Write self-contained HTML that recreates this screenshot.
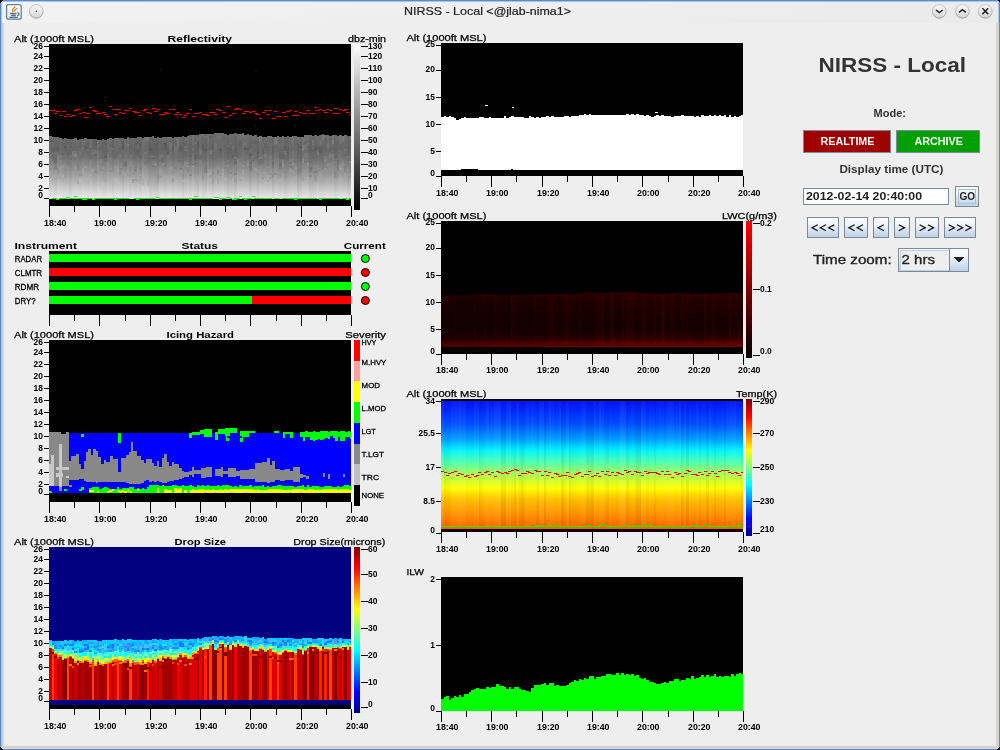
<!DOCTYPE html>
<html><head><meta charset="utf-8"><style>
html,body{margin:0;padding:0;width:1000px;height:750px;overflow:hidden;background:#eeeeee;}
svg{display:block;font-family:"Liberation Sans", sans-serif;position:absolute;left:0;top:0;}
.tx{filter:grayscale(1);}
text{shape-rendering:geometricPrecision;}
</style></head><body>
<svg width="1000" height="750" viewBox="0 0 1000 750" shape-rendering="crispEdges">
<defs><linearGradient id="gref" x1="0" y1="0" x2="0" y2="1"><stop offset="0" stop-color="#707070"/><stop offset="0.27" stop-color="#666"/><stop offset="0.4" stop-color="#707070"/><stop offset="0.5" stop-color="#828282"/><stop offset="0.65" stop-color="#989898"/><stop offset="0.8" stop-color="#b8b8b8"/><stop offset="0.9" stop-color="#d2d2d2"/><stop offset="1" stop-color="#e8e8e8"/></linearGradient><linearGradient id="gcbw" x1="0" y1="1" x2="0" y2="0"><stop offset="0" stop-color="#000"/><stop offset="1" stop-color="#fff"/></linearGradient><linearGradient id="gjet" x1="0" y1="1" x2="0" y2="0"><stop offset="0" stop-color="#00008f"/><stop offset="0.125" stop-color="#0000ff"/><stop offset="0.375" stop-color="#00ffff"/><stop offset="0.625" stop-color="#ffff00"/><stop offset="0.875" stop-color="#ff0000"/><stop offset="1" stop-color="#800000"/></linearGradient><linearGradient id="glwc" x1="0" y1="1" x2="0" y2="0"><stop offset="0" stop-color="#000"/><stop offset="1" stop-color="#ff0000"/></linearGradient><linearGradient id="gtemp" x1="0" y1="0" x2="0" y2="1"><stop offset="0" stop-color="#0010ff"/><stop offset="0.18" stop-color="#0050ff"/><stop offset="0.30" stop-color="#00a0ff"/><stop offset="0.38" stop-color="#00f0ff"/><stop offset="0.46" stop-color="#40ffc0"/><stop offset="0.58" stop-color="#b0ff50"/><stop offset="0.68" stop-color="#ffff00"/><stop offset="0.77" stop-color="#ffc000"/><stop offset="0.89" stop-color="#ff9000"/><stop offset="1" stop-color="#ff6000"/></linearGradient><linearGradient id="glw2" x1="0" y1="0" x2="0" y2="1"><stop offset="0" stop-color="#2e0000"/><stop offset="0.3" stop-color="#200000"/><stop offset="0.6" stop-color="#180000"/><stop offset="0.8" stop-color="#200000"/><stop offset="0.87" stop-color="#380000"/><stop offset="0.93" stop-color="#600000"/><stop offset="1" stop-color="#680000"/></linearGradient><linearGradient id="gbtn" x1="0" y1="0" x2="0" y2="1"><stop offset="0" stop-color="#ffffff"/><stop offset="0.3" stop-color="#f2f6fb"/><stop offset="1" stop-color="#bcd0e5"/></linearGradient><linearGradient id="gtb" x1="0" y1="0" x2="1" y2="0.3"><stop offset="0" stop-color="#f3f3f3"/><stop offset="1" stop-color="#ebebeb"/></linearGradient></defs>
<rect x="0.0" y="0.0" width="1000.0" height="23.0" fill="url(#gtb)" />
<rect x="0.0" y="23.0" width="1000.0" height="727.0" fill="#eeeeee" />
<rect x="0.0" y="0.0" width="1000.0" height="1.0" fill="#5a8ad0" />
<rect x="0.0" y="1.0" width="1000.0" height="1.0" fill="#a9c3e6" />
<rect x="0.0" y="0.0" width="1.0" height="750.0" fill="#5a8ad0" />
<rect x="1.0" y="1.0" width="1.0" height="748.0" fill="#a9c3e6" />
<rect x="999.0" y="0.0" width="1.0" height="750.0" fill="#5a8ad0" />
<rect x="998.0" y="1.0" width="1.0" height="748.0" fill="#a9c3e6" />
<rect x="0.0" y="749.0" width="1000.0" height="1.0" fill="#5a8ad0" />
<rect x="1.0" y="748.0" width="998.0" height="1.0" fill="#a9c3e6" />
<rect x="1.5" y="23.0" width="2.0" height="725.0" fill="#d6d2ce" />
<rect x="996.0" y="23.0" width="2.5" height="725.0" fill="#d6d2ce" />
<rect x="1.5" y="746.0" width="997.0" height="2.5" fill="#d6d2ce" />
<path d="M0,0 H3 L0,3 Z M1000,0 H997 L1000,3 Z M1000,750 H996 L1000,746 Z M0,750 H3 L0,747 Z" fill="#111"/>
<rect x="49.0" y="44.0" width="302.0" height="162.0" fill="#000" />
<rect x="49.0" y="131.0" width="302.0" height="68.0" fill="url(#gref)" />
<rect x="49.0" y="131.0" width="2.5" height="5.0" fill="#000" />
<rect x="49.0" y="136.0" width="2.5" height="63.0" fill="#fff" fill-opacity="0.01"/>
<rect x="49.0" y="140.0" width="2.5" height="2.0" fill="#000" fill-opacity="0.04"/>
<rect x="49.0" y="168.0" width="2.5" height="2.0" fill="#000" fill-opacity="0.07"/>
<rect x="49.0" y="140.0" width="2.5" height="2.0" fill="#000" fill-opacity="0.07"/>
<rect x="49.0" y="172.0" width="2.5" height="2.0" fill="#fff" fill-opacity="0.08"/>
<rect x="51.5" y="131.0" width="2.5" height="6.0" fill="#000" />
<rect x="51.5" y="137.0" width="2.5" height="62.0" fill="#fff" fill-opacity="0.00"/>
<rect x="51.5" y="140.0" width="2.5" height="2.0" fill="#000" fill-opacity="0.09"/>
<rect x="51.5" y="155.0" width="2.5" height="6.0" fill="#000" fill-opacity="0.05"/>
<rect x="51.5" y="156.0" width="2.5" height="2.0" fill="#000" fill-opacity="0.07"/>
<rect x="51.5" y="149.0" width="2.5" height="4.0" fill="#000" fill-opacity="0.08"/>
<rect x="54.0" y="131.0" width="2.5" height="6.0" fill="#000" />
<rect x="54.0" y="137.0" width="2.5" height="62.0" fill="#000" fill-opacity="0.03"/>
<rect x="54.0" y="171.0" width="2.5" height="6.0" fill="#fff" fill-opacity="0.07"/>
<rect x="54.0" y="166.0" width="2.5" height="4.0" fill="#000" fill-opacity="0.09"/>
<rect x="54.0" y="152.0" width="2.5" height="2.0" fill="#fff" fill-opacity="0.07"/>
<rect x="54.0" y="158.0" width="2.5" height="6.0" fill="#000" fill-opacity="0.10"/>
<rect x="56.5" y="131.0" width="2.5" height="6.0" fill="#000" />
<rect x="56.5" y="137.0" width="2.5" height="62.0" fill="#fff" fill-opacity="0.02"/>
<rect x="56.5" y="146.0" width="2.5" height="6.0" fill="#000" fill-opacity="0.10"/>
<rect x="56.5" y="141.0" width="2.5" height="4.0" fill="#000" fill-opacity="0.06"/>
<rect x="56.5" y="168.0" width="2.5" height="6.0" fill="#000" fill-opacity="0.05"/>
<rect x="56.5" y="154.0" width="2.5" height="6.0" fill="#fff" fill-opacity="0.04"/>
<rect x="59.0" y="131.0" width="2.5" height="7.0" fill="#000" />
<rect x="59.0" y="138.0" width="2.5" height="61.0" fill="#fff" fill-opacity="0.02"/>
<rect x="59.0" y="166.0" width="2.5" height="4.0" fill="#fff" fill-opacity="0.09"/>
<rect x="59.0" y="160.0" width="2.5" height="2.0" fill="#fff" fill-opacity="0.06"/>
<rect x="59.0" y="177.0" width="2.5" height="2.0" fill="#000" fill-opacity="0.05"/>
<rect x="59.0" y="156.0" width="2.5" height="2.0" fill="#fff" fill-opacity="0.06"/>
<rect x="61.5" y="131.0" width="2.5" height="8.0" fill="#000" />
<rect x="61.5" y="139.0" width="2.5" height="60.0" fill="#000" fill-opacity="0.02"/>
<rect x="61.5" y="164.0" width="2.5" height="4.0" fill="#fff" fill-opacity="0.09"/>
<rect x="61.5" y="174.0" width="2.5" height="4.0" fill="#fff" fill-opacity="0.10"/>
<rect x="61.5" y="163.0" width="2.5" height="2.0" fill="#000" fill-opacity="0.05"/>
<rect x="61.5" y="153.0" width="2.5" height="2.0" fill="#000" fill-opacity="0.09"/>
<rect x="64.0" y="131.0" width="2.5" height="7.0" fill="#000" />
<rect x="64.0" y="138.0" width="2.5" height="61.0" fill="#000" fill-opacity="0.01"/>
<rect x="64.0" y="172.0" width="2.5" height="4.0" fill="#fff" fill-opacity="0.06"/>
<rect x="64.0" y="146.0" width="2.5" height="2.0" fill="#000" fill-opacity="0.09"/>
<rect x="64.0" y="173.0" width="2.5" height="6.0" fill="#000" fill-opacity="0.06"/>
<rect x="64.0" y="168.0" width="2.5" height="6.0" fill="#000" fill-opacity="0.04"/>
<rect x="66.5" y="131.0" width="2.5" height="8.0" fill="#000" />
<rect x="66.5" y="139.0" width="2.5" height="60.0" fill="#000" fill-opacity="0.01"/>
<rect x="66.5" y="142.0" width="2.5" height="2.0" fill="#000" fill-opacity="0.05"/>
<rect x="66.5" y="145.0" width="2.5" height="4.0" fill="#fff" fill-opacity="0.04"/>
<rect x="66.5" y="152.0" width="2.5" height="6.0" fill="#000" fill-opacity="0.06"/>
<rect x="66.5" y="161.0" width="2.5" height="4.0" fill="#000" fill-opacity="0.05"/>
<rect x="69.0" y="131.0" width="2.5" height="8.0" fill="#000" />
<rect x="69.0" y="139.0" width="2.5" height="60.0" fill="#000" fill-opacity="0.05"/>
<rect x="69.0" y="158.0" width="2.5" height="2.0" fill="#000" fill-opacity="0.08"/>
<rect x="69.0" y="155.0" width="2.5" height="6.0" fill="#fff" fill-opacity="0.05"/>
<rect x="69.0" y="140.0" width="2.5" height="2.0" fill="#fff" fill-opacity="0.07"/>
<rect x="69.0" y="148.0" width="2.5" height="2.0" fill="#fff" fill-opacity="0.06"/>
<rect x="71.5" y="131.0" width="2.5" height="8.0" fill="#000" />
<rect x="71.5" y="139.0" width="2.5" height="60.0" fill="#fff" fill-opacity="0.00"/>
<rect x="71.5" y="172.0" width="2.5" height="4.0" fill="#fff" fill-opacity="0.06"/>
<rect x="71.5" y="153.0" width="2.5" height="4.0" fill="#fff" fill-opacity="0.08"/>
<rect x="71.5" y="151.0" width="2.5" height="2.0" fill="#fff" fill-opacity="0.08"/>
<rect x="71.5" y="153.0" width="2.5" height="2.0" fill="#fff" fill-opacity="0.06"/>
<rect x="74.0" y="131.0" width="2.5" height="7.0" fill="#000" />
<rect x="74.0" y="138.0" width="2.5" height="61.0" fill="#000" fill-opacity="0.00"/>
<rect x="74.0" y="154.0" width="2.5" height="2.0" fill="#fff" fill-opacity="0.10"/>
<rect x="74.0" y="166.0" width="2.5" height="4.0" fill="#fff" fill-opacity="0.06"/>
<rect x="74.0" y="152.0" width="2.5" height="2.0" fill="#000" fill-opacity="0.05"/>
<rect x="74.0" y="151.0" width="2.5" height="6.0" fill="#fff" fill-opacity="0.09"/>
<rect x="76.5" y="131.0" width="2.5" height="9.0" fill="#000" />
<rect x="76.5" y="140.0" width="2.5" height="59.0" fill="#fff" fill-opacity="0.02"/>
<rect x="76.5" y="181.0" width="2.5" height="2.0" fill="#fff" fill-opacity="0.05"/>
<rect x="76.5" y="164.0" width="2.5" height="2.0" fill="#000" fill-opacity="0.05"/>
<rect x="76.5" y="180.0" width="2.5" height="4.0" fill="#000" fill-opacity="0.10"/>
<rect x="76.5" y="165.0" width="2.5" height="6.0" fill="#000" fill-opacity="0.10"/>
<rect x="79.0" y="131.0" width="2.5" height="8.0" fill="#000" />
<rect x="79.0" y="139.0" width="2.5" height="60.0" fill="#000" fill-opacity="0.01"/>
<rect x="79.0" y="148.0" width="2.5" height="6.0" fill="#fff" fill-opacity="0.05"/>
<rect x="79.0" y="177.0" width="2.5" height="6.0" fill="#fff" fill-opacity="0.06"/>
<rect x="79.0" y="174.0" width="2.5" height="2.0" fill="#000" fill-opacity="0.09"/>
<rect x="79.0" y="180.0" width="2.5" height="2.0" fill="#fff" fill-opacity="0.10"/>
<rect x="81.5" y="131.0" width="2.5" height="8.0" fill="#000" />
<rect x="81.5" y="139.0" width="2.5" height="60.0" fill="#fff" fill-opacity="0.04"/>
<rect x="81.5" y="152.0" width="2.5" height="2.0" fill="#000" fill-opacity="0.06"/>
<rect x="81.5" y="154.0" width="2.5" height="4.0" fill="#000" fill-opacity="0.07"/>
<rect x="81.5" y="147.0" width="2.5" height="2.0" fill="#fff" fill-opacity="0.06"/>
<rect x="81.5" y="168.0" width="2.5" height="6.0" fill="#fff" fill-opacity="0.09"/>
<rect x="84.0" y="131.0" width="2.5" height="7.0" fill="#000" />
<rect x="84.0" y="138.0" width="2.5" height="61.0" fill="#fff" fill-opacity="0.01"/>
<rect x="84.0" y="166.0" width="2.5" height="2.0" fill="#fff" fill-opacity="0.09"/>
<rect x="84.0" y="147.0" width="2.5" height="2.0" fill="#000" fill-opacity="0.08"/>
<rect x="84.0" y="145.0" width="2.5" height="2.0" fill="#000" fill-opacity="0.07"/>
<rect x="84.0" y="173.0" width="2.5" height="6.0" fill="#fff" fill-opacity="0.05"/>
<rect x="86.5" y="131.0" width="2.5" height="8.0" fill="#000" />
<rect x="86.5" y="139.0" width="2.5" height="60.0" fill="#000" fill-opacity="0.01"/>
<rect x="86.5" y="145.0" width="2.5" height="6.0" fill="#fff" fill-opacity="0.09"/>
<rect x="86.5" y="143.0" width="2.5" height="6.0" fill="#000" fill-opacity="0.10"/>
<rect x="86.5" y="177.0" width="2.5" height="2.0" fill="#fff" fill-opacity="0.07"/>
<rect x="86.5" y="173.0" width="2.5" height="6.0" fill="#fff" fill-opacity="0.05"/>
<rect x="89.0" y="131.0" width="2.5" height="8.0" fill="#000" />
<rect x="89.0" y="139.0" width="2.5" height="60.0" fill="#fff" fill-opacity="0.04"/>
<rect x="89.0" y="174.0" width="2.5" height="2.0" fill="#fff" fill-opacity="0.05"/>
<rect x="89.0" y="146.0" width="2.5" height="6.0" fill="#000" fill-opacity="0.04"/>
<rect x="89.0" y="154.0" width="2.5" height="6.0" fill="#000" fill-opacity="0.08"/>
<rect x="89.0" y="146.0" width="2.5" height="2.0" fill="#fff" fill-opacity="0.08"/>
<rect x="91.5" y="131.0" width="2.5" height="8.0" fill="#000" />
<rect x="91.5" y="139.0" width="2.5" height="60.0" fill="#000" fill-opacity="0.01"/>
<rect x="91.5" y="168.0" width="2.5" height="2.0" fill="#fff" fill-opacity="0.05"/>
<rect x="91.5" y="170.0" width="2.5" height="2.0" fill="#fff" fill-opacity="0.09"/>
<rect x="91.5" y="149.0" width="2.5" height="6.0" fill="#fff" fill-opacity="0.06"/>
<rect x="91.5" y="165.0" width="2.5" height="2.0" fill="#000" fill-opacity="0.05"/>
<rect x="94.0" y="131.0" width="2.5" height="8.0" fill="#000" />
<rect x="94.0" y="139.0" width="2.5" height="60.0" fill="#000" fill-opacity="0.02"/>
<rect x="94.0" y="140.0" width="2.5" height="6.0" fill="#000" fill-opacity="0.08"/>
<rect x="94.0" y="171.0" width="2.5" height="2.0" fill="#000" fill-opacity="0.10"/>
<rect x="94.0" y="153.0" width="2.5" height="2.0" fill="#000" fill-opacity="0.06"/>
<rect x="94.0" y="150.0" width="2.5" height="4.0" fill="#fff" fill-opacity="0.09"/>
<rect x="96.5" y="131.0" width="2.5" height="9.0" fill="#000" />
<rect x="96.5" y="140.0" width="2.5" height="59.0" fill="#fff" fill-opacity="0.03"/>
<rect x="96.5" y="165.0" width="2.5" height="2.0" fill="#fff" fill-opacity="0.07"/>
<rect x="96.5" y="171.0" width="2.5" height="4.0" fill="#000" fill-opacity="0.04"/>
<rect x="96.5" y="151.0" width="2.5" height="6.0" fill="#fff" fill-opacity="0.06"/>
<rect x="96.5" y="141.0" width="2.5" height="2.0" fill="#fff" fill-opacity="0.05"/>
<rect x="99.0" y="131.0" width="2.5" height="9.0" fill="#000" />
<rect x="99.0" y="140.0" width="2.5" height="59.0" fill="#fff" fill-opacity="0.00"/>
<rect x="99.0" y="169.0" width="2.5" height="2.0" fill="#000" fill-opacity="0.07"/>
<rect x="99.0" y="157.0" width="2.5" height="2.0" fill="#000" fill-opacity="0.08"/>
<rect x="99.0" y="147.0" width="2.5" height="2.0" fill="#000" fill-opacity="0.05"/>
<rect x="99.0" y="159.0" width="2.5" height="4.0" fill="#fff" fill-opacity="0.05"/>
<rect x="101.5" y="131.0" width="2.5" height="8.0" fill="#000" />
<rect x="101.5" y="139.0" width="2.5" height="60.0" fill="#000" fill-opacity="0.03"/>
<rect x="101.5" y="140.0" width="2.5" height="4.0" fill="#000" fill-opacity="0.04"/>
<rect x="101.5" y="171.0" width="2.5" height="2.0" fill="#fff" fill-opacity="0.05"/>
<rect x="101.5" y="167.0" width="2.5" height="2.0" fill="#fff" fill-opacity="0.08"/>
<rect x="101.5" y="181.0" width="2.5" height="6.0" fill="#fff" fill-opacity="0.09"/>
<rect x="104.0" y="131.0" width="2.5" height="9.0" fill="#000" />
<rect x="104.0" y="140.0" width="2.5" height="59.0" fill="#000" fill-opacity="0.02"/>
<rect x="104.0" y="154.0" width="2.5" height="4.0" fill="#000" fill-opacity="0.09"/>
<rect x="104.0" y="180.0" width="2.5" height="2.0" fill="#000" fill-opacity="0.06"/>
<rect x="104.0" y="143.0" width="2.5" height="2.0" fill="#000" fill-opacity="0.08"/>
<rect x="104.0" y="156.0" width="2.5" height="6.0" fill="#000" fill-opacity="0.05"/>
<rect x="106.5" y="131.0" width="2.5" height="8.0" fill="#000" />
<rect x="106.5" y="139.0" width="2.5" height="60.0" fill="#fff" fill-opacity="0.04"/>
<rect x="106.5" y="157.0" width="2.5" height="2.0" fill="#fff" fill-opacity="0.04"/>
<rect x="106.5" y="150.0" width="2.5" height="2.0" fill="#000" fill-opacity="0.04"/>
<rect x="106.5" y="162.0" width="2.5" height="4.0" fill="#fff" fill-opacity="0.07"/>
<rect x="106.5" y="154.0" width="2.5" height="2.0" fill="#fff" fill-opacity="0.06"/>
<rect x="109.0" y="131.0" width="2.5" height="7.0" fill="#000" />
<rect x="109.0" y="138.0" width="2.5" height="61.0" fill="#000" fill-opacity="0.00"/>
<rect x="109.0" y="168.0" width="2.5" height="4.0" fill="#fff" fill-opacity="0.05"/>
<rect x="109.0" y="170.0" width="2.5" height="2.0" fill="#000" fill-opacity="0.09"/>
<rect x="109.0" y="147.0" width="2.5" height="6.0" fill="#fff" fill-opacity="0.06"/>
<rect x="109.0" y="157.0" width="2.5" height="4.0" fill="#fff" fill-opacity="0.05"/>
<rect x="111.5" y="131.0" width="2.5" height="8.0" fill="#000" />
<rect x="111.5" y="139.0" width="2.5" height="60.0" fill="#000" fill-opacity="0.04"/>
<rect x="111.5" y="177.0" width="2.5" height="6.0" fill="#fff" fill-opacity="0.08"/>
<rect x="111.5" y="170.0" width="2.5" height="2.0" fill="#000" fill-opacity="0.08"/>
<rect x="111.5" y="148.0" width="2.5" height="2.0" fill="#fff" fill-opacity="0.08"/>
<rect x="111.5" y="171.0" width="2.5" height="6.0" fill="#fff" fill-opacity="0.09"/>
<rect x="114.0" y="131.0" width="2.5" height="7.0" fill="#000" />
<rect x="114.0" y="138.0" width="2.5" height="61.0" fill="#fff" fill-opacity="0.03"/>
<rect x="114.0" y="139.0" width="2.5" height="2.0" fill="#000" fill-opacity="0.04"/>
<rect x="114.0" y="178.0" width="2.5" height="4.0" fill="#fff" fill-opacity="0.06"/>
<rect x="114.0" y="166.0" width="2.5" height="2.0" fill="#fff" fill-opacity="0.08"/>
<rect x="114.0" y="153.0" width="2.5" height="6.0" fill="#000" fill-opacity="0.07"/>
<rect x="116.5" y="131.0" width="2.5" height="7.0" fill="#000" />
<rect x="116.5" y="138.0" width="2.5" height="61.0" fill="#fff" fill-opacity="0.05"/>
<rect x="116.5" y="143.0" width="2.5" height="2.0" fill="#fff" fill-opacity="0.07"/>
<rect x="116.5" y="142.0" width="2.5" height="4.0" fill="#000" fill-opacity="0.09"/>
<rect x="116.5" y="152.0" width="2.5" height="6.0" fill="#000" fill-opacity="0.06"/>
<rect x="116.5" y="168.0" width="2.5" height="4.0" fill="#fff" fill-opacity="0.08"/>
<rect x="119.0" y="131.0" width="2.5" height="7.0" fill="#000" />
<rect x="119.0" y="138.0" width="2.5" height="61.0" fill="#000" fill-opacity="0.00"/>
<rect x="119.0" y="154.0" width="2.5" height="4.0" fill="#fff" fill-opacity="0.05"/>
<rect x="119.0" y="168.0" width="2.5" height="2.0" fill="#000" fill-opacity="0.10"/>
<rect x="119.0" y="144.0" width="2.5" height="2.0" fill="#fff" fill-opacity="0.06"/>
<rect x="119.0" y="171.0" width="2.5" height="4.0" fill="#000" fill-opacity="0.07"/>
<rect x="121.5" y="131.0" width="2.5" height="7.0" fill="#000" />
<rect x="121.5" y="138.0" width="2.5" height="61.0" fill="#000" fill-opacity="0.04"/>
<rect x="121.5" y="143.0" width="2.5" height="6.0" fill="#000" fill-opacity="0.07"/>
<rect x="121.5" y="170.0" width="2.5" height="6.0" fill="#fff" fill-opacity="0.06"/>
<rect x="121.5" y="151.0" width="2.5" height="2.0" fill="#fff" fill-opacity="0.05"/>
<rect x="121.5" y="171.0" width="2.5" height="4.0" fill="#fff" fill-opacity="0.05"/>
<rect x="124.0" y="131.0" width="2.5" height="8.0" fill="#000" />
<rect x="124.0" y="139.0" width="2.5" height="60.0" fill="#fff" fill-opacity="0.03"/>
<rect x="124.0" y="162.0" width="2.5" height="2.0" fill="#000" fill-opacity="0.09"/>
<rect x="124.0" y="164.0" width="2.5" height="2.0" fill="#000" fill-opacity="0.10"/>
<rect x="124.0" y="167.0" width="2.5" height="6.0" fill="#000" fill-opacity="0.05"/>
<rect x="124.0" y="161.0" width="2.5" height="6.0" fill="#000" fill-opacity="0.09"/>
<rect x="126.5" y="131.0" width="2.5" height="6.0" fill="#000" />
<rect x="126.5" y="137.0" width="2.5" height="62.0" fill="#fff" fill-opacity="0.04"/>
<rect x="126.5" y="144.0" width="2.5" height="2.0" fill="#fff" fill-opacity="0.09"/>
<rect x="126.5" y="155.0" width="2.5" height="4.0" fill="#000" fill-opacity="0.06"/>
<rect x="126.5" y="174.0" width="2.5" height="2.0" fill="#000" fill-opacity="0.07"/>
<rect x="126.5" y="154.0" width="2.5" height="2.0" fill="#000" fill-opacity="0.04"/>
<rect x="129.0" y="131.0" width="2.5" height="7.0" fill="#000" />
<rect x="129.0" y="138.0" width="2.5" height="61.0" fill="#000" fill-opacity="0.03"/>
<rect x="129.0" y="155.0" width="2.5" height="6.0" fill="#fff" fill-opacity="0.05"/>
<rect x="129.0" y="161.0" width="2.5" height="6.0" fill="#fff" fill-opacity="0.09"/>
<rect x="129.0" y="178.0" width="2.5" height="6.0" fill="#fff" fill-opacity="0.10"/>
<rect x="129.0" y="173.0" width="2.5" height="2.0" fill="#fff" fill-opacity="0.04"/>
<rect x="131.5" y="131.0" width="2.5" height="7.0" fill="#000" />
<rect x="131.5" y="138.0" width="2.5" height="61.0" fill="#fff" fill-opacity="0.02"/>
<rect x="131.5" y="179.0" width="2.5" height="4.0" fill="#000" fill-opacity="0.09"/>
<rect x="131.5" y="173.0" width="2.5" height="2.0" fill="#000" fill-opacity="0.06"/>
<rect x="131.5" y="156.0" width="2.5" height="4.0" fill="#000" fill-opacity="0.08"/>
<rect x="131.5" y="179.0" width="2.5" height="4.0" fill="#000" fill-opacity="0.05"/>
<rect x="134.0" y="131.0" width="2.5" height="7.0" fill="#000" />
<rect x="134.0" y="138.0" width="2.5" height="61.0" fill="#000" fill-opacity="0.03"/>
<rect x="134.0" y="179.0" width="2.5" height="2.0" fill="#000" fill-opacity="0.07"/>
<rect x="134.0" y="169.0" width="2.5" height="2.0" fill="#000" fill-opacity="0.06"/>
<rect x="134.0" y="166.0" width="2.5" height="6.0" fill="#000" fill-opacity="0.05"/>
<rect x="134.0" y="143.0" width="2.5" height="2.0" fill="#000" fill-opacity="0.05"/>
<rect x="136.5" y="131.0" width="2.5" height="6.0" fill="#000" />
<rect x="136.5" y="137.0" width="2.5" height="62.0" fill="#fff" fill-opacity="0.01"/>
<rect x="136.5" y="138.0" width="2.5" height="6.0" fill="#000" fill-opacity="0.08"/>
<rect x="136.5" y="150.0" width="2.5" height="6.0" fill="#000" fill-opacity="0.09"/>
<rect x="136.5" y="168.0" width="2.5" height="4.0" fill="#fff" fill-opacity="0.06"/>
<rect x="136.5" y="180.0" width="2.5" height="2.0" fill="#000" fill-opacity="0.09"/>
<rect x="139.0" y="131.0" width="2.5" height="6.0" fill="#000" />
<rect x="139.0" y="137.0" width="2.5" height="62.0" fill="#000" fill-opacity="0.03"/>
<rect x="139.0" y="156.0" width="2.5" height="2.0" fill="#000" fill-opacity="0.07"/>
<rect x="139.0" y="167.0" width="2.5" height="6.0" fill="#000" fill-opacity="0.06"/>
<rect x="139.0" y="170.0" width="2.5" height="6.0" fill="#fff" fill-opacity="0.05"/>
<rect x="139.0" y="143.0" width="2.5" height="2.0" fill="#000" fill-opacity="0.07"/>
<rect x="141.5" y="131.0" width="2.5" height="7.0" fill="#000" />
<rect x="141.5" y="138.0" width="2.5" height="61.0" fill="#fff" fill-opacity="0.05"/>
<rect x="141.5" y="179.0" width="2.5" height="6.0" fill="#000" fill-opacity="0.09"/>
<rect x="141.5" y="138.0" width="2.5" height="2.0" fill="#000" fill-opacity="0.10"/>
<rect x="141.5" y="179.0" width="2.5" height="4.0" fill="#fff" fill-opacity="0.08"/>
<rect x="141.5" y="171.0" width="2.5" height="6.0" fill="#fff" fill-opacity="0.05"/>
<rect x="144.0" y="131.0" width="2.5" height="6.0" fill="#000" />
<rect x="144.0" y="137.0" width="2.5" height="62.0" fill="#fff" fill-opacity="0.03"/>
<rect x="144.0" y="161.0" width="2.5" height="4.0" fill="#000" fill-opacity="0.08"/>
<rect x="144.0" y="137.0" width="2.5" height="4.0" fill="#fff" fill-opacity="0.06"/>
<rect x="144.0" y="157.0" width="2.5" height="2.0" fill="#000" fill-opacity="0.05"/>
<rect x="144.0" y="152.0" width="2.5" height="2.0" fill="#fff" fill-opacity="0.08"/>
<rect x="146.5" y="131.0" width="2.5" height="6.0" fill="#000" />
<rect x="146.5" y="137.0" width="2.5" height="62.0" fill="#000" fill-opacity="0.00"/>
<rect x="146.5" y="180.0" width="2.5" height="6.0" fill="#000" fill-opacity="0.05"/>
<rect x="146.5" y="164.0" width="2.5" height="4.0" fill="#000" fill-opacity="0.04"/>
<rect x="146.5" y="158.0" width="2.5" height="6.0" fill="#000" fill-opacity="0.06"/>
<rect x="146.5" y="137.0" width="2.5" height="4.0" fill="#fff" fill-opacity="0.07"/>
<rect x="149.0" y="131.0" width="2.5" height="6.0" fill="#000" />
<rect x="149.0" y="137.0" width="2.5" height="62.0" fill="#000" fill-opacity="0.05"/>
<rect x="149.0" y="149.0" width="2.5" height="2.0" fill="#000" fill-opacity="0.06"/>
<rect x="149.0" y="155.0" width="2.5" height="2.0" fill="#fff" fill-opacity="0.07"/>
<rect x="149.0" y="148.0" width="2.5" height="2.0" fill="#000" fill-opacity="0.09"/>
<rect x="149.0" y="140.0" width="2.5" height="2.0" fill="#fff" fill-opacity="0.04"/>
<rect x="151.5" y="131.0" width="2.5" height="5.0" fill="#000" />
<rect x="151.5" y="136.0" width="2.5" height="63.0" fill="#000" fill-opacity="0.03"/>
<rect x="151.5" y="139.0" width="2.5" height="2.0" fill="#000" fill-opacity="0.09"/>
<rect x="151.5" y="156.0" width="2.5" height="2.0" fill="#fff" fill-opacity="0.10"/>
<rect x="151.5" y="157.0" width="2.5" height="2.0" fill="#000" fill-opacity="0.10"/>
<rect x="151.5" y="165.0" width="2.5" height="2.0" fill="#000" fill-opacity="0.08"/>
<rect x="154.0" y="131.0" width="2.5" height="7.0" fill="#000" />
<rect x="154.0" y="138.0" width="2.5" height="61.0" fill="#000" fill-opacity="0.05"/>
<rect x="154.0" y="144.0" width="2.5" height="2.0" fill="#000" fill-opacity="0.04"/>
<rect x="154.0" y="164.0" width="2.5" height="2.0" fill="#fff" fill-opacity="0.09"/>
<rect x="154.0" y="162.0" width="2.5" height="4.0" fill="#fff" fill-opacity="0.06"/>
<rect x="154.0" y="165.0" width="2.5" height="2.0" fill="#000" fill-opacity="0.07"/>
<rect x="156.5" y="131.0" width="2.5" height="6.0" fill="#000" />
<rect x="156.5" y="137.0" width="2.5" height="62.0" fill="#000" fill-opacity="0.05"/>
<rect x="156.5" y="160.0" width="2.5" height="6.0" fill="#000" fill-opacity="0.06"/>
<rect x="156.5" y="177.0" width="2.5" height="6.0" fill="#000" fill-opacity="0.04"/>
<rect x="156.5" y="141.0" width="2.5" height="2.0" fill="#000" fill-opacity="0.08"/>
<rect x="156.5" y="175.0" width="2.5" height="4.0" fill="#000" fill-opacity="0.06"/>
<rect x="159.0" y="131.0" width="2.5" height="7.0" fill="#000" />
<rect x="159.0" y="138.0" width="2.5" height="61.0" fill="#fff" fill-opacity="0.00"/>
<rect x="159.0" y="158.0" width="2.5" height="4.0" fill="#000" fill-opacity="0.08"/>
<rect x="159.0" y="176.0" width="2.5" height="2.0" fill="#000" fill-opacity="0.05"/>
<rect x="159.0" y="168.0" width="2.5" height="6.0" fill="#fff" fill-opacity="0.06"/>
<rect x="159.0" y="154.0" width="2.5" height="6.0" fill="#fff" fill-opacity="0.05"/>
<rect x="161.5" y="131.0" width="2.5" height="6.0" fill="#000" />
<rect x="161.5" y="137.0" width="2.5" height="62.0" fill="#fff" fill-opacity="0.00"/>
<rect x="161.5" y="156.0" width="2.5" height="2.0" fill="#fff" fill-opacity="0.06"/>
<rect x="161.5" y="157.0" width="2.5" height="6.0" fill="#000" fill-opacity="0.09"/>
<rect x="161.5" y="142.0" width="2.5" height="2.0" fill="#000" fill-opacity="0.05"/>
<rect x="161.5" y="163.0" width="2.5" height="2.0" fill="#fff" fill-opacity="0.07"/>
<rect x="164.0" y="131.0" width="2.5" height="6.0" fill="#000" />
<rect x="164.0" y="137.0" width="2.5" height="62.0" fill="#000" fill-opacity="0.01"/>
<rect x="164.0" y="143.0" width="2.5" height="2.0" fill="#000" fill-opacity="0.05"/>
<rect x="164.0" y="143.0" width="2.5" height="6.0" fill="#000" fill-opacity="0.08"/>
<rect x="164.0" y="165.0" width="2.5" height="2.0" fill="#000" fill-opacity="0.07"/>
<rect x="164.0" y="176.0" width="2.5" height="2.0" fill="#fff" fill-opacity="0.09"/>
<rect x="166.5" y="131.0" width="2.5" height="6.0" fill="#000" />
<rect x="166.5" y="137.0" width="2.5" height="62.0" fill="#fff" fill-opacity="0.01"/>
<rect x="166.5" y="155.0" width="2.5" height="4.0" fill="#fff" fill-opacity="0.06"/>
<rect x="166.5" y="153.0" width="2.5" height="2.0" fill="#000" fill-opacity="0.05"/>
<rect x="166.5" y="152.0" width="2.5" height="2.0" fill="#000" fill-opacity="0.09"/>
<rect x="166.5" y="149.0" width="2.5" height="4.0" fill="#000" fill-opacity="0.06"/>
<rect x="169.0" y="131.0" width="2.5" height="6.0" fill="#000" />
<rect x="169.0" y="137.0" width="2.5" height="62.0" fill="#fff" fill-opacity="0.03"/>
<rect x="169.0" y="143.0" width="2.5" height="6.0" fill="#fff" fill-opacity="0.05"/>
<rect x="169.0" y="167.0" width="2.5" height="2.0" fill="#fff" fill-opacity="0.09"/>
<rect x="169.0" y="139.0" width="2.5" height="4.0" fill="#000" fill-opacity="0.04"/>
<rect x="169.0" y="175.0" width="2.5" height="2.0" fill="#fff" fill-opacity="0.06"/>
<rect x="171.5" y="131.0" width="2.5" height="7.0" fill="#000" />
<rect x="171.5" y="138.0" width="2.5" height="61.0" fill="#000" fill-opacity="0.02"/>
<rect x="171.5" y="180.0" width="2.5" height="2.0" fill="#000" fill-opacity="0.08"/>
<rect x="171.5" y="177.0" width="2.5" height="4.0" fill="#000" fill-opacity="0.06"/>
<rect x="171.5" y="147.0" width="2.5" height="2.0" fill="#000" fill-opacity="0.06"/>
<rect x="171.5" y="176.0" width="2.5" height="2.0" fill="#fff" fill-opacity="0.09"/>
<rect x="174.0" y="131.0" width="2.5" height="6.0" fill="#000" />
<rect x="174.0" y="137.0" width="2.5" height="62.0" fill="#fff" fill-opacity="0.02"/>
<rect x="174.0" y="141.0" width="2.5" height="2.0" fill="#000" fill-opacity="0.07"/>
<rect x="174.0" y="167.0" width="2.5" height="2.0" fill="#000" fill-opacity="0.09"/>
<rect x="174.0" y="179.0" width="2.5" height="2.0" fill="#fff" fill-opacity="0.05"/>
<rect x="174.0" y="147.0" width="2.5" height="6.0" fill="#fff" fill-opacity="0.06"/>
<rect x="176.5" y="131.0" width="2.5" height="6.0" fill="#000" />
<rect x="176.5" y="137.0" width="2.5" height="62.0" fill="#fff" fill-opacity="0.02"/>
<rect x="176.5" y="156.0" width="2.5" height="4.0" fill="#000" fill-opacity="0.04"/>
<rect x="176.5" y="160.0" width="2.5" height="2.0" fill="#000" fill-opacity="0.06"/>
<rect x="176.5" y="137.0" width="2.5" height="6.0" fill="#fff" fill-opacity="0.07"/>
<rect x="176.5" y="142.0" width="2.5" height="6.0" fill="#fff" fill-opacity="0.06"/>
<rect x="179.0" y="131.0" width="2.5" height="6.0" fill="#000" />
<rect x="179.0" y="137.0" width="2.5" height="62.0" fill="#000" fill-opacity="0.01"/>
<rect x="179.0" y="146.0" width="2.5" height="6.0" fill="#000" fill-opacity="0.08"/>
<rect x="179.0" y="160.0" width="2.5" height="2.0" fill="#000" fill-opacity="0.06"/>
<rect x="179.0" y="170.0" width="2.5" height="2.0" fill="#fff" fill-opacity="0.05"/>
<rect x="179.0" y="168.0" width="2.5" height="2.0" fill="#000" fill-opacity="0.09"/>
<rect x="181.5" y="131.0" width="2.5" height="5.0" fill="#000" />
<rect x="181.5" y="136.0" width="2.5" height="63.0" fill="#000" fill-opacity="0.05"/>
<rect x="181.5" y="174.0" width="2.5" height="6.0" fill="#000" fill-opacity="0.08"/>
<rect x="181.5" y="180.0" width="2.5" height="2.0" fill="#fff" fill-opacity="0.09"/>
<rect x="181.5" y="175.0" width="2.5" height="6.0" fill="#fff" fill-opacity="0.05"/>
<rect x="181.5" y="166.0" width="2.5" height="2.0" fill="#fff" fill-opacity="0.04"/>
<rect x="184.0" y="131.0" width="2.5" height="6.0" fill="#000" />
<rect x="184.0" y="137.0" width="2.5" height="62.0" fill="#000" fill-opacity="0.01"/>
<rect x="184.0" y="146.0" width="2.5" height="2.0" fill="#fff" fill-opacity="0.09"/>
<rect x="184.0" y="149.0" width="2.5" height="2.0" fill="#fff" fill-opacity="0.09"/>
<rect x="184.0" y="180.0" width="2.5" height="2.0" fill="#fff" fill-opacity="0.06"/>
<rect x="184.0" y="161.0" width="2.5" height="6.0" fill="#fff" fill-opacity="0.08"/>
<rect x="186.5" y="131.0" width="2.5" height="5.0" fill="#000" />
<rect x="186.5" y="136.0" width="2.5" height="63.0" fill="#fff" fill-opacity="0.02"/>
<rect x="186.5" y="163.0" width="2.5" height="6.0" fill="#fff" fill-opacity="0.07"/>
<rect x="186.5" y="164.0" width="2.5" height="2.0" fill="#000" fill-opacity="0.08"/>
<rect x="186.5" y="167.0" width="2.5" height="6.0" fill="#000" fill-opacity="0.09"/>
<rect x="186.5" y="165.0" width="2.5" height="2.0" fill="#fff" fill-opacity="0.06"/>
<rect x="189.0" y="131.0" width="2.5" height="4.0" fill="#000" />
<rect x="189.0" y="135.0" width="2.5" height="64.0" fill="#000" fill-opacity="0.02"/>
<rect x="189.0" y="163.0" width="2.5" height="2.0" fill="#000" fill-opacity="0.05"/>
<rect x="189.0" y="155.0" width="2.5" height="2.0" fill="#000" fill-opacity="0.07"/>
<rect x="189.0" y="159.0" width="2.5" height="2.0" fill="#000" fill-opacity="0.04"/>
<rect x="189.0" y="174.0" width="2.5" height="2.0" fill="#000" fill-opacity="0.10"/>
<rect x="191.5" y="131.0" width="2.5" height="4.0" fill="#000" />
<rect x="191.5" y="135.0" width="2.5" height="64.0" fill="#fff" fill-opacity="0.05"/>
<rect x="191.5" y="145.0" width="2.5" height="2.0" fill="#000" fill-opacity="0.06"/>
<rect x="191.5" y="151.0" width="2.5" height="2.0" fill="#000" fill-opacity="0.08"/>
<rect x="191.5" y="164.0" width="2.5" height="2.0" fill="#000" fill-opacity="0.10"/>
<rect x="191.5" y="165.0" width="2.5" height="2.0" fill="#fff" fill-opacity="0.08"/>
<rect x="194.0" y="131.0" width="2.5" height="4.0" fill="#000" />
<rect x="194.0" y="135.0" width="2.5" height="64.0" fill="#000" fill-opacity="0.02"/>
<rect x="194.0" y="160.0" width="2.5" height="2.0" fill="#fff" fill-opacity="0.06"/>
<rect x="194.0" y="155.0" width="2.5" height="6.0" fill="#000" fill-opacity="0.09"/>
<rect x="194.0" y="142.0" width="2.5" height="2.0" fill="#fff" fill-opacity="0.06"/>
<rect x="194.0" y="163.0" width="2.5" height="2.0" fill="#000" fill-opacity="0.07"/>
<rect x="196.5" y="131.0" width="2.5" height="4.0" fill="#000" />
<rect x="196.5" y="135.0" width="2.5" height="64.0" fill="#000" fill-opacity="0.04"/>
<rect x="196.5" y="159.0" width="2.5" height="4.0" fill="#fff" fill-opacity="0.06"/>
<rect x="196.5" y="140.0" width="2.5" height="6.0" fill="#000" fill-opacity="0.08"/>
<rect x="196.5" y="138.0" width="2.5" height="4.0" fill="#fff" fill-opacity="0.06"/>
<rect x="196.5" y="175.0" width="2.5" height="4.0" fill="#fff" fill-opacity="0.08"/>
<rect x="199.0" y="131.0" width="2.5" height="3.0" fill="#000" />
<rect x="199.0" y="134.0" width="2.5" height="65.0" fill="#fff" fill-opacity="0.01"/>
<rect x="199.0" y="160.0" width="2.5" height="4.0" fill="#fff" fill-opacity="0.05"/>
<rect x="199.0" y="148.0" width="2.5" height="2.0" fill="#000" fill-opacity="0.04"/>
<rect x="199.0" y="156.0" width="2.5" height="4.0" fill="#000" fill-opacity="0.06"/>
<rect x="199.0" y="148.0" width="2.5" height="6.0" fill="#fff" fill-opacity="0.08"/>
<rect x="201.5" y="131.0" width="2.5" height="3.0" fill="#000" />
<rect x="201.5" y="134.0" width="2.5" height="65.0" fill="#000" fill-opacity="0.03"/>
<rect x="201.5" y="142.0" width="2.5" height="2.0" fill="#fff" fill-opacity="0.05"/>
<rect x="201.5" y="143.0" width="2.5" height="6.0" fill="#000" fill-opacity="0.08"/>
<rect x="201.5" y="176.0" width="2.5" height="4.0" fill="#000" fill-opacity="0.06"/>
<rect x="201.5" y="134.0" width="2.5" height="2.0" fill="#fff" fill-opacity="0.07"/>
<rect x="204.0" y="131.0" width="2.5" height="3.0" fill="#000" />
<rect x="204.0" y="134.0" width="2.5" height="65.0" fill="#000" fill-opacity="0.03"/>
<rect x="204.0" y="167.0" width="2.5" height="6.0" fill="#000" fill-opacity="0.09"/>
<rect x="204.0" y="136.0" width="2.5" height="2.0" fill="#fff" fill-opacity="0.06"/>
<rect x="204.0" y="149.0" width="2.5" height="2.0" fill="#000" fill-opacity="0.09"/>
<rect x="204.0" y="134.0" width="2.5" height="2.0" fill="#000" fill-opacity="0.05"/>
<rect x="206.5" y="131.0" width="2.5" height="3.0" fill="#000" />
<rect x="206.5" y="134.0" width="2.5" height="65.0" fill="#fff" fill-opacity="0.03"/>
<rect x="206.5" y="173.0" width="2.5" height="2.0" fill="#fff" fill-opacity="0.04"/>
<rect x="206.5" y="174.0" width="2.5" height="2.0" fill="#fff" fill-opacity="0.08"/>
<rect x="206.5" y="164.0" width="2.5" height="2.0" fill="#000" fill-opacity="0.07"/>
<rect x="206.5" y="163.0" width="2.5" height="2.0" fill="#fff" fill-opacity="0.07"/>
<rect x="209.0" y="131.0" width="2.5" height="3.0" fill="#000" />
<rect x="209.0" y="134.0" width="2.5" height="65.0" fill="#000" fill-opacity="0.01"/>
<rect x="209.0" y="136.0" width="2.5" height="2.0" fill="#000" fill-opacity="0.08"/>
<rect x="209.0" y="178.0" width="2.5" height="4.0" fill="#fff" fill-opacity="0.06"/>
<rect x="209.0" y="169.0" width="2.5" height="6.0" fill="#fff" fill-opacity="0.10"/>
<rect x="209.0" y="150.0" width="2.5" height="4.0" fill="#fff" fill-opacity="0.10"/>
<rect x="211.5" y="131.0" width="2.5" height="3.0" fill="#000" />
<rect x="211.5" y="134.0" width="2.5" height="65.0" fill="#000" fill-opacity="0.04"/>
<rect x="211.5" y="150.0" width="2.5" height="2.0" fill="#fff" fill-opacity="0.05"/>
<rect x="211.5" y="144.0" width="2.5" height="4.0" fill="#000" fill-opacity="0.06"/>
<rect x="211.5" y="172.0" width="2.5" height="2.0" fill="#000" fill-opacity="0.09"/>
<rect x="211.5" y="178.0" width="2.5" height="6.0" fill="#000" fill-opacity="0.07"/>
<rect x="214.0" y="131.0" width="2.5" height="2.0" fill="#000" />
<rect x="214.0" y="133.0" width="2.5" height="66.0" fill="#fff" fill-opacity="0.00"/>
<rect x="214.0" y="147.0" width="2.5" height="4.0" fill="#fff" fill-opacity="0.06"/>
<rect x="214.0" y="170.0" width="2.5" height="2.0" fill="#fff" fill-opacity="0.05"/>
<rect x="214.0" y="135.0" width="2.5" height="2.0" fill="#000" fill-opacity="0.08"/>
<rect x="214.0" y="143.0" width="2.5" height="4.0" fill="#fff" fill-opacity="0.08"/>
<rect x="216.5" y="131.0" width="2.5" height="2.0" fill="#000" />
<rect x="216.5" y="133.0" width="2.5" height="66.0" fill="#fff" fill-opacity="0.01"/>
<rect x="216.5" y="135.0" width="2.5" height="2.0" fill="#fff" fill-opacity="0.04"/>
<rect x="216.5" y="170.0" width="2.5" height="4.0" fill="#000" fill-opacity="0.10"/>
<rect x="216.5" y="167.0" width="2.5" height="2.0" fill="#fff" fill-opacity="0.09"/>
<rect x="216.5" y="178.0" width="2.5" height="6.0" fill="#000" fill-opacity="0.05"/>
<rect x="219.0" y="131.0" width="2.5" height="2.0" fill="#000" />
<rect x="219.0" y="133.0" width="2.5" height="66.0" fill="#fff" fill-opacity="0.00"/>
<rect x="219.0" y="173.0" width="2.5" height="2.0" fill="#fff" fill-opacity="0.08"/>
<rect x="219.0" y="151.0" width="2.5" height="6.0" fill="#000" fill-opacity="0.05"/>
<rect x="219.0" y="174.0" width="2.5" height="2.0" fill="#000" fill-opacity="0.06"/>
<rect x="219.0" y="149.0" width="2.5" height="2.0" fill="#000" fill-opacity="0.10"/>
<rect x="221.5" y="131.0" width="2.5" height="2.0" fill="#000" />
<rect x="221.5" y="133.0" width="2.5" height="66.0" fill="#fff" fill-opacity="0.04"/>
<rect x="221.5" y="171.0" width="2.5" height="6.0" fill="#fff" fill-opacity="0.08"/>
<rect x="221.5" y="134.0" width="2.5" height="6.0" fill="#000" fill-opacity="0.07"/>
<rect x="221.5" y="139.0" width="2.5" height="4.0" fill="#000" fill-opacity="0.04"/>
<rect x="221.5" y="169.0" width="2.5" height="2.0" fill="#fff" fill-opacity="0.09"/>
<rect x="224.0" y="131.0" width="2.5" height="3.0" fill="#000" />
<rect x="224.0" y="134.0" width="2.5" height="65.0" fill="#000" fill-opacity="0.01"/>
<rect x="224.0" y="167.0" width="2.5" height="2.0" fill="#000" fill-opacity="0.09"/>
<rect x="224.0" y="137.0" width="2.5" height="2.0" fill="#000" fill-opacity="0.05"/>
<rect x="224.0" y="178.0" width="2.5" height="2.0" fill="#fff" fill-opacity="0.08"/>
<rect x="224.0" y="166.0" width="2.5" height="4.0" fill="#fff" fill-opacity="0.05"/>
<rect x="226.5" y="131.0" width="2.5" height="4.0" fill="#000" />
<rect x="226.5" y="135.0" width="2.5" height="64.0" fill="#000" fill-opacity="0.05"/>
<rect x="226.5" y="145.0" width="2.5" height="2.0" fill="#fff" fill-opacity="0.09"/>
<rect x="226.5" y="166.0" width="2.5" height="2.0" fill="#fff" fill-opacity="0.06"/>
<rect x="226.5" y="160.0" width="2.5" height="6.0" fill="#fff" fill-opacity="0.08"/>
<rect x="226.5" y="162.0" width="2.5" height="2.0" fill="#000" fill-opacity="0.06"/>
<rect x="229.0" y="131.0" width="2.5" height="3.0" fill="#000" />
<rect x="229.0" y="134.0" width="2.5" height="65.0" fill="#000" fill-opacity="0.03"/>
<rect x="229.0" y="174.0" width="2.5" height="2.0" fill="#fff" fill-opacity="0.05"/>
<rect x="229.0" y="172.0" width="2.5" height="2.0" fill="#000" fill-opacity="0.06"/>
<rect x="229.0" y="143.0" width="2.5" height="6.0" fill="#fff" fill-opacity="0.08"/>
<rect x="229.0" y="144.0" width="2.5" height="6.0" fill="#000" fill-opacity="0.09"/>
<rect x="231.5" y="131.0" width="2.5" height="3.0" fill="#000" />
<rect x="231.5" y="134.0" width="2.5" height="65.0" fill="#000" fill-opacity="0.01"/>
<rect x="231.5" y="178.0" width="2.5" height="2.0" fill="#fff" fill-opacity="0.06"/>
<rect x="231.5" y="179.0" width="2.5" height="2.0" fill="#fff" fill-opacity="0.10"/>
<rect x="231.5" y="154.0" width="2.5" height="4.0" fill="#000" fill-opacity="0.06"/>
<rect x="231.5" y="146.0" width="2.5" height="4.0" fill="#fff" fill-opacity="0.08"/>
<rect x="234.0" y="131.0" width="2.5" height="2.0" fill="#000" />
<rect x="234.0" y="133.0" width="2.5" height="66.0" fill="#000" fill-opacity="0.05"/>
<rect x="234.0" y="157.0" width="2.5" height="2.0" fill="#fff" fill-opacity="0.09"/>
<rect x="234.0" y="179.0" width="2.5" height="4.0" fill="#000" fill-opacity="0.05"/>
<rect x="234.0" y="173.0" width="2.5" height="2.0" fill="#000" fill-opacity="0.09"/>
<rect x="234.0" y="162.0" width="2.5" height="2.0" fill="#000" fill-opacity="0.09"/>
<rect x="236.5" y="131.0" width="2.5" height="3.0" fill="#000" />
<rect x="236.5" y="134.0" width="2.5" height="65.0" fill="#fff" fill-opacity="0.01"/>
<rect x="236.5" y="152.0" width="2.5" height="6.0" fill="#000" fill-opacity="0.06"/>
<rect x="236.5" y="159.0" width="2.5" height="2.0" fill="#fff" fill-opacity="0.09"/>
<rect x="236.5" y="161.0" width="2.5" height="6.0" fill="#fff" fill-opacity="0.08"/>
<rect x="236.5" y="175.0" width="2.5" height="2.0" fill="#fff" fill-opacity="0.08"/>
<rect x="239.0" y="131.0" width="2.5" height="3.0" fill="#000" />
<rect x="239.0" y="134.0" width="2.5" height="65.0" fill="#fff" fill-opacity="0.02"/>
<rect x="239.0" y="140.0" width="2.5" height="6.0" fill="#000" fill-opacity="0.06"/>
<rect x="239.0" y="179.0" width="2.5" height="2.0" fill="#000" fill-opacity="0.07"/>
<rect x="239.0" y="163.0" width="2.5" height="2.0" fill="#fff" fill-opacity="0.06"/>
<rect x="239.0" y="177.0" width="2.5" height="2.0" fill="#fff" fill-opacity="0.06"/>
<rect x="241.5" y="131.0" width="2.5" height="2.0" fill="#000" />
<rect x="241.5" y="133.0" width="2.5" height="66.0" fill="#fff" fill-opacity="0.04"/>
<rect x="241.5" y="139.0" width="2.5" height="2.0" fill="#000" fill-opacity="0.05"/>
<rect x="241.5" y="178.0" width="2.5" height="2.0" fill="#fff" fill-opacity="0.05"/>
<rect x="241.5" y="169.0" width="2.5" height="6.0" fill="#fff" fill-opacity="0.08"/>
<rect x="241.5" y="165.0" width="2.5" height="2.0" fill="#fff" fill-opacity="0.09"/>
<rect x="244.0" y="131.0" width="2.5" height="4.0" fill="#000" />
<rect x="244.0" y="135.0" width="2.5" height="64.0" fill="#fff" fill-opacity="0.02"/>
<rect x="244.0" y="148.0" width="2.5" height="2.0" fill="#000" fill-opacity="0.09"/>
<rect x="244.0" y="142.0" width="2.5" height="4.0" fill="#fff" fill-opacity="0.06"/>
<rect x="244.0" y="159.0" width="2.5" height="6.0" fill="#000" fill-opacity="0.04"/>
<rect x="244.0" y="161.0" width="2.5" height="4.0" fill="#fff" fill-opacity="0.05"/>
<rect x="246.5" y="131.0" width="2.5" height="3.0" fill="#000" />
<rect x="246.5" y="134.0" width="2.5" height="65.0" fill="#fff" fill-opacity="0.02"/>
<rect x="246.5" y="148.0" width="2.5" height="6.0" fill="#000" fill-opacity="0.05"/>
<rect x="246.5" y="138.0" width="2.5" height="2.0" fill="#000" fill-opacity="0.07"/>
<rect x="246.5" y="148.0" width="2.5" height="2.0" fill="#000" fill-opacity="0.08"/>
<rect x="246.5" y="160.0" width="2.5" height="6.0" fill="#fff" fill-opacity="0.09"/>
<rect x="249.0" y="131.0" width="2.5" height="4.0" fill="#000" />
<rect x="249.0" y="135.0" width="2.5" height="64.0" fill="#000" fill-opacity="0.04"/>
<rect x="249.0" y="149.0" width="2.5" height="4.0" fill="#fff" fill-opacity="0.08"/>
<rect x="249.0" y="162.0" width="2.5" height="2.0" fill="#000" fill-opacity="0.09"/>
<rect x="249.0" y="152.0" width="2.5" height="4.0" fill="#000" fill-opacity="0.06"/>
<rect x="249.0" y="165.0" width="2.5" height="6.0" fill="#000" fill-opacity="0.08"/>
<rect x="251.5" y="131.0" width="2.5" height="5.0" fill="#000" />
<rect x="251.5" y="136.0" width="2.5" height="63.0" fill="#fff" fill-opacity="0.02"/>
<rect x="251.5" y="160.0" width="2.5" height="2.0" fill="#000" fill-opacity="0.07"/>
<rect x="251.5" y="156.0" width="2.5" height="2.0" fill="#fff" fill-opacity="0.06"/>
<rect x="251.5" y="173.0" width="2.5" height="2.0" fill="#fff" fill-opacity="0.05"/>
<rect x="251.5" y="140.0" width="2.5" height="4.0" fill="#000" fill-opacity="0.05"/>
<rect x="254.0" y="131.0" width="2.5" height="4.0" fill="#000" />
<rect x="254.0" y="135.0" width="2.5" height="64.0" fill="#fff" fill-opacity="0.01"/>
<rect x="254.0" y="157.0" width="2.5" height="2.0" fill="#000" fill-opacity="0.06"/>
<rect x="254.0" y="169.0" width="2.5" height="2.0" fill="#fff" fill-opacity="0.08"/>
<rect x="254.0" y="140.0" width="2.5" height="4.0" fill="#000" fill-opacity="0.08"/>
<rect x="254.0" y="168.0" width="2.5" height="2.0" fill="#fff" fill-opacity="0.07"/>
<rect x="256.5" y="131.0" width="2.5" height="6.0" fill="#000" />
<rect x="256.5" y="137.0" width="2.5" height="62.0" fill="#000" fill-opacity="0.03"/>
<rect x="256.5" y="151.0" width="2.5" height="2.0" fill="#000" fill-opacity="0.07"/>
<rect x="256.5" y="167.0" width="2.5" height="6.0" fill="#fff" fill-opacity="0.08"/>
<rect x="256.5" y="152.0" width="2.5" height="6.0" fill="#000" fill-opacity="0.08"/>
<rect x="256.5" y="137.0" width="2.5" height="2.0" fill="#fff" fill-opacity="0.07"/>
<rect x="259.0" y="131.0" width="2.5" height="5.0" fill="#000" />
<rect x="259.0" y="136.0" width="2.5" height="63.0" fill="#fff" fill-opacity="0.03"/>
<rect x="259.0" y="159.0" width="2.5" height="6.0" fill="#000" fill-opacity="0.10"/>
<rect x="259.0" y="140.0" width="2.5" height="2.0" fill="#fff" fill-opacity="0.08"/>
<rect x="259.0" y="137.0" width="2.5" height="2.0" fill="#fff" fill-opacity="0.08"/>
<rect x="259.0" y="157.0" width="2.5" height="2.0" fill="#fff" fill-opacity="0.07"/>
<rect x="261.5" y="131.0" width="2.5" height="6.0" fill="#000" />
<rect x="261.5" y="137.0" width="2.5" height="62.0" fill="#fff" fill-opacity="0.00"/>
<rect x="261.5" y="177.0" width="2.5" height="2.0" fill="#000" fill-opacity="0.09"/>
<rect x="261.5" y="160.0" width="2.5" height="4.0" fill="#000" fill-opacity="0.07"/>
<rect x="261.5" y="150.0" width="2.5" height="4.0" fill="#000" fill-opacity="0.07"/>
<rect x="261.5" y="172.0" width="2.5" height="2.0" fill="#fff" fill-opacity="0.06"/>
<rect x="264.0" y="131.0" width="2.5" height="6.0" fill="#000" />
<rect x="264.0" y="137.0" width="2.5" height="62.0" fill="#fff" fill-opacity="0.02"/>
<rect x="264.0" y="154.0" width="2.5" height="4.0" fill="#fff" fill-opacity="0.08"/>
<rect x="264.0" y="144.0" width="2.5" height="4.0" fill="#000" fill-opacity="0.08"/>
<rect x="264.0" y="145.0" width="2.5" height="2.0" fill="#fff" fill-opacity="0.04"/>
<rect x="264.0" y="172.0" width="2.5" height="6.0" fill="#fff" fill-opacity="0.04"/>
<rect x="266.5" y="131.0" width="2.5" height="5.0" fill="#000" />
<rect x="266.5" y="136.0" width="2.5" height="63.0" fill="#000" fill-opacity="0.00"/>
<rect x="266.5" y="166.0" width="2.5" height="2.0" fill="#fff" fill-opacity="0.09"/>
<rect x="266.5" y="175.0" width="2.5" height="6.0" fill="#fff" fill-opacity="0.08"/>
<rect x="266.5" y="180.0" width="2.5" height="2.0" fill="#000" fill-opacity="0.08"/>
<rect x="266.5" y="165.0" width="2.5" height="2.0" fill="#000" fill-opacity="0.05"/>
<rect x="269.0" y="131.0" width="2.5" height="5.0" fill="#000" />
<rect x="269.0" y="136.0" width="2.5" height="63.0" fill="#fff" fill-opacity="0.04"/>
<rect x="269.0" y="177.0" width="2.5" height="2.0" fill="#000" fill-opacity="0.09"/>
<rect x="269.0" y="155.0" width="2.5" height="4.0" fill="#fff" fill-opacity="0.05"/>
<rect x="269.0" y="138.0" width="2.5" height="4.0" fill="#000" fill-opacity="0.07"/>
<rect x="269.0" y="173.0" width="2.5" height="2.0" fill="#000" fill-opacity="0.07"/>
<rect x="271.5" y="131.0" width="2.5" height="6.0" fill="#000" />
<rect x="271.5" y="137.0" width="2.5" height="62.0" fill="#000" fill-opacity="0.04"/>
<rect x="271.5" y="162.0" width="2.5" height="6.0" fill="#000" fill-opacity="0.08"/>
<rect x="271.5" y="175.0" width="2.5" height="2.0" fill="#000" fill-opacity="0.06"/>
<rect x="271.5" y="143.0" width="2.5" height="2.0" fill="#fff" fill-opacity="0.05"/>
<rect x="271.5" y="146.0" width="2.5" height="2.0" fill="#000" fill-opacity="0.04"/>
<rect x="274.0" y="131.0" width="2.5" height="6.0" fill="#000" />
<rect x="274.0" y="137.0" width="2.5" height="62.0" fill="#fff" fill-opacity="0.05"/>
<rect x="274.0" y="150.0" width="2.5" height="2.0" fill="#000" fill-opacity="0.04"/>
<rect x="274.0" y="173.0" width="2.5" height="2.0" fill="#000" fill-opacity="0.08"/>
<rect x="274.0" y="140.0" width="2.5" height="4.0" fill="#fff" fill-opacity="0.08"/>
<rect x="274.0" y="146.0" width="2.5" height="2.0" fill="#000" fill-opacity="0.07"/>
<rect x="276.5" y="131.0" width="2.5" height="5.0" fill="#000" />
<rect x="276.5" y="136.0" width="2.5" height="63.0" fill="#fff" fill-opacity="0.03"/>
<rect x="276.5" y="139.0" width="2.5" height="2.0" fill="#000" fill-opacity="0.04"/>
<rect x="276.5" y="177.0" width="2.5" height="2.0" fill="#000" fill-opacity="0.06"/>
<rect x="276.5" y="174.0" width="2.5" height="2.0" fill="#fff" fill-opacity="0.09"/>
<rect x="276.5" y="174.0" width="2.5" height="2.0" fill="#000" fill-opacity="0.10"/>
<rect x="279.0" y="131.0" width="2.5" height="6.0" fill="#000" />
<rect x="279.0" y="137.0" width="2.5" height="62.0" fill="#000" fill-opacity="0.02"/>
<rect x="279.0" y="144.0" width="2.5" height="4.0" fill="#fff" fill-opacity="0.05"/>
<rect x="279.0" y="163.0" width="2.5" height="6.0" fill="#000" fill-opacity="0.09"/>
<rect x="279.0" y="154.0" width="2.5" height="4.0" fill="#000" fill-opacity="0.04"/>
<rect x="279.0" y="178.0" width="2.5" height="4.0" fill="#fff" fill-opacity="0.08"/>
<rect x="281.5" y="131.0" width="2.5" height="5.0" fill="#000" />
<rect x="281.5" y="136.0" width="2.5" height="63.0" fill="#fff" fill-opacity="0.01"/>
<rect x="281.5" y="173.0" width="2.5" height="6.0" fill="#fff" fill-opacity="0.05"/>
<rect x="281.5" y="160.0" width="2.5" height="6.0" fill="#fff" fill-opacity="0.09"/>
<rect x="281.5" y="164.0" width="2.5" height="4.0" fill="#fff" fill-opacity="0.06"/>
<rect x="281.5" y="153.0" width="2.5" height="6.0" fill="#000" fill-opacity="0.10"/>
<rect x="284.0" y="131.0" width="2.5" height="6.0" fill="#000" />
<rect x="284.0" y="137.0" width="2.5" height="62.0" fill="#000" fill-opacity="0.04"/>
<rect x="284.0" y="146.0" width="2.5" height="2.0" fill="#000" fill-opacity="0.09"/>
<rect x="284.0" y="172.0" width="2.5" height="6.0" fill="#000" fill-opacity="0.05"/>
<rect x="284.0" y="172.0" width="2.5" height="6.0" fill="#fff" fill-opacity="0.05"/>
<rect x="284.0" y="151.0" width="2.5" height="4.0" fill="#fff" fill-opacity="0.08"/>
<rect x="286.5" y="131.0" width="2.5" height="5.0" fill="#000" />
<rect x="286.5" y="136.0" width="2.5" height="63.0" fill="#000" fill-opacity="0.01"/>
<rect x="286.5" y="136.0" width="2.5" height="6.0" fill="#000" fill-opacity="0.05"/>
<rect x="286.5" y="158.0" width="2.5" height="2.0" fill="#000" fill-opacity="0.07"/>
<rect x="286.5" y="152.0" width="2.5" height="4.0" fill="#000" fill-opacity="0.08"/>
<rect x="286.5" y="148.0" width="2.5" height="2.0" fill="#000" fill-opacity="0.05"/>
<rect x="289.0" y="131.0" width="2.5" height="6.0" fill="#000" />
<rect x="289.0" y="137.0" width="2.5" height="62.0" fill="#fff" fill-opacity="0.02"/>
<rect x="289.0" y="162.0" width="2.5" height="2.0" fill="#000" fill-opacity="0.10"/>
<rect x="289.0" y="168.0" width="2.5" height="4.0" fill="#fff" fill-opacity="0.06"/>
<rect x="289.0" y="166.0" width="2.5" height="2.0" fill="#000" fill-opacity="0.08"/>
<rect x="289.0" y="159.0" width="2.5" height="4.0" fill="#fff" fill-opacity="0.04"/>
<rect x="291.5" y="131.0" width="2.5" height="5.0" fill="#000" />
<rect x="291.5" y="136.0" width="2.5" height="63.0" fill="#fff" fill-opacity="0.05"/>
<rect x="291.5" y="167.0" width="2.5" height="2.0" fill="#000" fill-opacity="0.09"/>
<rect x="291.5" y="163.0" width="2.5" height="2.0" fill="#fff" fill-opacity="0.09"/>
<rect x="291.5" y="174.0" width="2.5" height="2.0" fill="#000" fill-opacity="0.04"/>
<rect x="291.5" y="148.0" width="2.5" height="2.0" fill="#000" fill-opacity="0.04"/>
<rect x="294.0" y="131.0" width="2.5" height="5.0" fill="#000" />
<rect x="294.0" y="136.0" width="2.5" height="63.0" fill="#fff" fill-opacity="0.02"/>
<rect x="294.0" y="167.0" width="2.5" height="2.0" fill="#fff" fill-opacity="0.08"/>
<rect x="294.0" y="143.0" width="2.5" height="2.0" fill="#000" fill-opacity="0.07"/>
<rect x="294.0" y="177.0" width="2.5" height="2.0" fill="#fff" fill-opacity="0.08"/>
<rect x="294.0" y="161.0" width="2.5" height="2.0" fill="#000" fill-opacity="0.05"/>
<rect x="296.5" y="131.0" width="2.5" height="6.0" fill="#000" />
<rect x="296.5" y="137.0" width="2.5" height="62.0" fill="#000" fill-opacity="0.05"/>
<rect x="296.5" y="139.0" width="2.5" height="4.0" fill="#fff" fill-opacity="0.04"/>
<rect x="296.5" y="172.0" width="2.5" height="2.0" fill="#fff" fill-opacity="0.04"/>
<rect x="296.5" y="169.0" width="2.5" height="6.0" fill="#000" fill-opacity="0.05"/>
<rect x="296.5" y="137.0" width="2.5" height="2.0" fill="#fff" fill-opacity="0.06"/>
<rect x="299.0" y="131.0" width="2.5" height="6.0" fill="#000" />
<rect x="299.0" y="137.0" width="2.5" height="62.0" fill="#000" fill-opacity="0.04"/>
<rect x="299.0" y="157.0" width="2.5" height="4.0" fill="#000" fill-opacity="0.05"/>
<rect x="299.0" y="167.0" width="2.5" height="6.0" fill="#000" fill-opacity="0.05"/>
<rect x="299.0" y="146.0" width="2.5" height="2.0" fill="#000" fill-opacity="0.09"/>
<rect x="299.0" y="139.0" width="2.5" height="2.0" fill="#fff" fill-opacity="0.05"/>
<rect x="301.5" y="131.0" width="2.5" height="6.0" fill="#000" />
<rect x="301.5" y="137.0" width="2.5" height="62.0" fill="#fff" fill-opacity="0.04"/>
<rect x="301.5" y="145.0" width="2.5" height="6.0" fill="#fff" fill-opacity="0.10"/>
<rect x="301.5" y="161.0" width="2.5" height="2.0" fill="#fff" fill-opacity="0.07"/>
<rect x="301.5" y="158.0" width="2.5" height="4.0" fill="#fff" fill-opacity="0.07"/>
<rect x="301.5" y="177.0" width="2.5" height="4.0" fill="#000" fill-opacity="0.05"/>
<rect x="304.0" y="131.0" width="2.5" height="4.0" fill="#000" />
<rect x="304.0" y="135.0" width="2.5" height="64.0" fill="#fff" fill-opacity="0.04"/>
<rect x="304.0" y="144.0" width="2.5" height="6.0" fill="#fff" fill-opacity="0.06"/>
<rect x="304.0" y="161.0" width="2.5" height="2.0" fill="#000" fill-opacity="0.06"/>
<rect x="304.0" y="153.0" width="2.5" height="4.0" fill="#fff" fill-opacity="0.06"/>
<rect x="304.0" y="141.0" width="2.5" height="4.0" fill="#000" fill-opacity="0.07"/>
<rect x="306.5" y="131.0" width="2.5" height="4.0" fill="#000" />
<rect x="306.5" y="135.0" width="2.5" height="64.0" fill="#fff" fill-opacity="0.03"/>
<rect x="306.5" y="177.0" width="2.5" height="2.0" fill="#fff" fill-opacity="0.09"/>
<rect x="306.5" y="142.0" width="2.5" height="4.0" fill="#fff" fill-opacity="0.10"/>
<rect x="306.5" y="162.0" width="2.5" height="4.0" fill="#fff" fill-opacity="0.10"/>
<rect x="306.5" y="141.0" width="2.5" height="6.0" fill="#000" fill-opacity="0.09"/>
<rect x="309.0" y="131.0" width="2.5" height="4.0" fill="#000" />
<rect x="309.0" y="135.0" width="2.5" height="64.0" fill="#000" fill-opacity="0.04"/>
<rect x="309.0" y="175.0" width="2.5" height="2.0" fill="#000" fill-opacity="0.07"/>
<rect x="309.0" y="167.0" width="2.5" height="2.0" fill="#000" fill-opacity="0.09"/>
<rect x="309.0" y="168.0" width="2.5" height="4.0" fill="#000" fill-opacity="0.07"/>
<rect x="309.0" y="161.0" width="2.5" height="2.0" fill="#000" fill-opacity="0.05"/>
<rect x="311.5" y="131.0" width="2.5" height="5.0" fill="#000" />
<rect x="311.5" y="136.0" width="2.5" height="63.0" fill="#000" fill-opacity="0.03"/>
<rect x="311.5" y="147.0" width="2.5" height="2.0" fill="#fff" fill-opacity="0.09"/>
<rect x="311.5" y="174.0" width="2.5" height="6.0" fill="#fff" fill-opacity="0.05"/>
<rect x="311.5" y="144.0" width="2.5" height="2.0" fill="#fff" fill-opacity="0.05"/>
<rect x="311.5" y="140.0" width="2.5" height="6.0" fill="#fff" fill-opacity="0.09"/>
<rect x="314.0" y="131.0" width="2.5" height="4.0" fill="#000" />
<rect x="314.0" y="135.0" width="2.5" height="64.0" fill="#000" fill-opacity="0.02"/>
<rect x="314.0" y="175.0" width="2.5" height="6.0" fill="#000" fill-opacity="0.06"/>
<rect x="314.0" y="165.0" width="2.5" height="2.0" fill="#fff" fill-opacity="0.06"/>
<rect x="314.0" y="146.0" width="2.5" height="4.0" fill="#000" fill-opacity="0.08"/>
<rect x="314.0" y="171.0" width="2.5" height="2.0" fill="#000" fill-opacity="0.10"/>
<rect x="316.5" y="131.0" width="2.5" height="5.0" fill="#000" />
<rect x="316.5" y="136.0" width="2.5" height="63.0" fill="#000" fill-opacity="0.00"/>
<rect x="316.5" y="151.0" width="2.5" height="4.0" fill="#fff" fill-opacity="0.09"/>
<rect x="316.5" y="172.0" width="2.5" height="2.0" fill="#000" fill-opacity="0.05"/>
<rect x="316.5" y="167.0" width="2.5" height="6.0" fill="#fff" fill-opacity="0.07"/>
<rect x="316.5" y="170.0" width="2.5" height="2.0" fill="#000" fill-opacity="0.10"/>
<rect x="319.0" y="131.0" width="2.5" height="4.0" fill="#000" />
<rect x="319.0" y="135.0" width="2.5" height="64.0" fill="#000" fill-opacity="0.01"/>
<rect x="319.0" y="151.0" width="2.5" height="2.0" fill="#000" fill-opacity="0.10"/>
<rect x="319.0" y="147.0" width="2.5" height="4.0" fill="#000" fill-opacity="0.08"/>
<rect x="319.0" y="171.0" width="2.5" height="6.0" fill="#fff" fill-opacity="0.08"/>
<rect x="319.0" y="141.0" width="2.5" height="4.0" fill="#fff" fill-opacity="0.08"/>
<rect x="321.5" y="131.0" width="2.5" height="3.0" fill="#000" />
<rect x="321.5" y="134.0" width="2.5" height="65.0" fill="#000" fill-opacity="0.01"/>
<rect x="321.5" y="166.0" width="2.5" height="4.0" fill="#000" fill-opacity="0.05"/>
<rect x="321.5" y="142.0" width="2.5" height="2.0" fill="#fff" fill-opacity="0.05"/>
<rect x="321.5" y="170.0" width="2.5" height="6.0" fill="#fff" fill-opacity="0.05"/>
<rect x="321.5" y="135.0" width="2.5" height="6.0" fill="#fff" fill-opacity="0.08"/>
<rect x="324.0" y="131.0" width="2.5" height="4.0" fill="#000" />
<rect x="324.0" y="135.0" width="2.5" height="64.0" fill="#fff" fill-opacity="0.00"/>
<rect x="324.0" y="138.0" width="2.5" height="4.0" fill="#000" fill-opacity="0.05"/>
<rect x="324.0" y="156.0" width="2.5" height="6.0" fill="#fff" fill-opacity="0.07"/>
<rect x="324.0" y="155.0" width="2.5" height="6.0" fill="#fff" fill-opacity="0.04"/>
<rect x="324.0" y="168.0" width="2.5" height="2.0" fill="#fff" fill-opacity="0.10"/>
<rect x="326.5" y="131.0" width="2.5" height="4.0" fill="#000" />
<rect x="326.5" y="135.0" width="2.5" height="64.0" fill="#fff" fill-opacity="0.02"/>
<rect x="326.5" y="158.0" width="2.5" height="2.0" fill="#fff" fill-opacity="0.04"/>
<rect x="326.5" y="162.0" width="2.5" height="2.0" fill="#fff" fill-opacity="0.04"/>
<rect x="326.5" y="143.0" width="2.5" height="6.0" fill="#fff" fill-opacity="0.09"/>
<rect x="326.5" y="164.0" width="2.5" height="2.0" fill="#fff" fill-opacity="0.09"/>
<rect x="329.0" y="131.0" width="2.5" height="5.0" fill="#000" />
<rect x="329.0" y="136.0" width="2.5" height="63.0" fill="#fff" fill-opacity="0.00"/>
<rect x="329.0" y="153.0" width="2.5" height="4.0" fill="#fff" fill-opacity="0.09"/>
<rect x="329.0" y="138.0" width="2.5" height="2.0" fill="#000" fill-opacity="0.07"/>
<rect x="329.0" y="163.0" width="2.5" height="2.0" fill="#fff" fill-opacity="0.06"/>
<rect x="329.0" y="155.0" width="2.5" height="4.0" fill="#fff" fill-opacity="0.05"/>
<rect x="331.5" y="131.0" width="2.5" height="4.0" fill="#000" />
<rect x="331.5" y="135.0" width="2.5" height="64.0" fill="#fff" fill-opacity="0.05"/>
<rect x="331.5" y="152.0" width="2.5" height="2.0" fill="#000" fill-opacity="0.07"/>
<rect x="331.5" y="144.0" width="2.5" height="6.0" fill="#000" fill-opacity="0.05"/>
<rect x="331.5" y="153.0" width="2.5" height="6.0" fill="#fff" fill-opacity="0.06"/>
<rect x="331.5" y="140.0" width="2.5" height="4.0" fill="#fff" fill-opacity="0.08"/>
<rect x="334.0" y="131.0" width="2.5" height="4.0" fill="#000" />
<rect x="334.0" y="135.0" width="2.5" height="64.0" fill="#000" fill-opacity="0.03"/>
<rect x="334.0" y="158.0" width="2.5" height="6.0" fill="#fff" fill-opacity="0.06"/>
<rect x="334.0" y="165.0" width="2.5" height="6.0" fill="#fff" fill-opacity="0.04"/>
<rect x="334.0" y="156.0" width="2.5" height="2.0" fill="#000" fill-opacity="0.07"/>
<rect x="334.0" y="172.0" width="2.5" height="6.0" fill="#000" fill-opacity="0.06"/>
<rect x="336.5" y="131.0" width="2.5" height="5.0" fill="#000" />
<rect x="336.5" y="136.0" width="2.5" height="63.0" fill="#fff" fill-opacity="0.01"/>
<rect x="336.5" y="167.0" width="2.5" height="4.0" fill="#000" fill-opacity="0.10"/>
<rect x="336.5" y="154.0" width="2.5" height="2.0" fill="#fff" fill-opacity="0.05"/>
<rect x="336.5" y="140.0" width="2.5" height="4.0" fill="#000" fill-opacity="0.04"/>
<rect x="336.5" y="160.0" width="2.5" height="6.0" fill="#000" fill-opacity="0.09"/>
<rect x="339.0" y="131.0" width="2.5" height="4.0" fill="#000" />
<rect x="339.0" y="135.0" width="2.5" height="64.0" fill="#fff" fill-opacity="0.05"/>
<rect x="339.0" y="144.0" width="2.5" height="6.0" fill="#000" fill-opacity="0.06"/>
<rect x="339.0" y="178.0" width="2.5" height="2.0" fill="#fff" fill-opacity="0.09"/>
<rect x="339.0" y="168.0" width="2.5" height="2.0" fill="#fff" fill-opacity="0.08"/>
<rect x="339.0" y="165.0" width="2.5" height="4.0" fill="#fff" fill-opacity="0.08"/>
<rect x="341.5" y="131.0" width="2.5" height="5.0" fill="#000" />
<rect x="341.5" y="136.0" width="2.5" height="63.0" fill="#fff" fill-opacity="0.01"/>
<rect x="341.5" y="136.0" width="2.5" height="6.0" fill="#fff" fill-opacity="0.08"/>
<rect x="341.5" y="167.0" width="2.5" height="6.0" fill="#fff" fill-opacity="0.07"/>
<rect x="341.5" y="162.0" width="2.5" height="4.0" fill="#fff" fill-opacity="0.08"/>
<rect x="341.5" y="160.0" width="2.5" height="6.0" fill="#fff" fill-opacity="0.06"/>
<rect x="344.0" y="131.0" width="2.5" height="4.0" fill="#000" />
<rect x="344.0" y="135.0" width="2.5" height="64.0" fill="#fff" fill-opacity="0.02"/>
<rect x="344.0" y="173.0" width="2.5" height="6.0" fill="#fff" fill-opacity="0.04"/>
<rect x="344.0" y="166.0" width="2.5" height="6.0" fill="#000" fill-opacity="0.05"/>
<rect x="344.0" y="154.0" width="2.5" height="2.0" fill="#000" fill-opacity="0.06"/>
<rect x="344.0" y="149.0" width="2.5" height="2.0" fill="#fff" fill-opacity="0.06"/>
<rect x="346.5" y="131.0" width="2.5" height="5.0" fill="#000" />
<rect x="346.5" y="136.0" width="2.5" height="63.0" fill="#000" fill-opacity="0.03"/>
<rect x="346.5" y="156.0" width="2.5" height="2.0" fill="#fff" fill-opacity="0.09"/>
<rect x="346.5" y="136.0" width="2.5" height="2.0" fill="#000" fill-opacity="0.07"/>
<rect x="346.5" y="167.0" width="2.5" height="4.0" fill="#fff" fill-opacity="0.09"/>
<rect x="346.5" y="170.0" width="2.5" height="6.0" fill="#fff" fill-opacity="0.07"/>
<rect x="349.0" y="131.0" width="2.0" height="5.0" fill="#000" />
<rect x="349.0" y="136.0" width="2.0" height="63.0" fill="#000" fill-opacity="0.02"/>
<rect x="349.0" y="174.0" width="2.0" height="4.0" fill="#000" fill-opacity="0.04"/>
<rect x="349.0" y="140.0" width="2.0" height="2.0" fill="#000" fill-opacity="0.06"/>
<rect x="349.0" y="161.0" width="2.0" height="2.0" fill="#fff" fill-opacity="0.10"/>
<rect x="349.0" y="167.0" width="2.0" height="6.0" fill="#000" fill-opacity="0.08"/>
<defs><linearGradient id="gwl" x1="0" y1="1" x2="0.5" y2="0.2"><stop offset="0" stop-color="#fff" stop-opacity="0.22"/><stop offset="0.5" stop-color="#fff" stop-opacity="0.08"/><stop offset="1" stop-color="#fff" stop-opacity="0"/></linearGradient></defs>
<rect x="49.0" y="150.0" width="302.0" height="49.0" fill="url(#gwl)" />
<rect x="343.0" y="103.0" width="2.0" height="1.0" fill="#1c1c1c" />
<rect x="255.0" y="71.0" width="2.0" height="1.0" fill="#1c1c1c" />
<rect x="104.0" y="100.0" width="2.0" height="1.0" fill="#1c1c1c" />
<rect x="160.0" y="69.0" width="2.0" height="1.0" fill="#1c1c1c" />
<rect x="294.0" y="125.0" width="2.0" height="1.0" fill="#1c1c1c" />
<rect x="105.0" y="97.0" width="2.0" height="1.0" fill="#1c1c1c" />
<rect x="254.0" y="125.0" width="2.0" height="1.0" fill="#1c1c1c" />
<rect x="312.0" y="113.0" width="2.0" height="1.0" fill="#1c1c1c" />
<rect x="49.0" y="110.0" width="3.0" height="1.0" fill="#ff0000" />
<rect x="52.0" y="110.0" width="3.0" height="1.0" fill="#ff0000" />
<rect x="54.0" y="113.0" width="3.0" height="1.0" fill="#ff0000" />
<rect x="56.0" y="111.0" width="3.0" height="1.0" fill="#ff0000" />
<rect x="59.0" y="115.0" width="3.0" height="1.0" fill="#ff0000" />
<rect x="62.0" y="111.0" width="3.0" height="1.0" fill="#ff0000" />
<rect x="64.0" y="116.0" width="3.0" height="1.0" fill="#ff0000" />
<rect x="66.0" y="114.0" width="3.0" height="1.0" fill="#ff0000" />
<rect x="69.0" y="116.0" width="3.0" height="1.0" fill="#ff0000" />
<rect x="72.0" y="115.0" width="3.0" height="1.0" fill="#ff0000" />
<rect x="74.0" y="110.0" width="3.0" height="1.0" fill="#ff0000" />
<rect x="76.0" y="109.0" width="3.0" height="1.0" fill="#ff0000" />
<rect x="79.0" y="113.0" width="3.0" height="1.0" fill="#ff0000" />
<rect x="82.0" y="112.0" width="3.0" height="1.0" fill="#ff0000" />
<rect x="84.0" y="117.0" width="3.0" height="1.0" fill="#ff0000" />
<rect x="86.0" y="113.0" width="3.0" height="1.0" fill="#ff0000" />
<rect x="89.0" y="107.0" width="3.0" height="1.0" fill="#ff0000" />
<rect x="92.0" y="110.0" width="3.0" height="1.0" fill="#ff0000" />
<rect x="94.0" y="111.0" width="3.0" height="1.0" fill="#ff0000" />
<rect x="96.0" y="113.0" width="3.0" height="1.0" fill="#ff0000" />
<rect x="99.0" y="113.0" width="3.0" height="1.0" fill="#ff0000" />
<rect x="102.0" y="112.0" width="3.0" height="1.0" fill="#ff0000" />
<rect x="104.0" y="114.0" width="3.0" height="1.0" fill="#ff0000" />
<rect x="106.0" y="116.0" width="3.0" height="1.0" fill="#ff0000" />
<rect x="109.0" y="106.0" width="3.0" height="1.0" fill="#ff0000" />
<rect x="112.0" y="109.0" width="3.0" height="1.0" fill="#ff0000" />
<rect x="114.0" y="114.0" width="3.0" height="1.0" fill="#ff0000" />
<rect x="116.0" y="109.0" width="3.0" height="1.0" fill="#ff0000" />
<rect x="119.0" y="112.0" width="3.0" height="1.0" fill="#ff0000" />
<rect x="122.0" y="113.0" width="3.0" height="1.0" fill="#ff0000" />
<rect x="124.0" y="110.0" width="3.0" height="1.0" fill="#ff0000" />
<rect x="126.0" y="110.0" width="3.0" height="1.0" fill="#ff0000" />
<rect x="129.0" y="108.0" width="3.0" height="1.0" fill="#ff0000" />
<rect x="132.0" y="111.0" width="3.0" height="1.0" fill="#ff0000" />
<rect x="134.0" y="112.0" width="3.0" height="1.0" fill="#ff0000" />
<rect x="136.0" y="112.0" width="3.0" height="1.0" fill="#ff0000" />
<rect x="139.0" y="115.0" width="3.0" height="1.0" fill="#ff0000" />
<rect x="142.0" y="110.0" width="3.0" height="1.0" fill="#ff0000" />
<rect x="144.0" y="109.0" width="3.0" height="1.0" fill="#ff0000" />
<rect x="146.0" y="112.0" width="3.0" height="1.0" fill="#ff0000" />
<rect x="149.0" y="113.0" width="3.0" height="1.0" fill="#ff0000" />
<rect x="152.0" y="108.0" width="3.0" height="1.0" fill="#ff0000" />
<rect x="154.0" y="111.0" width="3.0" height="1.0" fill="#ff0000" />
<rect x="156.0" y="109.0" width="3.0" height="1.0" fill="#ff0000" />
<rect x="159.0" y="114.0" width="3.0" height="1.0" fill="#ff0000" />
<rect x="162.0" y="114.0" width="3.0" height="1.0" fill="#ff0000" />
<rect x="164.0" y="112.0" width="3.0" height="1.0" fill="#ff0000" />
<rect x="166.0" y="113.0" width="3.0" height="1.0" fill="#ff0000" />
<rect x="169.0" y="109.0" width="3.0" height="1.0" fill="#ff0000" />
<rect x="172.0" y="109.0" width="3.0" height="1.0" fill="#ff0000" />
<rect x="174.0" y="114.0" width="3.0" height="1.0" fill="#ff0000" />
<rect x="176.0" y="112.0" width="3.0" height="1.0" fill="#ff0000" />
<rect x="179.0" y="114.0" width="3.0" height="1.0" fill="#ff0000" />
<rect x="182.0" y="117.0" width="3.0" height="1.0" fill="#ff0000" />
<rect x="184.0" y="115.0" width="3.0" height="1.0" fill="#ff0000" />
<rect x="186.0" y="113.0" width="3.0" height="1.0" fill="#ff0000" />
<rect x="189.0" y="109.0" width="3.0" height="1.0" fill="#ff0000" />
<rect x="192.0" y="116.0" width="3.0" height="1.0" fill="#ff0000" />
<rect x="194.0" y="113.0" width="3.0" height="1.0" fill="#ff0000" />
<rect x="196.0" y="113.0" width="3.0" height="1.0" fill="#ff0000" />
<rect x="199.0" y="112.0" width="3.0" height="1.0" fill="#ff0000" />
<rect x="202.0" y="114.0" width="3.0" height="1.0" fill="#ff0000" />
<rect x="204.0" y="114.0" width="3.0" height="1.0" fill="#ff0000" />
<rect x="206.0" y="115.0" width="3.0" height="1.0" fill="#ff0000" />
<rect x="209.0" y="112.0" width="3.0" height="1.0" fill="#ff0000" />
<rect x="212.0" y="112.0" width="3.0" height="1.0" fill="#ff0000" />
<rect x="214.0" y="114.0" width="3.0" height="1.0" fill="#ff0000" />
<rect x="216.0" y="109.0" width="3.0" height="1.0" fill="#ff0000" />
<rect x="219.0" y="110.0" width="3.0" height="1.0" fill="#ff0000" />
<rect x="222.0" y="112.0" width="3.0" height="1.0" fill="#ff0000" />
<rect x="224.0" y="117.0" width="3.0" height="1.0" fill="#ff0000" />
<rect x="226.0" y="106.0" width="3.0" height="1.0" fill="#ff0000" />
<rect x="229.0" y="115.0" width="3.0" height="1.0" fill="#ff0000" />
<rect x="232.0" y="113.0" width="3.0" height="1.0" fill="#ff0000" />
<rect x="234.0" y="109.0" width="3.0" height="1.0" fill="#ff0000" />
<rect x="236.0" y="108.0" width="3.0" height="1.0" fill="#ff0000" />
<rect x="239.0" y="109.0" width="3.0" height="1.0" fill="#ff0000" />
<rect x="242.0" y="113.0" width="3.0" height="1.0" fill="#ff0000" />
<rect x="244.0" y="111.0" width="3.0" height="1.0" fill="#ff0000" />
<rect x="246.0" y="111.0" width="3.0" height="1.0" fill="#ff0000" />
<rect x="249.0" y="112.0" width="3.0" height="1.0" fill="#ff0000" />
<rect x="252.0" y="111.0" width="3.0" height="1.0" fill="#ff0000" />
<rect x="254.0" y="113.0" width="3.0" height="1.0" fill="#ff0000" />
<rect x="256.0" y="114.0" width="3.0" height="1.0" fill="#ff0000" />
<rect x="259.0" y="118.0" width="3.0" height="1.0" fill="#ff0000" />
<rect x="262.0" y="112.0" width="3.0" height="1.0" fill="#ff0000" />
<rect x="264.0" y="110.0" width="3.0" height="1.0" fill="#ff0000" />
<rect x="266.0" y="114.0" width="3.0" height="1.0" fill="#ff0000" />
<rect x="269.0" y="110.0" width="3.0" height="1.0" fill="#ff0000" />
<rect x="272.0" y="118.0" width="3.0" height="1.0" fill="#ff0000" />
<rect x="274.0" y="111.0" width="3.0" height="1.0" fill="#ff0000" />
<rect x="276.0" y="116.0" width="3.0" height="1.0" fill="#ff0000" />
<rect x="279.0" y="116.0" width="3.0" height="1.0" fill="#ff0000" />
<rect x="282.0" y="112.0" width="3.0" height="1.0" fill="#ff0000" />
<rect x="284.0" y="116.0" width="3.0" height="1.0" fill="#ff0000" />
<rect x="286.0" y="111.0" width="3.0" height="1.0" fill="#ff0000" />
<rect x="289.0" y="110.0" width="3.0" height="1.0" fill="#ff0000" />
<rect x="292.0" y="115.0" width="3.0" height="1.0" fill="#ff0000" />
<rect x="294.0" y="111.0" width="3.0" height="1.0" fill="#ff0000" />
<rect x="296.0" y="115.0" width="3.0" height="1.0" fill="#ff0000" />
<rect x="299.0" y="112.0" width="3.0" height="1.0" fill="#ff0000" />
<rect x="302.0" y="113.0" width="3.0" height="1.0" fill="#ff0000" />
<rect x="304.0" y="113.0" width="3.0" height="1.0" fill="#ff0000" />
<rect x="306.0" y="110.0" width="3.0" height="1.0" fill="#ff0000" />
<rect x="309.0" y="113.0" width="3.0" height="1.0" fill="#ff0000" />
<rect x="312.0" y="113.0" width="3.0" height="1.0" fill="#ff0000" />
<rect x="314.0" y="107.0" width="3.0" height="1.0" fill="#ff0000" />
<rect x="316.0" y="110.0" width="3.0" height="1.0" fill="#ff0000" />
<rect x="319.0" y="109.0" width="3.0" height="1.0" fill="#ff0000" />
<rect x="322.0" y="110.0" width="3.0" height="1.0" fill="#ff0000" />
<rect x="324.0" y="112.0" width="3.0" height="1.0" fill="#ff0000" />
<rect x="326.0" y="109.0" width="3.0" height="1.0" fill="#ff0000" />
<rect x="329.0" y="110.0" width="3.0" height="1.0" fill="#ff0000" />
<rect x="332.0" y="113.0" width="3.0" height="1.0" fill="#ff0000" />
<rect x="334.0" y="108.0" width="3.0" height="1.0" fill="#ff0000" />
<rect x="336.0" y="113.0" width="3.0" height="1.0" fill="#ff0000" />
<rect x="339.0" y="109.0" width="3.0" height="1.0" fill="#ff0000" />
<rect x="342.0" y="110.0" width="3.0" height="1.0" fill="#ff0000" />
<rect x="344.0" y="109.0" width="3.0" height="1.0" fill="#ff0000" />
<rect x="346.0" y="112.0" width="3.0" height="1.0" fill="#ff0000" />
<rect x="349.0" y="114.0" width="2.0" height="1.0" fill="#ff0000" />
<rect x="49.0" y="199.0" width="3.0" height="1.0" fill="#00ff00" />
<rect x="52.0" y="198.0" width="3.0" height="1.0" fill="#00ff00" />
<rect x="54.0" y="198.0" width="3.0" height="1.0" fill="#00ff00" />
<rect x="56.0" y="199.0" width="3.0" height="1.0" fill="#00ff00" />
<rect x="59.0" y="198.0" width="3.0" height="1.0" fill="#00ff00" />
<rect x="62.0" y="198.0" width="3.0" height="1.0" fill="#00ff00" />
<rect x="64.0" y="198.0" width="3.0" height="1.0" fill="#00ff00" />
<rect x="66.0" y="197.0" width="3.0" height="1.0" fill="#00ff00" />
<rect x="69.0" y="198.0" width="3.0" height="1.0" fill="#00ff00" />
<rect x="72.0" y="198.0" width="3.0" height="1.0" fill="#00ff00" />
<rect x="74.0" y="196.0" width="3.0" height="1.0" fill="#00ff00" />
<rect x="76.0" y="198.0" width="3.0" height="1.0" fill="#00ff00" />
<rect x="79.0" y="198.0" width="3.0" height="1.0" fill="#00ff00" />
<rect x="82.0" y="198.0" width="3.0" height="1.0" fill="#00ff00" />
<rect x="84.0" y="198.0" width="3.0" height="1.0" fill="#00ff00" />
<rect x="86.0" y="198.0" width="3.0" height="1.0" fill="#00ff00" />
<rect x="89.0" y="198.0" width="3.0" height="1.0" fill="#00ff00" />
<rect x="92.0" y="199.0" width="3.0" height="1.0" fill="#00ff00" />
<rect x="94.0" y="198.0" width="3.0" height="1.0" fill="#00ff00" />
<rect x="96.0" y="198.0" width="3.0" height="1.0" fill="#00ff00" />
<rect x="99.0" y="198.0" width="3.0" height="1.0" fill="#00ff00" />
<rect x="102.0" y="198.0" width="3.0" height="1.0" fill="#00ff00" />
<rect x="104.0" y="198.0" width="3.0" height="1.0" fill="#00ff00" />
<rect x="106.0" y="198.0" width="3.0" height="1.0" fill="#00ff00" />
<rect x="109.0" y="198.0" width="3.0" height="1.0" fill="#00ff00" />
<rect x="112.0" y="198.0" width="3.0" height="1.0" fill="#00ff00" />
<rect x="114.0" y="198.0" width="3.0" height="1.0" fill="#00ff00" />
<rect x="116.0" y="198.0" width="3.0" height="1.0" fill="#00ff00" />
<rect x="119.0" y="198.0" width="3.0" height="1.0" fill="#00ff00" />
<rect x="122.0" y="198.0" width="3.0" height="1.0" fill="#00ff00" />
<rect x="124.0" y="198.0" width="3.0" height="1.0" fill="#00ff00" />
<rect x="126.0" y="198.0" width="3.0" height="1.0" fill="#00ff00" />
<rect x="129.0" y="199.0" width="3.0" height="1.0" fill="#00ff00" />
<rect x="132.0" y="199.0" width="3.0" height="1.0" fill="#00ff00" />
<rect x="134.0" y="198.0" width="3.0" height="1.0" fill="#00ff00" />
<rect x="136.0" y="198.0" width="3.0" height="1.0" fill="#00ff00" />
<rect x="139.0" y="198.0" width="3.0" height="1.0" fill="#00ff00" />
<rect x="142.0" y="198.0" width="3.0" height="1.0" fill="#00ff00" />
<rect x="144.0" y="198.0" width="3.0" height="1.0" fill="#00ff00" />
<rect x="146.0" y="198.0" width="3.0" height="1.0" fill="#00ff00" />
<rect x="149.0" y="198.0" width="3.0" height="1.0" fill="#00ff00" />
<rect x="152.0" y="198.0" width="3.0" height="1.0" fill="#00ff00" />
<rect x="154.0" y="199.0" width="3.0" height="1.0" fill="#00ff00" />
<rect x="156.0" y="197.0" width="3.0" height="1.0" fill="#00ff00" />
<rect x="159.0" y="198.0" width="3.0" height="1.0" fill="#00ff00" />
<rect x="162.0" y="198.0" width="3.0" height="1.0" fill="#00ff00" />
<rect x="164.0" y="199.0" width="3.0" height="1.0" fill="#00ff00" />
<rect x="166.0" y="198.0" width="3.0" height="1.0" fill="#00ff00" />
<rect x="169.0" y="198.0" width="3.0" height="1.0" fill="#00ff00" />
<rect x="172.0" y="198.0" width="3.0" height="1.0" fill="#00ff00" />
<rect x="174.0" y="198.0" width="3.0" height="1.0" fill="#00ff00" />
<rect x="176.0" y="198.0" width="3.0" height="1.0" fill="#00ff00" />
<rect x="179.0" y="198.0" width="3.0" height="1.0" fill="#00ff00" />
<rect x="182.0" y="198.0" width="3.0" height="1.0" fill="#00ff00" />
<rect x="184.0" y="198.0" width="3.0" height="1.0" fill="#00ff00" />
<rect x="186.0" y="198.0" width="3.0" height="1.0" fill="#00ff00" />
<rect x="189.0" y="198.0" width="3.0" height="1.0" fill="#00ff00" />
<rect x="192.0" y="198.0" width="3.0" height="1.0" fill="#00ff00" />
<rect x="194.0" y="196.0" width="3.0" height="1.0" fill="#00ff00" />
<rect x="196.0" y="198.0" width="3.0" height="1.0" fill="#00ff00" />
<rect x="199.0" y="198.0" width="3.0" height="1.0" fill="#00ff00" />
<rect x="202.0" y="198.0" width="3.0" height="1.0" fill="#00ff00" />
<rect x="204.0" y="198.0" width="3.0" height="1.0" fill="#00ff00" />
<rect x="206.0" y="198.0" width="3.0" height="1.0" fill="#00ff00" />
<rect x="209.0" y="198.0" width="3.0" height="1.0" fill="#00ff00" />
<rect x="212.0" y="199.0" width="3.0" height="1.0" fill="#00ff00" />
<rect x="214.0" y="197.0" width="3.0" height="1.0" fill="#00ff00" />
<rect x="216.0" y="197.0" width="3.0" height="1.0" fill="#00ff00" />
<rect x="219.0" y="198.0" width="3.0" height="1.0" fill="#00ff00" />
<rect x="222.0" y="198.0" width="3.0" height="1.0" fill="#00ff00" />
<rect x="224.0" y="199.0" width="3.0" height="1.0" fill="#00ff00" />
<rect x="226.0" y="197.0" width="3.0" height="1.0" fill="#00ff00" />
<rect x="229.0" y="198.0" width="3.0" height="1.0" fill="#00ff00" />
<rect x="232.0" y="199.0" width="3.0" height="1.0" fill="#00ff00" />
<rect x="234.0" y="198.0" width="3.0" height="1.0" fill="#00ff00" />
<rect x="236.0" y="198.0" width="3.0" height="1.0" fill="#00ff00" />
<rect x="239.0" y="196.0" width="3.0" height="1.0" fill="#00ff00" />
<rect x="242.0" y="198.0" width="3.0" height="1.0" fill="#00ff00" />
<rect x="244.0" y="198.0" width="3.0" height="1.0" fill="#00ff00" />
<rect x="246.0" y="198.0" width="3.0" height="1.0" fill="#00ff00" />
<rect x="249.0" y="198.0" width="3.0" height="1.0" fill="#00ff00" />
<rect x="252.0" y="196.0" width="3.0" height="1.0" fill="#00ff00" />
<rect x="254.0" y="198.0" width="3.0" height="1.0" fill="#00ff00" />
<rect x="256.0" y="198.0" width="3.0" height="1.0" fill="#00ff00" />
<rect x="259.0" y="198.0" width="3.0" height="1.0" fill="#00ff00" />
<rect x="262.0" y="198.0" width="3.0" height="1.0" fill="#00ff00" />
<rect x="264.0" y="199.0" width="3.0" height="1.0" fill="#00ff00" />
<rect x="266.0" y="198.0" width="3.0" height="1.0" fill="#00ff00" />
<rect x="269.0" y="198.0" width="3.0" height="1.0" fill="#00ff00" />
<rect x="272.0" y="199.0" width="3.0" height="1.0" fill="#00ff00" />
<rect x="274.0" y="198.0" width="3.0" height="1.0" fill="#00ff00" />
<rect x="276.0" y="198.0" width="3.0" height="1.0" fill="#00ff00" />
<rect x="279.0" y="199.0" width="3.0" height="1.0" fill="#00ff00" />
<rect x="282.0" y="198.0" width="3.0" height="1.0" fill="#00ff00" />
<rect x="284.0" y="198.0" width="3.0" height="1.0" fill="#00ff00" />
<rect x="286.0" y="198.0" width="3.0" height="1.0" fill="#00ff00" />
<rect x="289.0" y="198.0" width="3.0" height="1.0" fill="#00ff00" />
<rect x="292.0" y="198.0" width="3.0" height="1.0" fill="#00ff00" />
<rect x="294.0" y="198.0" width="3.0" height="1.0" fill="#00ff00" />
<rect x="296.0" y="198.0" width="3.0" height="1.0" fill="#00ff00" />
<rect x="299.0" y="198.0" width="3.0" height="1.0" fill="#00ff00" />
<rect x="302.0" y="198.0" width="3.0" height="1.0" fill="#00ff00" />
<rect x="304.0" y="198.0" width="3.0" height="1.0" fill="#00ff00" />
<rect x="306.0" y="198.0" width="3.0" height="1.0" fill="#00ff00" />
<rect x="309.0" y="198.0" width="3.0" height="1.0" fill="#00ff00" />
<rect x="312.0" y="198.0" width="3.0" height="1.0" fill="#00ff00" />
<rect x="314.0" y="198.0" width="3.0" height="1.0" fill="#00ff00" />
<rect x="316.0" y="199.0" width="3.0" height="1.0" fill="#00ff00" />
<rect x="319.0" y="198.0" width="3.0" height="1.0" fill="#00ff00" />
<rect x="322.0" y="198.0" width="3.0" height="1.0" fill="#00ff00" />
<rect x="324.0" y="198.0" width="3.0" height="1.0" fill="#00ff00" />
<rect x="326.0" y="198.0" width="3.0" height="1.0" fill="#00ff00" />
<rect x="329.0" y="198.0" width="3.0" height="1.0" fill="#00ff00" />
<rect x="332.0" y="198.0" width="3.0" height="1.0" fill="#00ff00" />
<rect x="334.0" y="198.0" width="3.0" height="1.0" fill="#00ff00" />
<rect x="336.0" y="198.0" width="3.0" height="1.0" fill="#00ff00" />
<rect x="339.0" y="199.0" width="3.0" height="1.0" fill="#00ff00" />
<rect x="342.0" y="198.0" width="3.0" height="1.0" fill="#00ff00" />
<rect x="344.0" y="198.0" width="3.0" height="1.0" fill="#00ff00" />
<rect x="346.0" y="199.0" width="3.0" height="1.0" fill="#00ff00" />
<rect x="349.0" y="198.0" width="2.0" height="1.0" fill="#00ff00" />
<rect x="49.0" y="199.0" width="302.0" height="6.5" fill="#000" />
<rect x="56.0" y="199.0" width="3.0" height="1.0" fill="#00ff00" />
<rect x="82.0" y="199.0" width="3.0" height="1.0" fill="#00ff00" />
<rect x="84.0" y="199.0" width="3.0" height="1.0" fill="#00ff00" />
<rect x="92.0" y="199.0" width="3.0" height="1.0" fill="#00ff00" />
<rect x="114.0" y="199.0" width="3.0" height="1.0" fill="#00ff00" />
<rect x="136.0" y="199.0" width="3.0" height="1.0" fill="#00ff00" />
<rect x="189.0" y="199.0" width="3.0" height="1.0" fill="#00ff00" />
<rect x="219.0" y="199.0" width="3.0" height="1.0" fill="#00ff00" />
<rect x="232.0" y="199.0" width="3.0" height="1.0" fill="#00ff00" />
<rect x="234.0" y="199.0" width="3.0" height="1.0" fill="#00ff00" />
<rect x="244.0" y="199.0" width="3.0" height="1.0" fill="#00ff00" />
<rect x="294.0" y="199.0" width="3.0" height="1.0" fill="#00ff00" />
<rect x="319.0" y="199.0" width="3.0" height="1.0" fill="#00ff00" />
<rect x="346.0" y="199.0" width="3.0" height="1.0" fill="#00ff00" />
<rect x="44.0" y="197.5" width="5.0" height="1.0" fill="#000" />
<rect x="44.0" y="187.5" width="5.0" height="1.0" fill="#000" />
<rect x="44.0" y="175.5" width="5.0" height="1.0" fill="#000" />
<rect x="44.0" y="163.5" width="5.0" height="1.0" fill="#000" />
<rect x="44.0" y="151.5" width="5.0" height="1.0" fill="#000" />
<rect x="44.0" y="139.5" width="5.0" height="1.0" fill="#000" />
<rect x="44.0" y="127.5" width="5.0" height="1.0" fill="#000" />
<rect x="44.0" y="115.5" width="5.0" height="1.0" fill="#000" />
<rect x="44.0" y="103.5" width="5.0" height="1.0" fill="#000" />
<rect x="44.0" y="91.5" width="5.0" height="1.0" fill="#000" />
<rect x="44.0" y="79.5" width="5.0" height="1.0" fill="#000" />
<rect x="44.0" y="67.5" width="5.0" height="1.0" fill="#000" />
<rect x="44.0" y="55.5" width="5.0" height="1.0" fill="#000" />
<rect x="44.0" y="45.5" width="5.0" height="1.0" fill="#000" />
<rect x="49.0" y="206.0" width="1.3" height="11.0" fill="#000" />
<rect x="74.0" y="206.0" width="1.3" height="6.0" fill="#000" />
<rect x="99.0" y="206.0" width="1.3" height="11.0" fill="#000" />
<rect x="125.0" y="206.0" width="1.3" height="6.0" fill="#000" />
<rect x="150.0" y="206.0" width="1.3" height="11.0" fill="#000" />
<rect x="175.0" y="206.0" width="1.3" height="6.0" fill="#000" />
<rect x="200.0" y="206.0" width="1.3" height="11.0" fill="#000" />
<rect x="225.0" y="206.0" width="1.3" height="6.0" fill="#000" />
<rect x="250.0" y="206.0" width="1.3" height="11.0" fill="#000" />
<rect x="276.0" y="206.0" width="1.3" height="6.0" fill="#000" />
<rect x="301.0" y="206.0" width="1.3" height="11.0" fill="#000" />
<rect x="326.0" y="206.0" width="1.3" height="6.0" fill="#000" />
<rect x="351.0" y="206.0" width="1.3" height="11.0" fill="#000" />
<rect x="354.0" y="44.0" width="6.0" height="166.0" fill="url(#gcbw)" />
<rect x="361.0" y="197.5" width="7.0" height="1.0" fill="#000" />
<rect x="361.0" y="187.5" width="7.0" height="1.0" fill="#000" />
<rect x="361.0" y="175.5" width="7.0" height="1.0" fill="#000" />
<rect x="361.0" y="163.5" width="7.0" height="1.0" fill="#000" />
<rect x="361.0" y="151.5" width="7.0" height="1.0" fill="#000" />
<rect x="361.0" y="139.5" width="7.0" height="1.0" fill="#000" />
<rect x="361.0" y="127.5" width="7.0" height="1.0" fill="#000" />
<rect x="361.0" y="115.5" width="7.0" height="1.0" fill="#000" />
<rect x="361.0" y="103.5" width="7.0" height="1.0" fill="#000" />
<rect x="361.0" y="91.5" width="7.0" height="1.0" fill="#000" />
<rect x="361.0" y="79.5" width="7.0" height="1.0" fill="#000" />
<rect x="361.0" y="67.5" width="7.0" height="1.0" fill="#000" />
<rect x="361.0" y="55.5" width="7.0" height="1.0" fill="#000" />
<rect x="361.0" y="45.5" width="7.0" height="1.0" fill="#000" />
<rect x="49.0" y="251.0" width="302.0" height="64.0" fill="#000" />
<rect x="49.0" y="254.0" width="302.0" height="8.0" fill="#00ff00" />
<rect x="49.0" y="268.0" width="302.0" height="8.0" fill="#ff0000" />
<rect x="49.0" y="282.0" width="302.0" height="8.0" fill="#00ff00" />
<rect x="49.0" y="296.0" width="203.0" height="8.0" fill="#00ff00" />
<rect x="252.0" y="296.0" width="99.0" height="8.0" fill="#ff0000" />
<rect x="49.0" y="315.0" width="1.3" height="11.0" fill="#000" />
<rect x="74.0" y="315.0" width="1.3" height="6.0" fill="#000" />
<rect x="99.0" y="315.0" width="1.3" height="11.0" fill="#000" />
<rect x="125.0" y="315.0" width="1.3" height="6.0" fill="#000" />
<rect x="150.0" y="315.0" width="1.3" height="11.0" fill="#000" />
<rect x="175.0" y="315.0" width="1.3" height="6.0" fill="#000" />
<rect x="200.0" y="315.0" width="1.3" height="11.0" fill="#000" />
<rect x="225.0" y="315.0" width="1.3" height="6.0" fill="#000" />
<rect x="250.0" y="315.0" width="1.3" height="11.0" fill="#000" />
<rect x="276.0" y="315.0" width="1.3" height="6.0" fill="#000" />
<rect x="301.0" y="315.0" width="1.3" height="11.0" fill="#000" />
<rect x="326.0" y="315.0" width="1.3" height="6.0" fill="#000" />
<rect x="351.0" y="315.0" width="1.3" height="11.0" fill="#000" />
<circle cx="365.4" cy="258.5" r="4" fill="#00ff00" stroke="#000" stroke-width="1" shape-rendering="geometricPrecision"/>
<circle cx="365.4" cy="272.5" r="4" fill="#ff0000" stroke="#000" stroke-width="1" shape-rendering="geometricPrecision"/>
<circle cx="365.4" cy="286.5" r="4" fill="#00ff00" stroke="#000" stroke-width="1" shape-rendering="geometricPrecision"/>
<circle cx="365.4" cy="300.5" r="4" fill="#ff0000" stroke="#000" stroke-width="1" shape-rendering="geometricPrecision"/>
<rect x="49.0" y="340.0" width="302.0" height="162.0" fill="#000" />
<rect x="49.0" y="433.0" width="302.0" height="60.0" fill="#0000ff" />
<rect x="81.0" y="434.0" width="3.0" height="3.0" fill="#00ff00" />
<rect x="118.0" y="433.0" width="3.0" height="10.0" fill="#00ff00" />
<rect x="189.0" y="433.0" width="3.0" height="5.0" fill="#00ff00" />
<rect x="192.0" y="432.0" width="8.0" height="3.0" fill="#00ff00" />
<rect x="200.0" y="430.0" width="4.0" height="4.0" fill="#00ff00" />
<rect x="204.0" y="429.0" width="8.0" height="8.0" fill="#00ff00" />
<rect x="215.0" y="432.0" width="3.0" height="8.0" fill="#00ff00" />
<rect x="218.0" y="429.0" width="7.0" height="5.0" fill="#00ff00" />
<rect x="225.0" y="428.0" width="5.0" height="8.0" fill="#00ff00" />
<rect x="226.0" y="428.0" width="3.0" height="13.0" fill="#00ff00" />
<rect x="230.0" y="428.0" width="7.0" height="5.0" fill="#00ff00" />
<rect x="240.0" y="431.0" width="9.0" height="6.0" fill="#00ff00" />
<rect x="240.0" y="431.0" width="3.0" height="11.0" fill="#00ff00" />
<rect x="249.0" y="431.0" width="6.0" height="2.0" fill="#00ff00" />
<rect x="274.0" y="431.0" width="5.0" height="2.0" fill="#00ff00" />
<rect x="283.0" y="432.0" width="2.0" height="6.0" fill="#00ff00" />
<rect x="290.0" y="432.0" width="3.0" height="6.0" fill="#00ff00" />
<rect x="285.0" y="432.0" width="5.0" height="2.0" fill="#00ff00" />
<rect x="300.0" y="432.0" width="2.5" height="5.0" fill="#00ff00" />
<rect x="302.5" y="432.0" width="2.5" height="9.0" fill="#00ff00" />
<rect x="305.0" y="431.0" width="2.5" height="6.0" fill="#00ff00" />
<rect x="307.5" y="432.0" width="2.5" height="5.0" fill="#00ff00" />
<rect x="310.0" y="432.0" width="2.5" height="8.0" fill="#00ff00" />
<rect x="312.5" y="431.0" width="2.5" height="10.0" fill="#00ff00" />
<rect x="315.0" y="432.0" width="2.5" height="8.0" fill="#00ff00" />
<rect x="317.5" y="432.0" width="2.5" height="7.0" fill="#00ff00" />
<rect x="320.0" y="431.0" width="2.5" height="9.0" fill="#00ff00" />
<rect x="322.5" y="431.0" width="2.5" height="8.0" fill="#00ff00" />
<rect x="325.0" y="431.0" width="2.5" height="7.0" fill="#00ff00" />
<rect x="327.5" y="432.0" width="2.5" height="7.0" fill="#00ff00" />
<rect x="330.0" y="431.0" width="2.5" height="5.0" fill="#00ff00" />
<rect x="332.5" y="431.0" width="2.5" height="7.0" fill="#00ff00" />
<rect x="335.0" y="431.0" width="2.5" height="10.0" fill="#00ff00" />
<rect x="337.5" y="432.0" width="2.5" height="5.0" fill="#00ff00" />
<rect x="340.0" y="431.0" width="2.5" height="10.0" fill="#00ff00" />
<rect x="342.5" y="431.0" width="2.5" height="10.0" fill="#00ff00" />
<rect x="345.0" y="432.0" width="2.5" height="5.0" fill="#00ff00" />
<rect x="347.5" y="431.0" width="2.5" height="6.0" fill="#00ff00" />
<rect x="350.0" y="432.0" width="1.0" height="7.0" fill="#00ff00" />
<rect x="201.5" y="436.0" width="2.5" height="2.0" fill="#0000ff" />
<rect x="221.5" y="438.0" width="2.5" height="2.0" fill="#0000ff" />
<rect x="226.5" y="436.0" width="2.5" height="2.0" fill="#0000ff" />
<rect x="231.5" y="436.0" width="2.5" height="2.0" fill="#0000ff" />
<rect x="234.0" y="436.0" width="2.5" height="2.0" fill="#0000ff" />
<rect x="239.0" y="436.0" width="2.5" height="2.0" fill="#0000ff" />
<rect x="259.0" y="438.0" width="2.5" height="2.0" fill="#0000ff" />
<rect x="266.5" y="438.0" width="2.5" height="2.0" fill="#0000ff" />
<rect x="269.0" y="438.0" width="2.5" height="2.0" fill="#0000ff" />
<rect x="294.0" y="436.0" width="2.5" height="2.0" fill="#0000ff" />
<rect x="59.0" y="487.0" width="2.5" height="2.0" fill="#00ff00" />
<rect x="64.0" y="489.0" width="2.5" height="2.0" fill="#00ff00" />
<rect x="79.0" y="489.0" width="2.5" height="2.0" fill="#00ff00" />
<rect x="89.0" y="488.0" width="2.5" height="5.0" fill="#00ff00" />
<rect x="89.0" y="490.0" width="2.5" height="2.0" fill="#ffff00" />
<rect x="91.5" y="487.0" width="2.5" height="6.0" fill="#00ff00" />
<rect x="91.5" y="490.0" width="2.5" height="2.0" fill="#ffff00" />
<rect x="94.0" y="487.0" width="2.5" height="6.0" fill="#00ff00" />
<rect x="96.5" y="487.0" width="2.5" height="6.0" fill="#00ff00" />
<rect x="96.5" y="491.0" width="2.5" height="2.0" fill="#ffff00" />
<rect x="99.0" y="489.0" width="2.5" height="4.0" fill="#00ff00" />
<rect x="101.5" y="488.0" width="2.5" height="5.0" fill="#00ff00" />
<rect x="104.0" y="487.0" width="2.5" height="6.0" fill="#00ff00" />
<rect x="106.5" y="488.0" width="2.5" height="5.0" fill="#00ff00" />
<rect x="106.5" y="491.0" width="2.5" height="2.0" fill="#ffff00" />
<rect x="109.0" y="489.0" width="2.5" height="4.0" fill="#00ff00" />
<rect x="109.0" y="490.0" width="2.5" height="2.0" fill="#ffff00" />
<rect x="111.5" y="489.0" width="2.5" height="4.0" fill="#00ff00" />
<rect x="111.5" y="489.0" width="2.5" height="2.0" fill="#ffff00" />
<rect x="114.0" y="489.0" width="2.5" height="4.0" fill="#00ff00" />
<rect x="116.5" y="487.0" width="2.5" height="6.0" fill="#00ff00" />
<rect x="116.5" y="490.0" width="2.5" height="2.0" fill="#ffff00" />
<rect x="119.0" y="489.0" width="2.5" height="4.0" fill="#00ff00" />
<rect x="119.0" y="491.0" width="2.5" height="2.0" fill="#ffff00" />
<rect x="121.5" y="488.0" width="2.5" height="5.0" fill="#00ff00" />
<rect x="121.5" y="490.0" width="2.5" height="2.0" fill="#ffff00" />
<rect x="124.0" y="488.0" width="2.5" height="5.0" fill="#00ff00" />
<rect x="124.0" y="491.0" width="2.5" height="2.0" fill="#ffff00" />
<rect x="126.5" y="488.0" width="2.5" height="5.0" fill="#00ff00" />
<rect x="126.5" y="489.0" width="2.5" height="2.0" fill="#ffff00" />
<rect x="129.0" y="487.0" width="2.5" height="6.0" fill="#00ff00" />
<rect x="129.0" y="491.0" width="2.5" height="2.0" fill="#ffff00" />
<rect x="131.5" y="487.0" width="2.5" height="6.0" fill="#00ff00" />
<rect x="134.0" y="489.0" width="2.5" height="4.0" fill="#00ff00" />
<rect x="136.5" y="488.0" width="2.5" height="5.0" fill="#00ff00" />
<rect x="136.5" y="489.0" width="2.5" height="2.0" fill="#ffff00" />
<rect x="139.0" y="489.0" width="2.5" height="4.0" fill="#00ff00" />
<rect x="141.5" y="488.0" width="2.5" height="5.0" fill="#00ff00" />
<rect x="144.0" y="489.0" width="2.5" height="4.0" fill="#00ff00" />
<rect x="146.5" y="487.0" width="2.5" height="6.0" fill="#00ff00" />
<rect x="149.0" y="485.0" width="2.5" height="8.0" fill="#00ff00" />
<rect x="151.5" y="485.0" width="2.5" height="8.0" fill="#00ff00" />
<rect x="154.0" y="485.0" width="2.5" height="8.0" fill="#00ff00" />
<rect x="156.5" y="485.0" width="2.5" height="8.0" fill="#00ff00" />
<rect x="156.5" y="488.0" width="2.5" height="5.0" fill="#ffff00" />
<rect x="159.0" y="486.0" width="2.5" height="7.0" fill="#00ff00" />
<rect x="161.5" y="485.0" width="2.5" height="8.0" fill="#00ff00" />
<rect x="164.0" y="486.0" width="2.5" height="7.0" fill="#00ff00" />
<rect x="164.0" y="489.0" width="2.5" height="4.0" fill="#ffff00" />
<rect x="166.5" y="486.0" width="2.5" height="7.0" fill="#00ff00" />
<rect x="166.5" y="490.0" width="2.5" height="3.0" fill="#ffff00" />
<rect x="169.0" y="486.0" width="2.5" height="7.0" fill="#00ff00" />
<rect x="169.0" y="490.0" width="2.5" height="3.0" fill="#ffff00" />
<rect x="171.5" y="485.0" width="2.5" height="8.0" fill="#00ff00" />
<rect x="174.0" y="485.0" width="2.5" height="8.0" fill="#00ff00" />
<rect x="174.0" y="488.0" width="2.5" height="5.0" fill="#ffff00" />
<rect x="176.5" y="486.0" width="2.5" height="7.0" fill="#00ff00" />
<rect x="176.5" y="489.0" width="2.5" height="4.0" fill="#ffff00" />
<rect x="179.0" y="486.0" width="2.5" height="7.0" fill="#00ff00" />
<rect x="179.0" y="488.0" width="2.5" height="5.0" fill="#ffff00" />
<rect x="181.5" y="485.0" width="2.5" height="8.0" fill="#00ff00" />
<rect x="184.0" y="486.0" width="2.5" height="7.0" fill="#00ff00" />
<rect x="184.0" y="490.0" width="2.5" height="3.0" fill="#ffff00" />
<rect x="186.5" y="486.0" width="2.5" height="7.0" fill="#00ff00" />
<rect x="189.0" y="485.0" width="2.5" height="8.0" fill="#00ff00" />
<rect x="189.0" y="490.0" width="2.5" height="3.0" fill="#ffff00" />
<rect x="191.5" y="485.5" width="2.5" height="7.5" fill="#00ff00" />
<rect x="191.5" y="488.5" width="2.5" height="4.5" fill="#ffff00" />
<rect x="194.0" y="486.5" width="2.5" height="6.5" fill="#00ff00" />
<rect x="194.0" y="489.5" width="2.5" height="3.5" fill="#ffff00" />
<rect x="196.5" y="484.5" width="2.5" height="8.5" fill="#00ff00" />
<rect x="196.5" y="488.5" width="2.5" height="4.5" fill="#ffff00" />
<rect x="199.0" y="485.5" width="2.5" height="7.5" fill="#00ff00" />
<rect x="199.0" y="488.5" width="2.5" height="4.5" fill="#ffff00" />
<rect x="201.5" y="484.5" width="2.5" height="8.5" fill="#00ff00" />
<rect x="201.5" y="488.5" width="2.5" height="4.5" fill="#ffff00" />
<rect x="204.0" y="485.5" width="2.5" height="7.5" fill="#00ff00" />
<rect x="204.0" y="489.5" width="2.5" height="3.5" fill="#ffff00" />
<rect x="204.0" y="491.5" width="2.5" height="1.5" fill="#ffb0b0" />
<rect x="206.5" y="484.5" width="2.5" height="8.5" fill="#00ff00" />
<rect x="206.5" y="488.5" width="2.5" height="4.5" fill="#ffff00" />
<rect x="209.0" y="485.5" width="2.5" height="7.5" fill="#00ff00" />
<rect x="209.0" y="489.5" width="2.5" height="3.5" fill="#ffff00" />
<rect x="211.5" y="485.5" width="2.5" height="7.5" fill="#00ff00" />
<rect x="211.5" y="488.5" width="2.5" height="4.5" fill="#ffff00" />
<rect x="214.0" y="485.5" width="2.5" height="7.5" fill="#00ff00" />
<rect x="214.0" y="489.5" width="2.5" height="3.5" fill="#ffff00" />
<rect x="214.0" y="491.5" width="2.5" height="1.5" fill="#ffb0b0" />
<rect x="216.5" y="484.5" width="2.5" height="8.5" fill="#00ff00" />
<rect x="216.5" y="489.5" width="2.5" height="3.5" fill="#ffff00" />
<rect x="219.0" y="485.5" width="2.5" height="7.5" fill="#00ff00" />
<rect x="219.0" y="488.5" width="2.5" height="4.5" fill="#ffff00" />
<rect x="221.5" y="484.5" width="2.5" height="8.5" fill="#00ff00" />
<rect x="221.5" y="489.5" width="2.5" height="3.5" fill="#ffff00" />
<rect x="224.0" y="484.5" width="2.5" height="8.5" fill="#00ff00" />
<rect x="224.0" y="488.5" width="2.5" height="4.5" fill="#ffff00" />
<rect x="226.5" y="484.5" width="2.5" height="8.5" fill="#00ff00" />
<rect x="226.5" y="489.5" width="2.5" height="3.5" fill="#ffff00" />
<rect x="229.0" y="485.5" width="2.5" height="7.5" fill="#00ff00" />
<rect x="229.0" y="488.5" width="2.5" height="4.5" fill="#ffff00" />
<rect x="229.0" y="491.5" width="2.5" height="1.5" fill="#ffb0b0" />
<rect x="231.5" y="486.5" width="2.5" height="6.5" fill="#00ff00" />
<rect x="231.5" y="488.5" width="2.5" height="4.5" fill="#ffff00" />
<rect x="231.5" y="491.5" width="2.5" height="1.5" fill="#ffb0b0" />
<rect x="234.0" y="485.5" width="2.5" height="7.5" fill="#00ff00" />
<rect x="234.0" y="488.5" width="2.5" height="4.5" fill="#ffff00" />
<rect x="236.5" y="486.5" width="2.5" height="6.5" fill="#00ff00" />
<rect x="236.5" y="488.5" width="2.5" height="4.5" fill="#ffff00" />
<rect x="239.0" y="484.5" width="2.5" height="8.5" fill="#00ff00" />
<rect x="239.0" y="488.5" width="2.5" height="4.5" fill="#ffff00" />
<rect x="241.5" y="485.5" width="2.5" height="7.5" fill="#00ff00" />
<rect x="241.5" y="488.5" width="2.5" height="4.5" fill="#ffff00" />
<rect x="244.0" y="485.5" width="2.5" height="7.5" fill="#00ff00" />
<rect x="244.0" y="488.5" width="2.5" height="4.5" fill="#ffff00" />
<rect x="244.0" y="491.5" width="2.5" height="1.5" fill="#ffb0b0" />
<rect x="246.5" y="485.5" width="2.5" height="7.5" fill="#00ff00" />
<rect x="246.5" y="488.5" width="2.5" height="4.5" fill="#ffff00" />
<rect x="249.0" y="484.5" width="2.5" height="8.5" fill="#00ff00" />
<rect x="249.0" y="488.5" width="2.5" height="4.5" fill="#ffff00" />
<rect x="251.5" y="486.5" width="2.5" height="6.5" fill="#00ff00" />
<rect x="251.5" y="488.5" width="2.5" height="4.5" fill="#ffff00" />
<rect x="254.0" y="485.5" width="2.5" height="7.5" fill="#00ff00" />
<rect x="254.0" y="489.5" width="2.5" height="3.5" fill="#ffff00" />
<rect x="256.5" y="485.5" width="2.5" height="7.5" fill="#00ff00" />
<rect x="256.5" y="488.5" width="2.5" height="4.5" fill="#ffff00" />
<rect x="259.0" y="485.5" width="2.5" height="7.5" fill="#00ff00" />
<rect x="259.0" y="489.5" width="2.5" height="3.5" fill="#ffff00" />
<rect x="261.5" y="484.5" width="2.5" height="8.5" fill="#00ff00" />
<rect x="261.5" y="489.5" width="2.5" height="3.5" fill="#ffff00" />
<rect x="264.0" y="486.5" width="2.5" height="6.5" fill="#00ff00" />
<rect x="264.0" y="489.5" width="2.5" height="3.5" fill="#ffff00" />
<rect x="266.5" y="485.5" width="2.5" height="7.5" fill="#00ff00" />
<rect x="266.5" y="488.5" width="2.5" height="4.5" fill="#ffff00" />
<rect x="269.0" y="486.5" width="2.5" height="6.5" fill="#00ff00" />
<rect x="269.0" y="488.5" width="2.5" height="4.5" fill="#ffff00" />
<rect x="271.5" y="485.5" width="2.5" height="7.5" fill="#00ff00" />
<rect x="271.5" y="488.5" width="2.5" height="4.5" fill="#ffff00" />
<rect x="274.0" y="485.5" width="2.5" height="7.5" fill="#00ff00" />
<rect x="274.0" y="488.5" width="2.5" height="4.5" fill="#ffff00" />
<rect x="276.5" y="484.5" width="2.5" height="8.5" fill="#00ff00" />
<rect x="276.5" y="488.5" width="2.5" height="4.5" fill="#ffff00" />
<rect x="279.0" y="484.5" width="2.5" height="8.5" fill="#00ff00" />
<rect x="279.0" y="488.5" width="2.5" height="4.5" fill="#ffff00" />
<rect x="281.5" y="485.5" width="2.5" height="7.5" fill="#00ff00" />
<rect x="281.5" y="489.5" width="2.5" height="3.5" fill="#ffff00" />
<rect x="284.0" y="485.5" width="2.5" height="7.5" fill="#00ff00" />
<rect x="284.0" y="489.5" width="2.5" height="3.5" fill="#ffff00" />
<rect x="286.5" y="485.5" width="2.5" height="7.5" fill="#00ff00" />
<rect x="286.5" y="488.5" width="2.5" height="4.5" fill="#ffff00" />
<rect x="289.0" y="485.5" width="2.5" height="7.5" fill="#00ff00" />
<rect x="289.0" y="489.5" width="2.5" height="3.5" fill="#ffff00" />
<rect x="289.0" y="491.5" width="2.5" height="1.5" fill="#ffb0b0" />
<rect x="291.5" y="485.5" width="2.5" height="7.5" fill="#00ff00" />
<rect x="291.5" y="488.5" width="2.5" height="4.5" fill="#ffff00" />
<rect x="294.0" y="486.5" width="2.5" height="6.5" fill="#00ff00" />
<rect x="294.0" y="488.5" width="2.5" height="4.5" fill="#ffff00" />
<rect x="296.5" y="485.5" width="2.5" height="7.5" fill="#00ff00" />
<rect x="296.5" y="488.5" width="2.5" height="4.5" fill="#ffff00" />
<rect x="299.0" y="485.5" width="2.5" height="7.5" fill="#00ff00" />
<rect x="299.0" y="488.5" width="2.5" height="4.5" fill="#ffff00" />
<rect x="299.0" y="491.5" width="2.5" height="1.5" fill="#ffb0b0" />
<rect x="301.5" y="484.5" width="2.5" height="8.5" fill="#00ff00" />
<rect x="301.5" y="488.5" width="2.5" height="4.5" fill="#ffff00" />
<rect x="304.0" y="486.5" width="2.5" height="6.5" fill="#00ff00" />
<rect x="304.0" y="489.5" width="2.5" height="3.5" fill="#ffff00" />
<rect x="306.5" y="484.5" width="2.5" height="8.5" fill="#00ff00" />
<rect x="306.5" y="488.5" width="2.5" height="4.5" fill="#ffff00" />
<rect x="309.0" y="486.5" width="2.5" height="6.5" fill="#00ff00" />
<rect x="309.0" y="488.5" width="2.5" height="4.5" fill="#ffff00" />
<rect x="311.5" y="485.5" width="2.5" height="7.5" fill="#00ff00" />
<rect x="311.5" y="488.5" width="2.5" height="4.5" fill="#ffff00" />
<rect x="314.0" y="485.5" width="2.5" height="7.5" fill="#00ff00" />
<rect x="314.0" y="489.5" width="2.5" height="3.5" fill="#ffff00" />
<rect x="316.5" y="485.5" width="2.5" height="7.5" fill="#00ff00" />
<rect x="316.5" y="488.5" width="2.5" height="4.5" fill="#ffff00" />
<rect x="319.0" y="486.5" width="2.5" height="6.5" fill="#00ff00" />
<rect x="319.0" y="489.5" width="2.5" height="3.5" fill="#ffff00" />
<rect x="321.5" y="486.5" width="2.5" height="6.5" fill="#00ff00" />
<rect x="321.5" y="488.5" width="2.5" height="4.5" fill="#ffff00" />
<rect x="324.0" y="485.5" width="2.5" height="7.5" fill="#00ff00" />
<rect x="324.0" y="488.5" width="2.5" height="4.5" fill="#ffff00" />
<rect x="326.5" y="485.5" width="2.5" height="7.5" fill="#00ff00" />
<rect x="326.5" y="488.5" width="2.5" height="4.5" fill="#ffff00" />
<rect x="329.0" y="485.5" width="2.5" height="7.5" fill="#00ff00" />
<rect x="329.0" y="488.5" width="2.5" height="4.5" fill="#ffff00" />
<rect x="331.5" y="486.5" width="2.5" height="6.5" fill="#00ff00" />
<rect x="331.5" y="488.5" width="2.5" height="4.5" fill="#ffff00" />
<rect x="334.0" y="486.5" width="2.5" height="6.5" fill="#00ff00" />
<rect x="334.0" y="488.5" width="2.5" height="4.5" fill="#ffff00" />
<rect x="336.5" y="485.5" width="2.5" height="7.5" fill="#00ff00" />
<rect x="336.5" y="489.5" width="2.5" height="3.5" fill="#ffff00" />
<rect x="339.0" y="486.5" width="2.5" height="6.5" fill="#00ff00" />
<rect x="339.0" y="488.5" width="2.5" height="4.5" fill="#ffff00" />
<rect x="341.5" y="485.5" width="2.5" height="7.5" fill="#00ff00" />
<rect x="341.5" y="488.5" width="2.5" height="4.5" fill="#ffff00" />
<rect x="344.0" y="484.5" width="2.5" height="8.5" fill="#00ff00" />
<rect x="344.0" y="488.5" width="2.5" height="4.5" fill="#ffff00" />
<rect x="346.5" y="484.5" width="2.5" height="8.5" fill="#00ff00" />
<rect x="346.5" y="488.5" width="2.5" height="4.5" fill="#ffff00" />
<rect x="349.0" y="485.5" width="2.0" height="7.5" fill="#00ff00" />
<rect x="349.0" y="489.5" width="2.0" height="3.5" fill="#ffff00" />
<rect x="69.0" y="461.0" width="2.0" height="19.0" fill="#888888" />
<rect x="71.0" y="456.0" width="5.0" height="24.0" fill="#888888" />
<rect x="76.0" y="454.0" width="3.0" height="26.0" fill="#888888" />
<rect x="79.0" y="464.0" width="2.0" height="15.0" fill="#888888" />
<rect x="81.0" y="469.0" width="3.0" height="10.0" fill="#888888" />
<rect x="84.0" y="461.0" width="2.0" height="20.0" fill="#888888" />
<rect x="86.0" y="452.0" width="2.0" height="30.0" fill="#888888" />
<rect x="88.0" y="449.0" width="3.0" height="33.0" fill="#888888" />
<rect x="91.0" y="455.0" width="2.0" height="27.0" fill="#888888" />
<rect x="93.0" y="449.0" width="3.0" height="33.0" fill="#888888" />
<rect x="96.0" y="451.0" width="2.0" height="32.0" fill="#888888" />
<rect x="98.0" y="457.0" width="3.0" height="25.0" fill="#888888" />
<rect x="101.0" y="464.0" width="3.0" height="18.0" fill="#888888" />
<rect x="104.0" y="460.0" width="2.0" height="22.0" fill="#888888" />
<rect x="106.0" y="462.0" width="4.0" height="20.0" fill="#888888" />
<rect x="110.0" y="456.0" width="3.0" height="26.0" fill="#888888" />
<rect x="113.0" y="459.0" width="5.0" height="23.0" fill="#888888" />
<rect x="118.0" y="472.0" width="3.0" height="10.0" fill="#888888" />
<rect x="121.0" y="458.0" width="5.0" height="24.0" fill="#888888" />
<rect x="126.0" y="455.0" width="3.0" height="28.0" fill="#888888" />
<rect x="129.0" y="452.0" width="2.0" height="32.0" fill="#888888" />
<rect x="131.0" y="442.0" width="2.0" height="42.0" fill="#888888" />
<rect x="133.0" y="451.0" width="4.0" height="33.0" fill="#888888" />
<rect x="137.0" y="456.0" width="4.0" height="28.0" fill="#888888" />
<rect x="141.0" y="460.0" width="3.0" height="23.0" fill="#888888" />
<rect x="144.0" y="463.0" width="2.0" height="18.0" fill="#888888" />
<rect x="146.0" y="459.0" width="3.0" height="21.0" fill="#888888" />
<rect x="149.0" y="459.0" width="3.0" height="23.0" fill="#888888" />
<rect x="152.0" y="463.0" width="2.0" height="18.0" fill="#888888" />
<rect x="154.0" y="466.0" width="3.0" height="16.0" fill="#888888" />
<rect x="157.0" y="461.0" width="2.0" height="20.0" fill="#888888" />
<rect x="159.0" y="467.0" width="3.0" height="15.0" fill="#888888" />
<rect x="162.0" y="458.0" width="2.0" height="25.0" fill="#888888" />
<rect x="164.0" y="454.0" width="3.0" height="29.0" fill="#888888" />
<rect x="167.0" y="462.0" width="2.0" height="20.0" fill="#888888" />
<rect x="169.0" y="466.0" width="3.0" height="15.0" fill="#888888" />
<rect x="172.0" y="462.0" width="2.0" height="19.0" fill="#888888" />
<rect x="174.0" y="464.0" width="5.0" height="16.0" fill="#888888" />
<rect x="179.0" y="468.0" width="3.0" height="11.0" fill="#888888" />
<rect x="182.0" y="471.0" width="2.0" height="7.0" fill="#888888" />
<rect x="184.0" y="472.0" width="5.0" height="5.0" fill="#888888" />
<rect x="189.0" y="471.0" width="3.0" height="4.0" fill="#888888" />
<rect x="192.0" y="467.0" width="2.0" height="10.0" fill="#888888" />
<rect x="194.0" y="470.0" width="7.0" height="4.0" fill="#888888" />
<rect x="201.0" y="468.0" width="5.0" height="10.0" fill="#888888" />
<rect x="206.0" y="467.0" width="6.0" height="10.0" fill="#888888" />
<rect x="215.0" y="469.0" width="6.0" height="7.0" fill="#888888" />
<rect x="221.0" y="467.0" width="2.0" height="10.0" fill="#888888" />
<rect x="223.0" y="471.0" width="5.0" height="3.0" fill="#888888" />
<rect x="228.0" y="468.0" width="8.0" height="9.0" fill="#888888" />
<rect x="236.0" y="471.0" width="4.0" height="5.0" fill="#888888" />
<rect x="240.0" y="470.0" width="9.0" height="9.0" fill="#888888" />
<rect x="249.0" y="469.0" width="6.0" height="10.0" fill="#888888" />
<rect x="255.0" y="463.0" width="7.0" height="19.0" fill="#888888" />
<rect x="262.0" y="462.0" width="5.0" height="20.0" fill="#888888" />
<rect x="267.0" y="458.0" width="3.0" height="25.0" fill="#888888" />
<rect x="270.0" y="465.0" width="2.0" height="17.0" fill="#888888" />
<rect x="272.0" y="461.0" width="3.0" height="21.0" fill="#888888" />
<rect x="275.0" y="469.0" width="5.0" height="11.0" fill="#888888" />
<rect x="280.0" y="470.0" width="5.0" height="11.0" fill="#888888" />
<rect x="285.0" y="469.0" width="5.0" height="11.0" fill="#888888" />
<rect x="290.0" y="471.0" width="3.0" height="9.0" fill="#888888" />
<rect x="293.0" y="467.0" width="7.0" height="15.0" fill="#888888" />
<rect x="300.0" y="474.0" width="3.0" height="4.0" fill="#888888" />
<rect x="303.0" y="475.0" width="3.0" height="2.0" fill="#888888" />
<rect x="306.0" y="476.0" width="3.0" height="3.0" fill="#888888" />
<rect x="323.0" y="473.0" width="2.0" height="4.0" fill="#888888" />
<rect x="328.0" y="474.0" width="2.0" height="5.0" fill="#888888" />
<rect x="343.0" y="474.0" width="2.0" height="3.0" fill="#888888" />
<rect x="49.0" y="432.0" width="20.0" height="54.0" fill="#888888" />
<rect x="59.0" y="486.0" width="2.5" height="5.0" fill="#888888" />
<rect x="61.0" y="432.0" width="5.0" height="2.0" fill="#000" />
<rect x="49.0" y="464.0" width="5.0" height="22.0" fill="#c8c8c8" />
<rect x="51.0" y="455.0" width="3.0" height="31.0" fill="#c8c8c8" />
<rect x="59.0" y="444.0" width="2.5" height="43.0" fill="#c8c8c8" />
<rect x="56.0" y="467.0" width="13.0" height="3.0" fill="#c8c8c8" />
<rect x="56.0" y="473.0" width="7.0" height="4.0" fill="#c8c8c8" />
<rect x="66.0" y="476.0" width="3.0" height="2.0" fill="#c8c8c8" />
<rect x="69.0" y="485.0" width="3.0" height="2.0" fill="#888888" />
<rect x="49.0" y="491.0" width="2.5" height="2.0" fill="#00ff00" />
<rect x="81.0" y="487.0" width="3.0" height="3.0" fill="#00ff00" />
<rect x="49.0" y="493.0" width="302.0" height="8.5" fill="#000" />
<rect x="44.0" y="493.5" width="5.0" height="1.0" fill="#000" />
<rect x="44.0" y="483.5" width="5.0" height="1.0" fill="#000" />
<rect x="44.0" y="471.5" width="5.0" height="1.0" fill="#000" />
<rect x="44.0" y="459.5" width="5.0" height="1.0" fill="#000" />
<rect x="44.0" y="447.5" width="5.0" height="1.0" fill="#000" />
<rect x="44.0" y="435.5" width="5.0" height="1.0" fill="#000" />
<rect x="44.0" y="423.5" width="5.0" height="1.0" fill="#000" />
<rect x="44.0" y="411.5" width="5.0" height="1.0" fill="#000" />
<rect x="44.0" y="399.5" width="5.0" height="1.0" fill="#000" />
<rect x="44.0" y="387.5" width="5.0" height="1.0" fill="#000" />
<rect x="44.0" y="375.5" width="5.0" height="1.0" fill="#000" />
<rect x="44.0" y="363.5" width="5.0" height="1.0" fill="#000" />
<rect x="44.0" y="351.5" width="5.0" height="1.0" fill="#000" />
<rect x="44.0" y="341.5" width="5.0" height="1.0" fill="#000" />
<rect x="49.0" y="502.0" width="1.3" height="11.0" fill="#000" />
<rect x="74.0" y="502.0" width="1.3" height="6.0" fill="#000" />
<rect x="99.0" y="502.0" width="1.3" height="11.0" fill="#000" />
<rect x="125.0" y="502.0" width="1.3" height="6.0" fill="#000" />
<rect x="150.0" y="502.0" width="1.3" height="11.0" fill="#000" />
<rect x="175.0" y="502.0" width="1.3" height="6.0" fill="#000" />
<rect x="200.0" y="502.0" width="1.3" height="11.0" fill="#000" />
<rect x="225.0" y="502.0" width="1.3" height="6.0" fill="#000" />
<rect x="250.0" y="502.0" width="1.3" height="11.0" fill="#000" />
<rect x="276.0" y="502.0" width="1.3" height="6.0" fill="#000" />
<rect x="301.0" y="502.0" width="1.3" height="11.0" fill="#000" />
<rect x="326.0" y="502.0" width="1.3" height="6.0" fill="#000" />
<rect x="351.0" y="502.0" width="1.3" height="11.0" fill="#000" />
<rect x="354.0" y="340.0" width="6.0" height="21.0" fill="#ff0000" />
<rect x="354.0" y="360.7" width="6.0" height="21.0" fill="#ffa0a0" />
<rect x="354.0" y="381.4" width="6.0" height="21.0" fill="#ffff00" />
<rect x="354.0" y="402.1" width="6.0" height="21.0" fill="#00ff00" />
<rect x="354.0" y="422.8" width="6.0" height="21.0" fill="#0000ff" />
<rect x="354.0" y="443.5" width="6.0" height="21.0" fill="#888888" />
<rect x="354.0" y="464.2" width="6.0" height="21.0" fill="#c0c0c0" />
<rect x="354.0" y="484.9" width="6.0" height="21.0" fill="#000000" />
<rect x="49.0" y="547.0" width="302.0" height="153.0" fill="#000080" />
<rect x="49.0" y="640.0" width="2.6" height="2.1" fill="#20c0ff" />
<rect x="49.0" y="642.0" width="2.6" height="2.1" fill="#20e0ff" />
<rect x="49.0" y="644.0" width="2.6" height="2.1" fill="#00ffff" />
<rect x="49.0" y="646.0" width="2.6" height="2.1" fill="#80ff80" />
<rect x="49.0" y="648.0" width="2.6" height="52.0" fill="#c80000" />
<rect x="51.5" y="641.0" width="2.6" height="2.1" fill="#00b0ff" />
<rect x="51.5" y="643.0" width="2.6" height="2.1" fill="#0080ff" />
<rect x="51.5" y="645.0" width="2.6" height="2.1" fill="#40ffd0" />
<rect x="51.5" y="647.0" width="2.6" height="2.1" fill="#ffff00" />
<rect x="51.5" y="649.0" width="2.6" height="51.0" fill="#ff4000" />
<rect x="51.5" y="652.0" width="2.6" height="2.0" fill="#900000" />
<rect x="54.0" y="641.0" width="2.6" height="2.1" fill="#00b0ff" />
<rect x="54.0" y="643.0" width="2.6" height="2.1" fill="#00c0ff" />
<rect x="54.0" y="645.0" width="2.6" height="2.1" fill="#2090ff" />
<rect x="54.0" y="647.0" width="2.6" height="2.1" fill="#2090ff" />
<rect x="54.0" y="649.0" width="2.6" height="2.1" fill="#00ffff" />
<rect x="54.0" y="651.0" width="2.6" height="2.1" fill="#80ff80" />
<rect x="54.0" y="653.0" width="2.6" height="2.1" fill="#ff9000" />
<rect x="54.0" y="654.0" width="2.6" height="46.0" fill="#f00000" />
<rect x="54.0" y="656.0" width="2.6" height="2.0" fill="#800000" />
<rect x="56.5" y="641.0" width="2.6" height="2.1" fill="#00b0ff" />
<rect x="56.5" y="643.0" width="2.6" height="2.1" fill="#00c0ff" />
<rect x="56.5" y="645.0" width="2.6" height="2.1" fill="#40a0ff" />
<rect x="56.5" y="647.0" width="2.6" height="2.1" fill="#40a0ff" />
<rect x="56.5" y="649.0" width="2.6" height="2.1" fill="#00ffff" />
<rect x="56.5" y="651.0" width="2.6" height="2.1" fill="#20f0ff" />
<rect x="56.5" y="653.0" width="2.6" height="2.1" fill="#ffff00" />
<rect x="56.5" y="655.0" width="2.6" height="2.1" fill="#ff9000" />
<rect x="56.5" y="657.0" width="2.6" height="43.0" fill="#c00000" />
<rect x="56.5" y="657.0" width="2.6" height="2.0" fill="#ff4000" />
<rect x="59.0" y="641.0" width="2.6" height="2.1" fill="#00d0ff" />
<rect x="59.0" y="643.0" width="2.6" height="2.1" fill="#00c0ff" />
<rect x="59.0" y="645.0" width="2.6" height="2.1" fill="#2090ff" />
<rect x="59.0" y="647.0" width="2.6" height="2.1" fill="#00c0ff" />
<rect x="59.0" y="649.0" width="2.6" height="2.1" fill="#00ffff" />
<rect x="59.0" y="651.0" width="2.6" height="2.1" fill="#80ffa0" />
<rect x="59.0" y="653.0" width="2.6" height="2.1" fill="#ffe000" />
<rect x="59.0" y="655.0" width="2.6" height="2.1" fill="#ff6000" />
<rect x="59.0" y="657.0" width="2.6" height="43.0" fill="#c80000" />
<rect x="61.5" y="641.0" width="2.6" height="2.1" fill="#00d0ff" />
<rect x="61.5" y="643.0" width="2.6" height="2.1" fill="#00d0ff" />
<rect x="61.5" y="645.0" width="2.6" height="2.1" fill="#00c0ff" />
<rect x="61.5" y="647.0" width="2.6" height="2.1" fill="#0080ff" />
<rect x="61.5" y="649.0" width="2.6" height="2.1" fill="#20e0ff" />
<rect x="61.5" y="651.0" width="2.6" height="2.1" fill="#80ffa0" />
<rect x="61.5" y="653.0" width="2.6" height="2.1" fill="#40ffd0" />
<rect x="61.5" y="655.0" width="2.6" height="2.1" fill="#80ff80" />
<rect x="61.5" y="657.0" width="2.6" height="2.1" fill="#80ff80" />
<rect x="61.5" y="659.0" width="2.6" height="2.1" fill="#ffc000" />
<rect x="61.5" y="660.0" width="2.6" height="40.0" fill="#a00000" />
<rect x="64.0" y="640.0" width="2.6" height="2.1" fill="#00d0ff" />
<rect x="64.0" y="642.0" width="2.6" height="2.1" fill="#20c0ff" />
<rect x="64.0" y="644.0" width="2.6" height="2.1" fill="#0080ff" />
<rect x="64.0" y="646.0" width="2.6" height="2.1" fill="#40c0ff" />
<rect x="64.0" y="648.0" width="2.6" height="2.1" fill="#20e0ff" />
<rect x="64.0" y="650.0" width="2.6" height="2.1" fill="#40ffd0" />
<rect x="64.0" y="652.0" width="2.6" height="2.1" fill="#40ffd0" />
<rect x="64.0" y="654.0" width="2.6" height="2.1" fill="#c0ff40" />
<rect x="64.0" y="656.0" width="2.6" height="2.1" fill="#c0ff40" />
<rect x="64.0" y="658.0" width="2.6" height="2.1" fill="#ff6000" />
<rect x="64.0" y="659.0" width="2.6" height="41.0" fill="#8c0000" />
<rect x="64.0" y="664.0" width="2.6" height="2.0" fill="#900000" />
<rect x="66.5" y="641.0" width="2.6" height="2.1" fill="#20c0ff" />
<rect x="66.5" y="643.0" width="2.6" height="2.1" fill="#00b0ff" />
<rect x="66.5" y="645.0" width="2.6" height="2.1" fill="#20e0ff" />
<rect x="66.5" y="647.0" width="2.6" height="2.1" fill="#40c0ff" />
<rect x="66.5" y="649.0" width="2.6" height="2.1" fill="#40c0ff" />
<rect x="66.5" y="651.0" width="2.6" height="2.1" fill="#80ffa0" />
<rect x="66.5" y="653.0" width="2.6" height="2.1" fill="#20f0ff" />
<rect x="66.5" y="655.0" width="2.6" height="2.1" fill="#80ff80" />
<rect x="66.5" y="657.0" width="2.6" height="2.1" fill="#ff9000" />
<rect x="66.5" y="658.0" width="2.6" height="42.0" fill="#ff4000" />
<rect x="69.0" y="640.0" width="2.6" height="2.1" fill="#20c0ff" />
<rect x="69.0" y="642.0" width="2.6" height="2.1" fill="#00d0ff" />
<rect x="69.0" y="644.0" width="2.6" height="2.1" fill="#0080ff" />
<rect x="69.0" y="646.0" width="2.6" height="2.1" fill="#40c0ff" />
<rect x="69.0" y="648.0" width="2.6" height="2.1" fill="#40c0ff" />
<rect x="69.0" y="650.0" width="2.6" height="2.1" fill="#20f0ff" />
<rect x="69.0" y="652.0" width="2.6" height="2.1" fill="#00ffff" />
<rect x="69.0" y="654.0" width="2.6" height="2.1" fill="#ffff00" />
<rect x="69.0" y="656.0" width="2.6" height="2.1" fill="#ff6000" />
<rect x="69.0" y="657.0" width="2.6" height="43.0" fill="#c00000" />
<rect x="69.0" y="664.0" width="2.6" height="2.0" fill="#ff8000" />
<rect x="71.5" y="640.0" width="2.6" height="2.1" fill="#00b0ff" />
<rect x="71.5" y="642.0" width="2.6" height="2.1" fill="#00b0ff" />
<rect x="71.5" y="644.0" width="2.6" height="2.1" fill="#0080ff" />
<rect x="71.5" y="646.0" width="2.6" height="2.1" fill="#00c0ff" />
<rect x="71.5" y="648.0" width="2.6" height="2.1" fill="#0080ff" />
<rect x="71.5" y="650.0" width="2.6" height="2.1" fill="#40ffd0" />
<rect x="71.5" y="652.0" width="2.6" height="2.1" fill="#40ffd0" />
<rect x="71.5" y="654.0" width="2.6" height="2.1" fill="#ffe000" />
<rect x="71.5" y="656.0" width="2.6" height="2.1" fill="#ffff00" />
<rect x="71.5" y="658.0" width="2.6" height="2.1" fill="#ff6000" />
<rect x="71.5" y="659.0" width="2.6" height="41.0" fill="#a00000" />
<rect x="71.5" y="666.0" width="2.6" height="2.0" fill="#ff4000" />
<rect x="74.0" y="641.0" width="2.6" height="2.1" fill="#00b0ff" />
<rect x="74.0" y="643.0" width="2.6" height="2.1" fill="#00d0ff" />
<rect x="74.0" y="645.0" width="2.6" height="2.1" fill="#20e0ff" />
<rect x="74.0" y="647.0" width="2.6" height="2.1" fill="#00c0ff" />
<rect x="74.0" y="649.0" width="2.6" height="2.1" fill="#20e0ff" />
<rect x="74.0" y="651.0" width="2.6" height="2.1" fill="#2090ff" />
<rect x="74.0" y="653.0" width="2.6" height="2.1" fill="#80ffa0" />
<rect x="74.0" y="655.0" width="2.6" height="2.1" fill="#40ffd0" />
<rect x="74.0" y="657.0" width="2.6" height="2.1" fill="#ffe000" />
<rect x="74.0" y="659.0" width="2.6" height="2.1" fill="#80ff80" />
<rect x="74.0" y="661.0" width="2.6" height="2.1" fill="#ff9000" />
<rect x="74.0" y="663.0" width="2.6" height="37.0" fill="#c80000" />
<rect x="76.5" y="640.0" width="2.6" height="2.1" fill="#00b0ff" />
<rect x="76.5" y="642.0" width="2.6" height="2.1" fill="#00d0ff" />
<rect x="76.5" y="644.0" width="2.6" height="2.1" fill="#20e0ff" />
<rect x="76.5" y="646.0" width="2.6" height="2.1" fill="#00c0ff" />
<rect x="76.5" y="648.0" width="2.6" height="2.1" fill="#20e0ff" />
<rect x="76.5" y="650.0" width="2.6" height="2.1" fill="#40c0ff" />
<rect x="76.5" y="652.0" width="2.6" height="2.1" fill="#00ffff" />
<rect x="76.5" y="654.0" width="2.6" height="2.1" fill="#80ffa0" />
<rect x="76.5" y="656.0" width="2.6" height="2.1" fill="#80ff80" />
<rect x="76.5" y="658.0" width="2.6" height="2.1" fill="#ffff00" />
<rect x="76.5" y="660.0" width="2.6" height="2.1" fill="#ff6000" />
<rect x="76.5" y="661.0" width="2.6" height="39.0" fill="#a00000" />
<rect x="76.5" y="663.0" width="2.6" height="2.0" fill="#ff8000" />
<rect x="79.0" y="641.0" width="2.6" height="2.1" fill="#20c0ff" />
<rect x="79.0" y="643.0" width="2.6" height="2.1" fill="#00d0ff" />
<rect x="79.0" y="645.0" width="2.6" height="2.1" fill="#20e0ff" />
<rect x="79.0" y="647.0" width="2.6" height="2.1" fill="#00c0ff" />
<rect x="79.0" y="649.0" width="2.6" height="2.1" fill="#2090ff" />
<rect x="79.0" y="651.0" width="2.6" height="2.1" fill="#0080ff" />
<rect x="79.0" y="653.0" width="2.6" height="2.1" fill="#40ffd0" />
<rect x="79.0" y="655.0" width="2.6" height="2.1" fill="#00ffff" />
<rect x="79.0" y="657.0" width="2.6" height="2.1" fill="#ffe000" />
<rect x="79.0" y="659.0" width="2.6" height="2.1" fill="#c0ff40" />
<rect x="79.0" y="661.0" width="2.6" height="2.1" fill="#ff6000" />
<rect x="79.0" y="663.0" width="2.6" height="37.0" fill="#a00000" />
<rect x="79.0" y="667.0" width="2.6" height="2.0" fill="#ff8000" />
<rect x="79.0" y="667.0" width="2.6" height="2.0" fill="#900000" />
<rect x="81.5" y="640.0" width="2.6" height="2.1" fill="#00b0ff" />
<rect x="81.5" y="642.0" width="2.6" height="2.1" fill="#00b0ff" />
<rect x="81.5" y="644.0" width="2.6" height="2.1" fill="#40a0ff" />
<rect x="81.5" y="646.0" width="2.6" height="2.1" fill="#20e0ff" />
<rect x="81.5" y="648.0" width="2.6" height="2.1" fill="#00c0ff" />
<rect x="81.5" y="650.0" width="2.6" height="2.1" fill="#0080ff" />
<rect x="81.5" y="652.0" width="2.6" height="2.1" fill="#20f0ff" />
<rect x="81.5" y="654.0" width="2.6" height="2.1" fill="#00ffff" />
<rect x="81.5" y="656.0" width="2.6" height="2.1" fill="#80ffa0" />
<rect x="81.5" y="658.0" width="2.6" height="2.1" fill="#80ff80" />
<rect x="81.5" y="660.0" width="2.6" height="2.1" fill="#ffc000" />
<rect x="81.5" y="662.0" width="2.6" height="2.1" fill="#ff9000" />
<rect x="81.5" y="663.0" width="2.6" height="37.0" fill="#c00000" />
<rect x="84.0" y="640.0" width="2.6" height="2.1" fill="#00b0ff" />
<rect x="84.0" y="642.0" width="2.6" height="2.1" fill="#00d0ff" />
<rect x="84.0" y="644.0" width="2.6" height="2.1" fill="#0080ff" />
<rect x="84.0" y="646.0" width="2.6" height="2.1" fill="#40a0ff" />
<rect x="84.0" y="648.0" width="2.6" height="2.1" fill="#0080ff" />
<rect x="84.0" y="650.0" width="2.6" height="2.1" fill="#40a0ff" />
<rect x="84.0" y="652.0" width="2.6" height="2.1" fill="#20f0ff" />
<rect x="84.0" y="654.0" width="2.6" height="2.1" fill="#00ffff" />
<rect x="84.0" y="656.0" width="2.6" height="2.1" fill="#ffff00" />
<rect x="84.0" y="658.0" width="2.6" height="2.1" fill="#ffe000" />
<rect x="84.0" y="660.0" width="2.6" height="2.1" fill="#ff9000" />
<rect x="84.0" y="661.0" width="2.6" height="39.0" fill="#a00000" />
<rect x="86.5" y="640.0" width="2.6" height="2.1" fill="#20c0ff" />
<rect x="86.5" y="642.0" width="2.6" height="2.1" fill="#00b0ff" />
<rect x="86.5" y="644.0" width="2.6" height="2.1" fill="#2090ff" />
<rect x="86.5" y="646.0" width="2.6" height="2.1" fill="#0080ff" />
<rect x="86.5" y="648.0" width="2.6" height="2.1" fill="#0080ff" />
<rect x="86.5" y="650.0" width="2.6" height="2.1" fill="#20e0ff" />
<rect x="86.5" y="652.0" width="2.6" height="2.1" fill="#80ffa0" />
<rect x="86.5" y="654.0" width="2.6" height="2.1" fill="#80ffa0" />
<rect x="86.5" y="656.0" width="2.6" height="2.1" fill="#80ff80" />
<rect x="86.5" y="658.0" width="2.6" height="2.1" fill="#80ff80" />
<rect x="86.5" y="660.0" width="2.6" height="2.1" fill="#ff9000" />
<rect x="86.5" y="662.0" width="2.6" height="38.0" fill="#a00000" />
<rect x="89.0" y="640.0" width="2.6" height="2.1" fill="#20c0ff" />
<rect x="89.0" y="642.0" width="2.6" height="2.1" fill="#00b0ff" />
<rect x="89.0" y="644.0" width="2.6" height="2.1" fill="#40c0ff" />
<rect x="89.0" y="646.0" width="2.6" height="2.1" fill="#40a0ff" />
<rect x="89.0" y="648.0" width="2.6" height="2.1" fill="#20e0ff" />
<rect x="89.0" y="650.0" width="2.6" height="2.1" fill="#0080ff" />
<rect x="89.0" y="652.0" width="2.6" height="2.1" fill="#00ffff" />
<rect x="89.0" y="654.0" width="2.6" height="2.1" fill="#20f0ff" />
<rect x="89.0" y="656.0" width="2.6" height="2.1" fill="#20f0ff" />
<rect x="89.0" y="658.0" width="2.6" height="2.1" fill="#80ff80" />
<rect x="89.0" y="660.0" width="2.6" height="2.1" fill="#80ff80" />
<rect x="89.0" y="662.0" width="2.6" height="2.1" fill="#ff9000" />
<rect x="89.0" y="664.0" width="2.6" height="36.0" fill="#a00000" />
<rect x="89.0" y="665.0" width="2.6" height="2.0" fill="#800000" />
<rect x="89.0" y="665.0" width="2.6" height="2.0" fill="#ff4000" />
<rect x="91.5" y="640.0" width="2.6" height="2.1" fill="#20c0ff" />
<rect x="91.5" y="642.0" width="2.6" height="2.1" fill="#00b0ff" />
<rect x="91.5" y="644.0" width="2.6" height="2.1" fill="#40c0ff" />
<rect x="91.5" y="646.0" width="2.6" height="2.1" fill="#00c0ff" />
<rect x="91.5" y="648.0" width="2.6" height="2.1" fill="#20e0ff" />
<rect x="91.5" y="650.0" width="2.6" height="2.1" fill="#00ffff" />
<rect x="91.5" y="652.0" width="2.6" height="2.1" fill="#80ffa0" />
<rect x="91.5" y="654.0" width="2.6" height="2.1" fill="#40ffd0" />
<rect x="91.5" y="656.0" width="2.6" height="2.1" fill="#80ff80" />
<rect x="91.5" y="658.0" width="2.6" height="2.1" fill="#ff9000" />
<rect x="91.5" y="660.0" width="2.6" height="40.0" fill="#ff4000" />
<rect x="91.5" y="665.0" width="2.6" height="2.0" fill="#ff4000" />
<rect x="94.0" y="640.0" width="2.6" height="2.1" fill="#00d0ff" />
<rect x="94.0" y="642.0" width="2.6" height="2.1" fill="#20c0ff" />
<rect x="94.0" y="644.0" width="2.6" height="2.1" fill="#00c0ff" />
<rect x="94.0" y="646.0" width="2.6" height="2.1" fill="#2090ff" />
<rect x="94.0" y="648.0" width="2.6" height="2.1" fill="#00c0ff" />
<rect x="94.0" y="650.0" width="2.6" height="2.1" fill="#20e0ff" />
<rect x="94.0" y="652.0" width="2.6" height="2.1" fill="#00c0ff" />
<rect x="94.0" y="654.0" width="2.6" height="2.1" fill="#20f0ff" />
<rect x="94.0" y="656.0" width="2.6" height="2.1" fill="#80ffa0" />
<rect x="94.0" y="658.0" width="2.6" height="2.1" fill="#80ffa0" />
<rect x="94.0" y="660.0" width="2.6" height="2.1" fill="#c0ff40" />
<rect x="94.0" y="662.0" width="2.6" height="2.1" fill="#ffe000" />
<rect x="94.0" y="664.0" width="2.6" height="2.1" fill="#ffc000" />
<rect x="94.0" y="666.0" width="2.6" height="34.0" fill="#b40000" />
<rect x="96.5" y="641.0" width="2.6" height="2.1" fill="#00b0ff" />
<rect x="96.5" y="643.0" width="2.6" height="2.1" fill="#00b0ff" />
<rect x="96.5" y="645.0" width="2.6" height="2.1" fill="#2090ff" />
<rect x="96.5" y="647.0" width="2.6" height="2.1" fill="#40a0ff" />
<rect x="96.5" y="649.0" width="2.6" height="2.1" fill="#0080ff" />
<rect x="96.5" y="651.0" width="2.6" height="2.1" fill="#20f0ff" />
<rect x="96.5" y="653.0" width="2.6" height="2.1" fill="#80ffa0" />
<rect x="96.5" y="655.0" width="2.6" height="2.1" fill="#80ffa0" />
<rect x="96.5" y="657.0" width="2.6" height="2.1" fill="#ffff00" />
<rect x="96.5" y="659.0" width="2.6" height="2.1" fill="#ffc000" />
<rect x="96.5" y="661.0" width="2.6" height="39.0" fill="#c80000" />
<rect x="96.5" y="661.0" width="2.6" height="2.0" fill="#ff8000" />
<rect x="96.5" y="662.0" width="2.6" height="2.0" fill="#900000" />
<rect x="99.0" y="641.0" width="2.6" height="2.1" fill="#00b0ff" />
<rect x="99.0" y="643.0" width="2.6" height="2.1" fill="#00d0ff" />
<rect x="99.0" y="645.0" width="2.6" height="2.1" fill="#40a0ff" />
<rect x="99.0" y="647.0" width="2.6" height="2.1" fill="#20e0ff" />
<rect x="99.0" y="649.0" width="2.6" height="2.1" fill="#00c0ff" />
<rect x="99.0" y="651.0" width="2.6" height="2.1" fill="#40a0ff" />
<rect x="99.0" y="653.0" width="2.6" height="2.1" fill="#40ffd0" />
<rect x="99.0" y="655.0" width="2.6" height="2.1" fill="#80ffa0" />
<rect x="99.0" y="657.0" width="2.6" height="2.1" fill="#80ffa0" />
<rect x="99.0" y="659.0" width="2.6" height="2.1" fill="#80ff80" />
<rect x="99.0" y="661.0" width="2.6" height="2.1" fill="#ffff00" />
<rect x="99.0" y="663.0" width="2.6" height="2.1" fill="#ff9000" />
<rect x="99.0" y="665.0" width="2.6" height="35.0" fill="#8c0000" />
<rect x="99.0" y="666.0" width="2.6" height="2.0" fill="#800000" />
<rect x="99.0" y="666.0" width="2.6" height="2.0" fill="#900000" />
<rect x="101.5" y="640.0" width="2.6" height="2.1" fill="#20c0ff" />
<rect x="101.5" y="642.0" width="2.6" height="2.1" fill="#20c0ff" />
<rect x="101.5" y="644.0" width="2.6" height="2.1" fill="#40a0ff" />
<rect x="101.5" y="646.0" width="2.6" height="2.1" fill="#20e0ff" />
<rect x="101.5" y="648.0" width="2.6" height="2.1" fill="#40a0ff" />
<rect x="101.5" y="650.0" width="2.6" height="2.1" fill="#40c0ff" />
<rect x="101.5" y="652.0" width="2.6" height="2.1" fill="#40c0ff" />
<rect x="101.5" y="654.0" width="2.6" height="2.1" fill="#20f0ff" />
<rect x="101.5" y="656.0" width="2.6" height="2.1" fill="#40ffd0" />
<rect x="101.5" y="658.0" width="2.6" height="2.1" fill="#40ffd0" />
<rect x="101.5" y="660.0" width="2.6" height="2.1" fill="#ffff00" />
<rect x="101.5" y="662.0" width="2.6" height="2.1" fill="#ffff00" />
<rect x="101.5" y="664.0" width="2.6" height="2.1" fill="#ff6000" />
<rect x="101.5" y="666.0" width="2.6" height="34.0" fill="#a00000" />
<rect x="101.5" y="667.0" width="2.6" height="2.0" fill="#800000" />
<rect x="104.0" y="640.0" width="2.6" height="2.1" fill="#00d0ff" />
<rect x="104.0" y="642.0" width="2.6" height="2.1" fill="#20c0ff" />
<rect x="104.0" y="644.0" width="2.6" height="2.1" fill="#20e0ff" />
<rect x="104.0" y="646.0" width="2.6" height="2.1" fill="#40c0ff" />
<rect x="104.0" y="648.0" width="2.6" height="2.1" fill="#20e0ff" />
<rect x="104.0" y="650.0" width="2.6" height="2.1" fill="#40a0ff" />
<rect x="104.0" y="652.0" width="2.6" height="2.1" fill="#00ffff" />
<rect x="104.0" y="654.0" width="2.6" height="2.1" fill="#40ffd0" />
<rect x="104.0" y="656.0" width="2.6" height="2.1" fill="#00ffff" />
<rect x="104.0" y="658.0" width="2.6" height="2.1" fill="#ffff00" />
<rect x="104.0" y="660.0" width="2.6" height="2.1" fill="#80ff80" />
<rect x="104.0" y="662.0" width="2.6" height="2.1" fill="#ffc000" />
<rect x="104.0" y="664.0" width="2.6" height="36.0" fill="#b40000" />
<rect x="106.5" y="640.0" width="2.6" height="2.1" fill="#00d0ff" />
<rect x="106.5" y="642.0" width="2.6" height="2.1" fill="#00d0ff" />
<rect x="106.5" y="644.0" width="2.6" height="2.1" fill="#00c0ff" />
<rect x="106.5" y="646.0" width="2.6" height="2.1" fill="#0080ff" />
<rect x="106.5" y="648.0" width="2.6" height="2.1" fill="#40a0ff" />
<rect x="106.5" y="650.0" width="2.6" height="2.1" fill="#40a0ff" />
<rect x="106.5" y="652.0" width="2.6" height="2.1" fill="#40ffd0" />
<rect x="106.5" y="654.0" width="2.6" height="2.1" fill="#80ffa0" />
<rect x="106.5" y="656.0" width="2.6" height="2.1" fill="#00ffff" />
<rect x="106.5" y="658.0" width="2.6" height="2.1" fill="#ffe000" />
<rect x="106.5" y="660.0" width="2.6" height="2.1" fill="#80ff80" />
<rect x="106.5" y="662.0" width="2.6" height="2.1" fill="#ff9000" />
<rect x="106.5" y="664.0" width="2.6" height="36.0" fill="#ff4000" />
<rect x="106.5" y="665.0" width="2.6" height="2.0" fill="#ff4000" />
<rect x="109.0" y="640.0" width="2.6" height="2.1" fill="#20c0ff" />
<rect x="109.0" y="642.0" width="2.6" height="2.1" fill="#00d0ff" />
<rect x="109.0" y="644.0" width="2.6" height="2.1" fill="#2090ff" />
<rect x="109.0" y="646.0" width="2.6" height="2.1" fill="#2090ff" />
<rect x="109.0" y="648.0" width="2.6" height="2.1" fill="#00c0ff" />
<rect x="109.0" y="650.0" width="2.6" height="2.1" fill="#2090ff" />
<rect x="109.0" y="652.0" width="2.6" height="2.1" fill="#40ffd0" />
<rect x="109.0" y="654.0" width="2.6" height="2.1" fill="#00ffff" />
<rect x="109.0" y="656.0" width="2.6" height="2.1" fill="#20f0ff" />
<rect x="109.0" y="658.0" width="2.6" height="2.1" fill="#80ff80" />
<rect x="109.0" y="660.0" width="2.6" height="2.1" fill="#ffc000" />
<rect x="109.0" y="662.0" width="2.6" height="2.1" fill="#ff9000" />
<rect x="109.0" y="663.0" width="2.6" height="37.0" fill="#e00000" />
<rect x="111.5" y="640.0" width="2.6" height="2.1" fill="#00d0ff" />
<rect x="111.5" y="642.0" width="2.6" height="2.1" fill="#20c0ff" />
<rect x="111.5" y="644.0" width="2.6" height="2.1" fill="#0080ff" />
<rect x="111.5" y="646.0" width="2.6" height="2.1" fill="#0080ff" />
<rect x="111.5" y="648.0" width="2.6" height="2.1" fill="#2090ff" />
<rect x="111.5" y="650.0" width="2.6" height="2.1" fill="#40a0ff" />
<rect x="111.5" y="652.0" width="2.6" height="2.1" fill="#40ffd0" />
<rect x="111.5" y="654.0" width="2.6" height="2.1" fill="#80ffa0" />
<rect x="111.5" y="656.0" width="2.6" height="2.1" fill="#ffe000" />
<rect x="111.5" y="658.0" width="2.6" height="2.1" fill="#ffff00" />
<rect x="111.5" y="660.0" width="2.6" height="2.1" fill="#ff6000" />
<rect x="111.5" y="662.0" width="2.6" height="38.0" fill="#c00000" />
<rect x="111.5" y="663.0" width="2.6" height="2.0" fill="#800000" />
<rect x="111.5" y="664.0" width="2.6" height="2.0" fill="#ff8000" />
<rect x="114.0" y="639.0" width="2.6" height="2.1" fill="#00d0ff" />
<rect x="114.0" y="641.0" width="2.6" height="2.1" fill="#00d0ff" />
<rect x="114.0" y="643.0" width="2.6" height="2.1" fill="#40a0ff" />
<rect x="114.0" y="645.0" width="2.6" height="2.1" fill="#00c0ff" />
<rect x="114.0" y="647.0" width="2.6" height="2.1" fill="#40c0ff" />
<rect x="114.0" y="649.0" width="2.6" height="2.1" fill="#00c0ff" />
<rect x="114.0" y="651.0" width="2.6" height="2.1" fill="#40ffd0" />
<rect x="114.0" y="653.0" width="2.6" height="2.1" fill="#00ffff" />
<rect x="114.0" y="655.0" width="2.6" height="2.1" fill="#20f0ff" />
<rect x="114.0" y="657.0" width="2.6" height="2.1" fill="#c0ff40" />
<rect x="114.0" y="659.0" width="2.6" height="2.1" fill="#ff6000" />
<rect x="114.0" y="661.0" width="2.6" height="2.1" fill="#ff6000" />
<rect x="114.0" y="662.0" width="2.6" height="38.0" fill="#e00000" />
<rect x="114.0" y="663.0" width="2.6" height="2.0" fill="#ff4000" />
<rect x="116.5" y="640.0" width="2.6" height="2.1" fill="#20c0ff" />
<rect x="116.5" y="642.0" width="2.6" height="2.1" fill="#20c0ff" />
<rect x="116.5" y="644.0" width="2.6" height="2.1" fill="#2090ff" />
<rect x="116.5" y="646.0" width="2.6" height="2.1" fill="#20e0ff" />
<rect x="116.5" y="648.0" width="2.6" height="2.1" fill="#40c0ff" />
<rect x="116.5" y="650.0" width="2.6" height="2.1" fill="#40ffd0" />
<rect x="116.5" y="652.0" width="2.6" height="2.1" fill="#80ffa0" />
<rect x="116.5" y="654.0" width="2.6" height="2.1" fill="#20f0ff" />
<rect x="116.5" y="656.0" width="2.6" height="2.1" fill="#c0ff40" />
<rect x="116.5" y="658.0" width="2.6" height="2.1" fill="#ffc000" />
<rect x="116.5" y="660.0" width="2.6" height="40.0" fill="#ff4000" />
<rect x="119.0" y="640.0" width="2.6" height="2.1" fill="#00b0ff" />
<rect x="119.0" y="642.0" width="2.6" height="2.1" fill="#20c0ff" />
<rect x="119.0" y="644.0" width="2.6" height="2.1" fill="#20e0ff" />
<rect x="119.0" y="646.0" width="2.6" height="2.1" fill="#00c0ff" />
<rect x="119.0" y="648.0" width="2.6" height="2.1" fill="#40a0ff" />
<rect x="119.0" y="650.0" width="2.6" height="2.1" fill="#00c0ff" />
<rect x="119.0" y="652.0" width="2.6" height="2.1" fill="#00ffff" />
<rect x="119.0" y="654.0" width="2.6" height="2.1" fill="#00ffff" />
<rect x="119.0" y="656.0" width="2.6" height="2.1" fill="#ffff00" />
<rect x="119.0" y="658.0" width="2.6" height="2.1" fill="#c0ff40" />
<rect x="119.0" y="660.0" width="2.6" height="2.1" fill="#ff9000" />
<rect x="119.0" y="661.0" width="2.6" height="39.0" fill="#e00000" />
<rect x="119.0" y="662.0" width="2.6" height="2.0" fill="#ff8000" />
<rect x="121.5" y="639.0" width="2.6" height="2.1" fill="#20c0ff" />
<rect x="121.5" y="641.0" width="2.6" height="2.1" fill="#00d0ff" />
<rect x="121.5" y="643.0" width="2.6" height="2.1" fill="#00c0ff" />
<rect x="121.5" y="645.0" width="2.6" height="2.1" fill="#40a0ff" />
<rect x="121.5" y="647.0" width="2.6" height="2.1" fill="#00c0ff" />
<rect x="121.5" y="649.0" width="2.6" height="2.1" fill="#20e0ff" />
<rect x="121.5" y="651.0" width="2.6" height="2.1" fill="#40ffd0" />
<rect x="121.5" y="653.0" width="2.6" height="2.1" fill="#40ffd0" />
<rect x="121.5" y="655.0" width="2.6" height="2.1" fill="#40ffd0" />
<rect x="121.5" y="657.0" width="2.6" height="2.1" fill="#ffff00" />
<rect x="121.5" y="659.0" width="2.6" height="2.1" fill="#c0ff40" />
<rect x="121.5" y="661.0" width="2.6" height="2.1" fill="#ff9000" />
<rect x="121.5" y="663.0" width="2.6" height="37.0" fill="#a00000" />
<rect x="124.0" y="640.0" width="2.6" height="2.1" fill="#20c0ff" />
<rect x="124.0" y="642.0" width="2.6" height="2.1" fill="#20c0ff" />
<rect x="124.0" y="644.0" width="2.6" height="2.1" fill="#40a0ff" />
<rect x="124.0" y="646.0" width="2.6" height="2.1" fill="#2090ff" />
<rect x="124.0" y="648.0" width="2.6" height="2.1" fill="#40a0ff" />
<rect x="124.0" y="650.0" width="2.6" height="2.1" fill="#40a0ff" />
<rect x="124.0" y="652.0" width="2.6" height="2.1" fill="#20f0ff" />
<rect x="124.0" y="654.0" width="2.6" height="2.1" fill="#00ffff" />
<rect x="124.0" y="656.0" width="2.6" height="2.1" fill="#80ffa0" />
<rect x="124.0" y="658.0" width="2.6" height="2.1" fill="#80ff80" />
<rect x="124.0" y="660.0" width="2.6" height="2.1" fill="#ff6000" />
<rect x="124.0" y="662.0" width="2.6" height="2.1" fill="#ff6000" />
<rect x="124.0" y="663.0" width="2.6" height="37.0" fill="#a00000" />
<rect x="124.0" y="664.0" width="2.6" height="2.0" fill="#800000" />
<rect x="126.5" y="639.0" width="2.6" height="2.1" fill="#20c0ff" />
<rect x="126.5" y="641.0" width="2.6" height="2.1" fill="#20c0ff" />
<rect x="126.5" y="643.0" width="2.6" height="2.1" fill="#2090ff" />
<rect x="126.5" y="645.0" width="2.6" height="2.1" fill="#40a0ff" />
<rect x="126.5" y="647.0" width="2.6" height="2.1" fill="#2090ff" />
<rect x="126.5" y="649.0" width="2.6" height="2.1" fill="#0080ff" />
<rect x="126.5" y="651.0" width="2.6" height="2.1" fill="#20f0ff" />
<rect x="126.5" y="653.0" width="2.6" height="2.1" fill="#00ffff" />
<rect x="126.5" y="655.0" width="2.6" height="2.1" fill="#c0ff40" />
<rect x="126.5" y="657.0" width="2.6" height="2.1" fill="#ffff00" />
<rect x="126.5" y="659.0" width="2.6" height="2.1" fill="#ff6000" />
<rect x="126.5" y="661.0" width="2.6" height="39.0" fill="#a00000" />
<rect x="126.5" y="668.0" width="2.6" height="2.0" fill="#ff4000" />
<rect x="129.0" y="639.0" width="2.6" height="2.1" fill="#00d0ff" />
<rect x="129.0" y="641.0" width="2.6" height="2.1" fill="#00d0ff" />
<rect x="129.0" y="643.0" width="2.6" height="2.1" fill="#2090ff" />
<rect x="129.0" y="645.0" width="2.6" height="2.1" fill="#2090ff" />
<rect x="129.0" y="647.0" width="2.6" height="2.1" fill="#40a0ff" />
<rect x="129.0" y="649.0" width="2.6" height="2.1" fill="#40a0ff" />
<rect x="129.0" y="651.0" width="2.6" height="2.1" fill="#40c0ff" />
<rect x="129.0" y="653.0" width="2.6" height="2.1" fill="#40ffd0" />
<rect x="129.0" y="655.0" width="2.6" height="2.1" fill="#40ffd0" />
<rect x="129.0" y="657.0" width="2.6" height="2.1" fill="#20f0ff" />
<rect x="129.0" y="659.0" width="2.6" height="2.1" fill="#ffff00" />
<rect x="129.0" y="661.0" width="2.6" height="2.1" fill="#ffff00" />
<rect x="129.0" y="663.0" width="2.6" height="2.1" fill="#ff9000" />
<rect x="129.0" y="665.0" width="2.6" height="2.1" fill="#ff9000" />
<rect x="129.0" y="666.0" width="2.6" height="34.0" fill="#ff4000" />
<rect x="129.0" y="667.0" width="2.6" height="2.0" fill="#800000" />
<rect x="131.5" y="640.0" width="2.6" height="2.1" fill="#00d0ff" />
<rect x="131.5" y="642.0" width="2.6" height="2.1" fill="#00b0ff" />
<rect x="131.5" y="644.0" width="2.6" height="2.1" fill="#0080ff" />
<rect x="131.5" y="646.0" width="2.6" height="2.1" fill="#40c0ff" />
<rect x="131.5" y="648.0" width="2.6" height="2.1" fill="#2090ff" />
<rect x="131.5" y="650.0" width="2.6" height="2.1" fill="#40a0ff" />
<rect x="131.5" y="652.0" width="2.6" height="2.1" fill="#00ffff" />
<rect x="131.5" y="654.0" width="2.6" height="2.1" fill="#20f0ff" />
<rect x="131.5" y="656.0" width="2.6" height="2.1" fill="#80ffa0" />
<rect x="131.5" y="658.0" width="2.6" height="2.1" fill="#c0ff40" />
<rect x="131.5" y="660.0" width="2.6" height="2.1" fill="#ff6000" />
<rect x="131.5" y="662.0" width="2.6" height="2.1" fill="#ff6000" />
<rect x="131.5" y="663.0" width="2.6" height="37.0" fill="#c80000" />
<rect x="134.0" y="640.0" width="2.6" height="2.1" fill="#00d0ff" />
<rect x="134.0" y="642.0" width="2.6" height="2.1" fill="#00b0ff" />
<rect x="134.0" y="644.0" width="2.6" height="2.1" fill="#00c0ff" />
<rect x="134.0" y="646.0" width="2.6" height="2.1" fill="#40c0ff" />
<rect x="134.0" y="648.0" width="2.6" height="2.1" fill="#00c0ff" />
<rect x="134.0" y="650.0" width="2.6" height="2.1" fill="#2090ff" />
<rect x="134.0" y="652.0" width="2.6" height="2.1" fill="#40c0ff" />
<rect x="134.0" y="654.0" width="2.6" height="2.1" fill="#80ffa0" />
<rect x="134.0" y="656.0" width="2.6" height="2.1" fill="#40ffd0" />
<rect x="134.0" y="658.0" width="2.6" height="2.1" fill="#80ff80" />
<rect x="134.0" y="660.0" width="2.6" height="2.1" fill="#80ff80" />
<rect x="134.0" y="662.0" width="2.6" height="2.1" fill="#ff6000" />
<rect x="134.0" y="664.0" width="2.6" height="2.1" fill="#ff6000" />
<rect x="134.0" y="665.0" width="2.6" height="35.0" fill="#c00000" />
<rect x="136.5" y="640.0" width="2.6" height="2.1" fill="#00b0ff" />
<rect x="136.5" y="642.0" width="2.6" height="2.1" fill="#00d0ff" />
<rect x="136.5" y="644.0" width="2.6" height="2.1" fill="#40a0ff" />
<rect x="136.5" y="646.0" width="2.6" height="2.1" fill="#40a0ff" />
<rect x="136.5" y="648.0" width="2.6" height="2.1" fill="#40a0ff" />
<rect x="136.5" y="650.0" width="2.6" height="2.1" fill="#0080ff" />
<rect x="136.5" y="652.0" width="2.6" height="2.1" fill="#80ffa0" />
<rect x="136.5" y="654.0" width="2.6" height="2.1" fill="#40ffd0" />
<rect x="136.5" y="656.0" width="2.6" height="2.1" fill="#80ffa0" />
<rect x="136.5" y="658.0" width="2.6" height="2.1" fill="#c0ff40" />
<rect x="136.5" y="660.0" width="2.6" height="2.1" fill="#80ff80" />
<rect x="136.5" y="662.0" width="2.6" height="2.1" fill="#ff6000" />
<rect x="136.5" y="664.0" width="2.6" height="36.0" fill="#d80000" />
<rect x="139.0" y="640.0" width="2.6" height="2.1" fill="#00d0ff" />
<rect x="139.0" y="642.0" width="2.6" height="2.1" fill="#00b0ff" />
<rect x="139.0" y="644.0" width="2.6" height="2.1" fill="#40a0ff" />
<rect x="139.0" y="646.0" width="2.6" height="2.1" fill="#40c0ff" />
<rect x="139.0" y="648.0" width="2.6" height="2.1" fill="#40c0ff" />
<rect x="139.0" y="650.0" width="2.6" height="2.1" fill="#00c0ff" />
<rect x="139.0" y="652.0" width="2.6" height="2.1" fill="#40c0ff" />
<rect x="139.0" y="654.0" width="2.6" height="2.1" fill="#80ffa0" />
<rect x="139.0" y="656.0" width="2.6" height="2.1" fill="#20f0ff" />
<rect x="139.0" y="658.0" width="2.6" height="2.1" fill="#c0ff40" />
<rect x="139.0" y="660.0" width="2.6" height="2.1" fill="#ffe000" />
<rect x="139.0" y="662.0" width="2.6" height="2.1" fill="#ffc000" />
<rect x="139.0" y="664.0" width="2.6" height="2.1" fill="#ff6000" />
<rect x="139.0" y="665.0" width="2.6" height="35.0" fill="#8c0000" />
<rect x="141.5" y="640.0" width="2.6" height="2.1" fill="#00d0ff" />
<rect x="141.5" y="642.0" width="2.6" height="2.1" fill="#00d0ff" />
<rect x="141.5" y="644.0" width="2.6" height="2.1" fill="#40a0ff" />
<rect x="141.5" y="646.0" width="2.6" height="2.1" fill="#00c0ff" />
<rect x="141.5" y="648.0" width="2.6" height="2.1" fill="#0080ff" />
<rect x="141.5" y="650.0" width="2.6" height="2.1" fill="#40a0ff" />
<rect x="141.5" y="652.0" width="2.6" height="2.1" fill="#00ffff" />
<rect x="141.5" y="654.0" width="2.6" height="2.1" fill="#20f0ff" />
<rect x="141.5" y="656.0" width="2.6" height="2.1" fill="#80ff80" />
<rect x="141.5" y="658.0" width="2.6" height="2.1" fill="#80ff80" />
<rect x="141.5" y="660.0" width="2.6" height="2.1" fill="#ff6000" />
<rect x="141.5" y="662.0" width="2.6" height="38.0" fill="#8c0000" />
<rect x="141.5" y="663.0" width="2.6" height="2.0" fill="#ff8000" />
<rect x="141.5" y="669.0" width="2.6" height="2.0" fill="#900000" />
<rect x="144.0" y="640.0" width="2.6" height="2.1" fill="#00b0ff" />
<rect x="144.0" y="642.0" width="2.6" height="2.1" fill="#00b0ff" />
<rect x="144.0" y="644.0" width="2.6" height="2.1" fill="#40c0ff" />
<rect x="144.0" y="646.0" width="2.6" height="2.1" fill="#40c0ff" />
<rect x="144.0" y="648.0" width="2.6" height="2.1" fill="#2090ff" />
<rect x="144.0" y="650.0" width="2.6" height="2.1" fill="#20e0ff" />
<rect x="144.0" y="652.0" width="2.6" height="2.1" fill="#40ffd0" />
<rect x="144.0" y="654.0" width="2.6" height="2.1" fill="#80ffa0" />
<rect x="144.0" y="656.0" width="2.6" height="2.1" fill="#20f0ff" />
<rect x="144.0" y="658.0" width="2.6" height="2.1" fill="#ffe000" />
<rect x="144.0" y="660.0" width="2.6" height="2.1" fill="#ffff00" />
<rect x="144.0" y="662.0" width="2.6" height="2.1" fill="#ffc000" />
<rect x="144.0" y="664.0" width="2.6" height="36.0" fill="#a00000" />
<rect x="144.0" y="670.0" width="2.6" height="2.0" fill="#ff8000" />
<rect x="146.5" y="640.0" width="2.6" height="2.1" fill="#20c0ff" />
<rect x="146.5" y="642.0" width="2.6" height="2.1" fill="#00b0ff" />
<rect x="146.5" y="644.0" width="2.6" height="2.1" fill="#40a0ff" />
<rect x="146.5" y="646.0" width="2.6" height="2.1" fill="#20e0ff" />
<rect x="146.5" y="648.0" width="2.6" height="2.1" fill="#0080ff" />
<rect x="146.5" y="650.0" width="2.6" height="2.1" fill="#2090ff" />
<rect x="146.5" y="652.0" width="2.6" height="2.1" fill="#00ffff" />
<rect x="146.5" y="654.0" width="2.6" height="2.1" fill="#40ffd0" />
<rect x="146.5" y="656.0" width="2.6" height="2.1" fill="#c0ff40" />
<rect x="146.5" y="658.0" width="2.6" height="2.1" fill="#ffff00" />
<rect x="146.5" y="660.0" width="2.6" height="2.1" fill="#ffc000" />
<rect x="146.5" y="662.0" width="2.6" height="38.0" fill="#ff2000" />
<rect x="146.5" y="667.0" width="2.6" height="2.0" fill="#800000" />
<rect x="149.0" y="640.0" width="2.6" height="2.1" fill="#20c0ff" />
<rect x="149.0" y="642.0" width="2.6" height="2.1" fill="#20c0ff" />
<rect x="149.0" y="644.0" width="2.6" height="2.1" fill="#20e0ff" />
<rect x="149.0" y="646.0" width="2.6" height="2.1" fill="#40a0ff" />
<rect x="149.0" y="648.0" width="2.6" height="2.1" fill="#00c0ff" />
<rect x="149.0" y="650.0" width="2.6" height="2.1" fill="#40c0ff" />
<rect x="149.0" y="652.0" width="2.6" height="2.1" fill="#80ffa0" />
<rect x="149.0" y="654.0" width="2.6" height="2.1" fill="#00ffff" />
<rect x="149.0" y="656.0" width="2.6" height="2.1" fill="#20f0ff" />
<rect x="149.0" y="658.0" width="2.6" height="2.1" fill="#80ff80" />
<rect x="149.0" y="660.0" width="2.6" height="2.1" fill="#ffc000" />
<rect x="149.0" y="662.0" width="2.6" height="2.1" fill="#ffc000" />
<rect x="149.0" y="663.0" width="2.6" height="37.0" fill="#c80000" />
<rect x="149.0" y="669.0" width="2.6" height="2.0" fill="#800000" />
<rect x="151.5" y="639.0" width="2.6" height="2.1" fill="#00b0ff" />
<rect x="151.5" y="641.0" width="2.6" height="2.1" fill="#00b0ff" />
<rect x="151.5" y="643.0" width="2.6" height="2.1" fill="#40c0ff" />
<rect x="151.5" y="645.0" width="2.6" height="2.1" fill="#2090ff" />
<rect x="151.5" y="647.0" width="2.6" height="2.1" fill="#0080ff" />
<rect x="151.5" y="649.0" width="2.6" height="2.1" fill="#20e0ff" />
<rect x="151.5" y="651.0" width="2.6" height="2.1" fill="#80ffa0" />
<rect x="151.5" y="653.0" width="2.6" height="2.1" fill="#20f0ff" />
<rect x="151.5" y="655.0" width="2.6" height="2.1" fill="#ffff00" />
<rect x="151.5" y="657.0" width="2.6" height="2.1" fill="#80ff80" />
<rect x="151.5" y="659.0" width="2.6" height="2.1" fill="#ff9000" />
<rect x="151.5" y="660.0" width="2.6" height="40.0" fill="#c80000" />
<rect x="151.5" y="664.0" width="2.6" height="2.0" fill="#ff4000" />
<rect x="154.0" y="639.0" width="2.6" height="2.1" fill="#20c0ff" />
<rect x="154.0" y="641.0" width="2.6" height="2.1" fill="#00b0ff" />
<rect x="154.0" y="643.0" width="2.6" height="2.1" fill="#20e0ff" />
<rect x="154.0" y="645.0" width="2.6" height="2.1" fill="#40a0ff" />
<rect x="154.0" y="647.0" width="2.6" height="2.1" fill="#40c0ff" />
<rect x="154.0" y="649.0" width="2.6" height="2.1" fill="#0080ff" />
<rect x="154.0" y="651.0" width="2.6" height="2.1" fill="#20f0ff" />
<rect x="154.0" y="653.0" width="2.6" height="2.1" fill="#40ffd0" />
<rect x="154.0" y="655.0" width="2.6" height="2.1" fill="#20f0ff" />
<rect x="154.0" y="657.0" width="2.6" height="2.1" fill="#c0ff40" />
<rect x="154.0" y="659.0" width="2.6" height="2.1" fill="#80ff80" />
<rect x="154.0" y="661.0" width="2.6" height="2.1" fill="#ff6000" />
<rect x="154.0" y="663.0" width="2.6" height="37.0" fill="#d80000" />
<rect x="156.5" y="640.0" width="2.6" height="2.1" fill="#20c0ff" />
<rect x="156.5" y="642.0" width="2.6" height="2.1" fill="#00d0ff" />
<rect x="156.5" y="644.0" width="2.6" height="2.1" fill="#40c0ff" />
<rect x="156.5" y="646.0" width="2.6" height="2.1" fill="#00c0ff" />
<rect x="156.5" y="648.0" width="2.6" height="2.1" fill="#00c0ff" />
<rect x="156.5" y="650.0" width="2.6" height="2.1" fill="#40ffd0" />
<rect x="156.5" y="652.0" width="2.6" height="2.1" fill="#80ffa0" />
<rect x="156.5" y="654.0" width="2.6" height="2.1" fill="#c0ff40" />
<rect x="156.5" y="656.0" width="2.6" height="2.1" fill="#ffe000" />
<rect x="156.5" y="658.0" width="2.6" height="2.1" fill="#ff9000" />
<rect x="156.5" y="659.0" width="2.6" height="41.0" fill="#b40000" />
<rect x="159.0" y="639.0" width="2.6" height="2.1" fill="#00b0ff" />
<rect x="159.0" y="641.0" width="2.6" height="2.1" fill="#20c0ff" />
<rect x="159.0" y="643.0" width="2.6" height="2.1" fill="#00c0ff" />
<rect x="159.0" y="645.0" width="2.6" height="2.1" fill="#2090ff" />
<rect x="159.0" y="647.0" width="2.6" height="2.1" fill="#0080ff" />
<rect x="159.0" y="649.0" width="2.6" height="2.1" fill="#00c0ff" />
<rect x="159.0" y="651.0" width="2.6" height="2.1" fill="#80ffa0" />
<rect x="159.0" y="653.0" width="2.6" height="2.1" fill="#20f0ff" />
<rect x="159.0" y="655.0" width="2.6" height="2.1" fill="#ffff00" />
<rect x="159.0" y="657.0" width="2.6" height="2.1" fill="#ffe000" />
<rect x="159.0" y="659.0" width="2.6" height="2.1" fill="#ffc000" />
<rect x="159.0" y="661.0" width="2.6" height="39.0" fill="#e00000" />
<rect x="159.0" y="666.0" width="2.6" height="2.0" fill="#900000" />
<rect x="161.5" y="640.0" width="2.6" height="2.1" fill="#00d0ff" />
<rect x="161.5" y="642.0" width="2.6" height="2.1" fill="#00d0ff" />
<rect x="161.5" y="644.0" width="2.6" height="2.1" fill="#20e0ff" />
<rect x="161.5" y="646.0" width="2.6" height="2.1" fill="#00c0ff" />
<rect x="161.5" y="648.0" width="2.6" height="2.1" fill="#2090ff" />
<rect x="161.5" y="650.0" width="2.6" height="2.1" fill="#40ffd0" />
<rect x="161.5" y="652.0" width="2.6" height="2.1" fill="#80ffa0" />
<rect x="161.5" y="654.0" width="2.6" height="2.1" fill="#80ff80" />
<rect x="161.5" y="656.0" width="2.6" height="2.1" fill="#ff6000" />
<rect x="161.5" y="658.0" width="2.6" height="42.0" fill="#a00000" />
<rect x="161.5" y="660.0" width="2.6" height="2.0" fill="#ff8000" />
<rect x="164.0" y="640.0" width="2.6" height="2.1" fill="#20c0ff" />
<rect x="164.0" y="642.0" width="2.6" height="2.1" fill="#20c0ff" />
<rect x="164.0" y="644.0" width="2.6" height="2.1" fill="#20e0ff" />
<rect x="164.0" y="646.0" width="2.6" height="2.1" fill="#2090ff" />
<rect x="164.0" y="648.0" width="2.6" height="2.1" fill="#00c0ff" />
<rect x="164.0" y="650.0" width="2.6" height="2.1" fill="#80ffa0" />
<rect x="164.0" y="652.0" width="2.6" height="2.1" fill="#20f0ff" />
<rect x="164.0" y="654.0" width="2.6" height="2.1" fill="#80ff80" />
<rect x="164.0" y="656.0" width="2.6" height="2.1" fill="#ffe000" />
<rect x="164.0" y="658.0" width="2.6" height="2.1" fill="#ff6000" />
<rect x="164.0" y="659.0" width="2.6" height="41.0" fill="#a00000" />
<rect x="164.0" y="659.0" width="2.6" height="2.0" fill="#800000" />
<rect x="166.5" y="640.0" width="2.6" height="2.1" fill="#20c0ff" />
<rect x="166.5" y="642.0" width="2.6" height="2.1" fill="#00d0ff" />
<rect x="166.5" y="644.0" width="2.6" height="2.1" fill="#00c0ff" />
<rect x="166.5" y="646.0" width="2.6" height="2.1" fill="#40a0ff" />
<rect x="166.5" y="648.0" width="2.6" height="2.1" fill="#2090ff" />
<rect x="166.5" y="650.0" width="2.6" height="2.1" fill="#00ffff" />
<rect x="166.5" y="652.0" width="2.6" height="2.1" fill="#80ffa0" />
<rect x="166.5" y="654.0" width="2.6" height="2.1" fill="#c0ff40" />
<rect x="166.5" y="656.0" width="2.6" height="2.1" fill="#ffc000" />
<rect x="166.5" y="657.0" width="2.6" height="43.0" fill="#a00000" />
<rect x="169.0" y="639.0" width="2.6" height="2.1" fill="#00d0ff" />
<rect x="169.0" y="641.0" width="2.6" height="2.1" fill="#00d0ff" />
<rect x="169.0" y="643.0" width="2.6" height="2.1" fill="#40c0ff" />
<rect x="169.0" y="645.0" width="2.6" height="2.1" fill="#00c0ff" />
<rect x="169.0" y="647.0" width="2.6" height="2.1" fill="#20e0ff" />
<rect x="169.0" y="649.0" width="2.6" height="2.1" fill="#80ffa0" />
<rect x="169.0" y="651.0" width="2.6" height="2.1" fill="#80ffa0" />
<rect x="169.0" y="653.0" width="2.6" height="2.1" fill="#20f0ff" />
<rect x="169.0" y="655.0" width="2.6" height="2.1" fill="#ffe000" />
<rect x="169.0" y="657.0" width="2.6" height="2.1" fill="#ff9000" />
<rect x="169.0" y="659.0" width="2.6" height="41.0" fill="#a00000" />
<rect x="171.5" y="639.0" width="2.6" height="2.1" fill="#00b0ff" />
<rect x="171.5" y="641.0" width="2.6" height="2.1" fill="#00b0ff" />
<rect x="171.5" y="643.0" width="2.6" height="2.1" fill="#00c0ff" />
<rect x="171.5" y="645.0" width="2.6" height="2.1" fill="#40c0ff" />
<rect x="171.5" y="647.0" width="2.6" height="2.1" fill="#2090ff" />
<rect x="171.5" y="649.0" width="2.6" height="2.1" fill="#20e0ff" />
<rect x="171.5" y="651.0" width="2.6" height="2.1" fill="#00ffff" />
<rect x="171.5" y="653.0" width="2.6" height="2.1" fill="#00ffff" />
<rect x="171.5" y="655.0" width="2.6" height="2.1" fill="#ffff00" />
<rect x="171.5" y="657.0" width="2.6" height="2.1" fill="#80ff80" />
<rect x="171.5" y="659.0" width="2.6" height="2.1" fill="#ffc000" />
<rect x="171.5" y="660.0" width="2.6" height="40.0" fill="#b40000" />
<rect x="171.5" y="662.0" width="2.6" height="2.0" fill="#ff4000" />
<rect x="174.0" y="639.0" width="2.6" height="2.1" fill="#00b0ff" />
<rect x="174.0" y="641.0" width="2.6" height="2.1" fill="#20c0ff" />
<rect x="174.0" y="643.0" width="2.6" height="2.1" fill="#2090ff" />
<rect x="174.0" y="645.0" width="2.6" height="2.1" fill="#00c0ff" />
<rect x="174.0" y="647.0" width="2.6" height="2.1" fill="#2090ff" />
<rect x="174.0" y="649.0" width="2.6" height="2.1" fill="#40c0ff" />
<rect x="174.0" y="651.0" width="2.6" height="2.1" fill="#80ffa0" />
<rect x="174.0" y="653.0" width="2.6" height="2.1" fill="#20f0ff" />
<rect x="174.0" y="655.0" width="2.6" height="2.1" fill="#ffff00" />
<rect x="174.0" y="657.0" width="2.6" height="2.1" fill="#80ff80" />
<rect x="174.0" y="659.0" width="2.6" height="2.1" fill="#ff6000" />
<rect x="174.0" y="660.0" width="2.6" height="40.0" fill="#c00000" />
<rect x="176.5" y="639.0" width="2.6" height="2.1" fill="#20c0ff" />
<rect x="176.5" y="641.0" width="2.6" height="2.1" fill="#00b0ff" />
<rect x="176.5" y="643.0" width="2.6" height="2.1" fill="#40a0ff" />
<rect x="176.5" y="645.0" width="2.6" height="2.1" fill="#00c0ff" />
<rect x="176.5" y="647.0" width="2.6" height="2.1" fill="#2090ff" />
<rect x="176.5" y="649.0" width="2.6" height="2.1" fill="#20f0ff" />
<rect x="176.5" y="651.0" width="2.6" height="2.1" fill="#00ffff" />
<rect x="176.5" y="653.0" width="2.6" height="2.1" fill="#ffe000" />
<rect x="176.5" y="655.0" width="2.6" height="2.1" fill="#c0ff40" />
<rect x="176.5" y="657.0" width="2.6" height="2.1" fill="#ff6000" />
<rect x="176.5" y="658.0" width="2.6" height="42.0" fill="#f00000" />
<rect x="176.5" y="663.0" width="2.6" height="2.0" fill="#ff4000" />
<rect x="176.5" y="660.0" width="2.6" height="2.0" fill="#900000" />
<rect x="179.0" y="639.0" width="2.6" height="2.1" fill="#00d0ff" />
<rect x="179.0" y="641.0" width="2.6" height="2.1" fill="#0080ff" />
<rect x="179.0" y="643.0" width="2.6" height="2.1" fill="#0080ff" />
<rect x="179.0" y="645.0" width="2.6" height="2.1" fill="#0080ff" />
<rect x="179.0" y="647.0" width="2.6" height="2.1" fill="#00ffff" />
<rect x="179.0" y="649.0" width="2.6" height="2.1" fill="#00ffff" />
<rect x="179.0" y="651.0" width="2.6" height="2.1" fill="#80ff80" />
<rect x="179.0" y="653.0" width="2.6" height="2.1" fill="#ff9000" />
<rect x="179.0" y="655.0" width="2.6" height="45.0" fill="#e00000" />
<rect x="179.0" y="660.0" width="2.6" height="2.0" fill="#ff8000" />
<rect x="181.5" y="639.0" width="2.6" height="2.1" fill="#00b0ff" />
<rect x="181.5" y="641.0" width="2.6" height="2.1" fill="#00d0ff" />
<rect x="181.5" y="643.0" width="2.6" height="2.1" fill="#0080ff" />
<rect x="181.5" y="645.0" width="2.6" height="2.1" fill="#0080ff" />
<rect x="181.5" y="647.0" width="2.6" height="2.1" fill="#40c0ff" />
<rect x="181.5" y="649.0" width="2.6" height="2.1" fill="#00ffff" />
<rect x="181.5" y="651.0" width="2.6" height="2.1" fill="#40ffd0" />
<rect x="181.5" y="653.0" width="2.6" height="2.1" fill="#ffff00" />
<rect x="181.5" y="655.0" width="2.6" height="2.1" fill="#c0ff40" />
<rect x="181.5" y="657.0" width="2.6" height="2.1" fill="#ff6000" />
<rect x="181.5" y="658.0" width="2.6" height="42.0" fill="#c00000" />
<rect x="181.5" y="662.0" width="2.6" height="2.0" fill="#800000" />
<rect x="184.0" y="639.0" width="2.6" height="2.1" fill="#20c0ff" />
<rect x="184.0" y="641.0" width="2.6" height="2.1" fill="#20c0ff" />
<rect x="184.0" y="643.0" width="2.6" height="2.1" fill="#20e0ff" />
<rect x="184.0" y="645.0" width="2.6" height="2.1" fill="#40a0ff" />
<rect x="184.0" y="647.0" width="2.6" height="2.1" fill="#40c0ff" />
<rect x="184.0" y="649.0" width="2.6" height="2.1" fill="#00ffff" />
<rect x="184.0" y="651.0" width="2.6" height="2.1" fill="#20f0ff" />
<rect x="184.0" y="653.0" width="2.6" height="2.1" fill="#ffe000" />
<rect x="184.0" y="655.0" width="2.6" height="2.1" fill="#ff6000" />
<rect x="184.0" y="657.0" width="2.6" height="43.0" fill="#c00000" />
<rect x="184.0" y="664.0" width="2.6" height="2.0" fill="#ff4000" />
<rect x="186.5" y="640.0" width="2.6" height="2.1" fill="#20c0ff" />
<rect x="186.5" y="642.0" width="2.6" height="2.1" fill="#00d0ff" />
<rect x="186.5" y="644.0" width="2.6" height="2.1" fill="#40a0ff" />
<rect x="186.5" y="646.0" width="2.6" height="2.1" fill="#00c0ff" />
<rect x="186.5" y="648.0" width="2.6" height="2.1" fill="#0080ff" />
<rect x="186.5" y="650.0" width="2.6" height="2.1" fill="#40ffd0" />
<rect x="186.5" y="652.0" width="2.6" height="2.1" fill="#00ffff" />
<rect x="186.5" y="654.0" width="2.6" height="2.1" fill="#80ff80" />
<rect x="186.5" y="656.0" width="2.6" height="2.1" fill="#ffff00" />
<rect x="186.5" y="658.0" width="2.6" height="2.1" fill="#ffc000" />
<rect x="186.5" y="659.0" width="2.6" height="41.0" fill="#b40000" />
<rect x="186.5" y="659.0" width="2.6" height="2.0" fill="#900000" />
<rect x="189.0" y="639.0" width="2.6" height="2.1" fill="#00d0ff" />
<rect x="189.0" y="641.0" width="2.6" height="2.1" fill="#00b0ff" />
<rect x="189.0" y="643.0" width="2.6" height="2.1" fill="#0080ff" />
<rect x="189.0" y="645.0" width="2.6" height="2.1" fill="#40c0ff" />
<rect x="189.0" y="647.0" width="2.6" height="2.1" fill="#00c0ff" />
<rect x="189.0" y="649.0" width="2.6" height="2.1" fill="#00ffff" />
<rect x="189.0" y="651.0" width="2.6" height="2.1" fill="#00ffff" />
<rect x="189.0" y="653.0" width="2.6" height="2.1" fill="#00ffff" />
<rect x="189.0" y="655.0" width="2.6" height="2.1" fill="#ffe000" />
<rect x="189.0" y="657.0" width="2.6" height="2.1" fill="#ff9000" />
<rect x="189.0" y="659.0" width="2.6" height="41.0" fill="#d80000" />
<rect x="189.0" y="663.0" width="2.6" height="2.0" fill="#ff8000" />
<rect x="191.5" y="639.0" width="2.6" height="2.1" fill="#00d0ff" />
<rect x="191.5" y="641.0" width="2.6" height="2.1" fill="#00c0ff" />
<rect x="191.5" y="643.0" width="2.6" height="2.1" fill="#2090ff" />
<rect x="191.5" y="645.0" width="2.6" height="2.1" fill="#2090ff" />
<rect x="191.5" y="647.0" width="2.6" height="2.1" fill="#40ffd0" />
<rect x="191.5" y="649.0" width="2.6" height="2.1" fill="#20f0ff" />
<rect x="191.5" y="651.0" width="2.6" height="2.1" fill="#80ff80" />
<rect x="191.5" y="653.0" width="2.6" height="2.1" fill="#ff9000" />
<rect x="191.5" y="655.0" width="2.6" height="45.0" fill="#e00000" />
<rect x="191.5" y="657.0" width="2.6" height="2.0" fill="#ff8000" />
<rect x="194.0" y="639.0" width="2.6" height="2.1" fill="#00b0ff" />
<rect x="194.0" y="641.0" width="2.6" height="2.1" fill="#00c0ff" />
<rect x="194.0" y="643.0" width="2.6" height="2.1" fill="#00c0ff" />
<rect x="194.0" y="645.0" width="2.6" height="2.1" fill="#20e0ff" />
<rect x="194.0" y="647.0" width="2.6" height="2.1" fill="#40ffd0" />
<rect x="194.0" y="649.0" width="2.6" height="2.1" fill="#00ffff" />
<rect x="194.0" y="651.0" width="2.6" height="2.1" fill="#ffe000" />
<rect x="194.0" y="653.0" width="2.6" height="2.1" fill="#ff6000" />
<rect x="194.0" y="654.0" width="2.6" height="46.0" fill="#d80000" />
<rect x="194.0" y="658.0" width="2.6" height="2.0" fill="#800000" />
<rect x="196.5" y="638.0" width="2.6" height="2.1" fill="#20c0ff" />
<rect x="196.5" y="640.0" width="2.6" height="2.1" fill="#20e0ff" />
<rect x="196.5" y="642.0" width="2.6" height="2.1" fill="#40c0ff" />
<rect x="196.5" y="644.0" width="2.6" height="2.1" fill="#40c0ff" />
<rect x="196.5" y="646.0" width="2.6" height="2.1" fill="#80ffa0" />
<rect x="196.5" y="648.0" width="2.6" height="2.1" fill="#ffff00" />
<rect x="196.5" y="650.0" width="2.6" height="2.1" fill="#ffc000" />
<rect x="196.5" y="651.0" width="2.6" height="49.0" fill="#a00000" />
<rect x="196.5" y="652.0" width="2.6" height="2.0" fill="#ff4000" />
<rect x="199.0" y="639.0" width="2.6" height="2.1" fill="#00b0ff" />
<rect x="199.0" y="641.0" width="2.6" height="2.1" fill="#20e0ff" />
<rect x="199.0" y="643.0" width="2.6" height="2.1" fill="#2090ff" />
<rect x="199.0" y="645.0" width="2.6" height="2.1" fill="#40ffd0" />
<rect x="199.0" y="647.0" width="2.6" height="2.1" fill="#ff6000" />
<rect x="199.0" y="648.0" width="2.6" height="52.0" fill="#f00000" />
<rect x="201.5" y="638.0" width="2.6" height="2.1" fill="#00d0ff" />
<rect x="201.5" y="640.0" width="2.6" height="2.1" fill="#20e0ff" />
<rect x="201.5" y="642.0" width="2.6" height="2.1" fill="#40c0ff" />
<rect x="201.5" y="644.0" width="2.6" height="2.1" fill="#40ffd0" />
<rect x="201.5" y="646.0" width="2.6" height="2.1" fill="#00ffff" />
<rect x="201.5" y="648.0" width="2.6" height="2.1" fill="#ffff00" />
<rect x="201.5" y="650.0" width="2.6" height="50.0" fill="#b40000" />
<rect x="204.0" y="637.0" width="2.6" height="2.1" fill="#00b0ff" />
<rect x="204.0" y="639.0" width="2.6" height="2.1" fill="#40a0ff" />
<rect x="204.0" y="641.0" width="2.6" height="2.1" fill="#20e0ff" />
<rect x="204.0" y="643.0" width="2.6" height="2.1" fill="#80ffa0" />
<rect x="204.0" y="645.0" width="2.6" height="2.1" fill="#80ffa0" />
<rect x="204.0" y="647.0" width="2.6" height="2.1" fill="#c0ff40" />
<rect x="204.0" y="649.0" width="2.6" height="51.0" fill="#ff2000" />
<rect x="204.0" y="656.0" width="2.6" height="2.0" fill="#ff4000" />
<rect x="206.5" y="637.0" width="2.6" height="2.1" fill="#00b0ff" />
<rect x="206.5" y="639.0" width="2.6" height="2.1" fill="#40c0ff" />
<rect x="206.5" y="641.0" width="2.6" height="2.1" fill="#40c0ff" />
<rect x="206.5" y="643.0" width="2.6" height="2.1" fill="#80ffa0" />
<rect x="206.5" y="645.0" width="2.6" height="2.1" fill="#80ffa0" />
<rect x="206.5" y="647.0" width="2.6" height="2.1" fill="#ffff00" />
<rect x="206.5" y="649.0" width="2.6" height="51.0" fill="#a00000" />
<rect x="209.0" y="637.0" width="2.6" height="2.1" fill="#00b0ff" />
<rect x="209.0" y="639.0" width="2.6" height="2.1" fill="#2090ff" />
<rect x="209.0" y="641.0" width="2.6" height="2.1" fill="#20e0ff" />
<rect x="209.0" y="643.0" width="2.6" height="2.1" fill="#40ffd0" />
<rect x="209.0" y="645.0" width="2.6" height="2.1" fill="#ff6000" />
<rect x="209.0" y="646.0" width="2.6" height="54.0" fill="#ff4000" />
<rect x="209.0" y="647.0" width="2.6" height="2.0" fill="#ff4000" />
<rect x="211.5" y="636.0" width="2.6" height="2.1" fill="#20c0ff" />
<rect x="211.5" y="638.0" width="2.6" height="2.1" fill="#2090ff" />
<rect x="211.5" y="640.0" width="2.6" height="2.1" fill="#80ffa0" />
<rect x="211.5" y="642.0" width="2.6" height="2.1" fill="#ffe000" />
<rect x="211.5" y="644.0" width="2.6" height="56.0" fill="#8c0000" />
<rect x="211.5" y="644.0" width="2.6" height="2.0" fill="#900000" />
<rect x="214.0" y="636.0" width="2.6" height="2.1" fill="#00b0ff" />
<rect x="214.0" y="638.0" width="2.6" height="2.1" fill="#40a0ff" />
<rect x="214.0" y="640.0" width="2.6" height="2.1" fill="#0080ff" />
<rect x="214.0" y="642.0" width="2.6" height="2.1" fill="#40a0ff" />
<rect x="214.0" y="644.0" width="2.6" height="2.1" fill="#20f0ff" />
<rect x="214.0" y="646.0" width="2.6" height="2.1" fill="#00ffff" />
<rect x="214.0" y="648.0" width="2.6" height="2.1" fill="#80ff80" />
<rect x="214.0" y="650.0" width="2.6" height="50.0" fill="#8c0000" />
<rect x="214.0" y="650.0" width="2.6" height="2.0" fill="#800000" />
<rect x="216.5" y="637.0" width="2.6" height="2.1" fill="#00b0ff" />
<rect x="216.5" y="639.0" width="2.6" height="2.1" fill="#40c0ff" />
<rect x="216.5" y="641.0" width="2.6" height="2.1" fill="#2090ff" />
<rect x="216.5" y="643.0" width="2.6" height="2.1" fill="#20f0ff" />
<rect x="216.5" y="645.0" width="2.6" height="2.1" fill="#80ff80" />
<rect x="216.5" y="647.0" width="2.6" height="2.1" fill="#ffc000" />
<rect x="216.5" y="648.0" width="2.6" height="52.0" fill="#ff4000" />
<rect x="216.5" y="651.0" width="2.6" height="2.0" fill="#800000" />
<rect x="216.5" y="655.0" width="2.6" height="2.0" fill="#ff4000" />
<rect x="219.0" y="636.0" width="2.6" height="2.1" fill="#00b0ff" />
<rect x="219.0" y="638.0" width="2.6" height="2.1" fill="#0080ff" />
<rect x="219.0" y="640.0" width="2.6" height="2.1" fill="#00ffff" />
<rect x="219.0" y="642.0" width="2.6" height="2.1" fill="#ffe000" />
<rect x="219.0" y="644.0" width="2.6" height="56.0" fill="#ff4000" />
<rect x="219.0" y="647.0" width="2.6" height="2.0" fill="#800000" />
<rect x="219.0" y="648.0" width="2.6" height="2.0" fill="#ff8000" />
<rect x="221.5" y="636.0" width="2.6" height="2.1" fill="#00b0ff" />
<rect x="221.5" y="638.0" width="2.6" height="2.1" fill="#2090ff" />
<rect x="221.5" y="640.0" width="2.6" height="2.1" fill="#00ffff" />
<rect x="221.5" y="642.0" width="2.6" height="2.1" fill="#c0ff40" />
<rect x="221.5" y="644.0" width="2.6" height="56.0" fill="#8c0000" />
<rect x="221.5" y="647.0" width="2.6" height="2.0" fill="#900000" />
<rect x="224.0" y="637.0" width="2.6" height="2.1" fill="#20c0ff" />
<rect x="224.0" y="639.0" width="2.6" height="2.1" fill="#2090ff" />
<rect x="224.0" y="641.0" width="2.6" height="2.1" fill="#2090ff" />
<rect x="224.0" y="643.0" width="2.6" height="2.1" fill="#00ffff" />
<rect x="224.0" y="645.0" width="2.6" height="2.1" fill="#c0ff40" />
<rect x="224.0" y="647.0" width="2.6" height="2.1" fill="#ff6000" />
<rect x="224.0" y="648.0" width="2.6" height="52.0" fill="#ff4000" />
<rect x="224.0" y="654.0" width="2.6" height="2.0" fill="#800000" />
<rect x="224.0" y="652.0" width="2.6" height="2.0" fill="#900000" />
<rect x="226.5" y="636.0" width="2.6" height="2.1" fill="#00d0ff" />
<rect x="226.5" y="638.0" width="2.6" height="2.1" fill="#2090ff" />
<rect x="226.5" y="640.0" width="2.6" height="2.1" fill="#00c0ff" />
<rect x="226.5" y="642.0" width="2.6" height="2.1" fill="#80ffa0" />
<rect x="226.5" y="644.0" width="2.6" height="2.1" fill="#ff9000" />
<rect x="226.5" y="645.0" width="2.6" height="55.0" fill="#a00000" />
<rect x="229.0" y="637.0" width="2.6" height="2.1" fill="#00d0ff" />
<rect x="229.0" y="639.0" width="2.6" height="2.1" fill="#00c0ff" />
<rect x="229.0" y="641.0" width="2.6" height="2.1" fill="#40a0ff" />
<rect x="229.0" y="643.0" width="2.6" height="2.1" fill="#2090ff" />
<rect x="229.0" y="645.0" width="2.6" height="2.1" fill="#80ffa0" />
<rect x="229.0" y="647.0" width="2.6" height="2.1" fill="#c0ff40" />
<rect x="229.0" y="649.0" width="2.6" height="2.1" fill="#ffc000" />
<rect x="229.0" y="650.0" width="2.6" height="50.0" fill="#b40000" />
<rect x="231.5" y="637.0" width="2.6" height="2.1" fill="#00b0ff" />
<rect x="231.5" y="639.0" width="2.6" height="2.1" fill="#00c0ff" />
<rect x="231.5" y="641.0" width="2.6" height="2.1" fill="#00ffff" />
<rect x="231.5" y="643.0" width="2.6" height="2.1" fill="#ffff00" />
<rect x="231.5" y="645.0" width="2.6" height="55.0" fill="#a00000" />
<rect x="231.5" y="650.0" width="2.6" height="2.0" fill="#900000" />
<rect x="234.0" y="636.0" width="2.6" height="2.1" fill="#00b0ff" />
<rect x="234.0" y="638.0" width="2.6" height="2.1" fill="#40a0ff" />
<rect x="234.0" y="640.0" width="2.6" height="2.1" fill="#0080ff" />
<rect x="234.0" y="642.0" width="2.6" height="2.1" fill="#00ffff" />
<rect x="234.0" y="644.0" width="2.6" height="2.1" fill="#ffff00" />
<rect x="234.0" y="646.0" width="2.6" height="2.1" fill="#ffc000" />
<rect x="234.0" y="647.0" width="2.6" height="53.0" fill="#f00000" />
<rect x="236.5" y="636.0" width="2.6" height="2.1" fill="#20c0ff" />
<rect x="236.5" y="638.0" width="2.6" height="2.1" fill="#00c0ff" />
<rect x="236.5" y="640.0" width="2.6" height="2.1" fill="#80ffa0" />
<rect x="236.5" y="642.0" width="2.6" height="2.1" fill="#c0ff40" />
<rect x="236.5" y="644.0" width="2.6" height="56.0" fill="#a00000" />
<rect x="239.0" y="636.0" width="2.6" height="2.1" fill="#00b0ff" />
<rect x="239.0" y="638.0" width="2.6" height="2.1" fill="#00c0ff" />
<rect x="239.0" y="640.0" width="2.6" height="2.1" fill="#00c0ff" />
<rect x="239.0" y="642.0" width="2.6" height="2.1" fill="#00ffff" />
<rect x="239.0" y="644.0" width="2.6" height="2.1" fill="#c0ff40" />
<rect x="239.0" y="646.0" width="2.6" height="54.0" fill="#b40000" />
<rect x="241.5" y="637.0" width="2.6" height="2.1" fill="#20c0ff" />
<rect x="241.5" y="639.0" width="2.6" height="2.1" fill="#2090ff" />
<rect x="241.5" y="641.0" width="2.6" height="2.1" fill="#40c0ff" />
<rect x="241.5" y="643.0" width="2.6" height="2.1" fill="#80ffa0" />
<rect x="241.5" y="645.0" width="2.6" height="2.1" fill="#ffe000" />
<rect x="241.5" y="647.0" width="2.6" height="2.1" fill="#ff9000" />
<rect x="241.5" y="648.0" width="2.6" height="52.0" fill="#a00000" />
<rect x="244.0" y="636.0" width="2.6" height="2.1" fill="#20c0ff" />
<rect x="244.0" y="638.0" width="2.6" height="2.1" fill="#20e0ff" />
<rect x="244.0" y="640.0" width="2.6" height="2.1" fill="#40c0ff" />
<rect x="244.0" y="642.0" width="2.6" height="2.1" fill="#20f0ff" />
<rect x="244.0" y="644.0" width="2.6" height="2.1" fill="#80ff80" />
<rect x="244.0" y="646.0" width="2.6" height="54.0" fill="#a00000" />
<rect x="244.0" y="652.0" width="2.6" height="2.0" fill="#900000" />
<rect x="246.5" y="638.0" width="2.6" height="2.1" fill="#20c0ff" />
<rect x="246.5" y="640.0" width="2.6" height="2.1" fill="#2090ff" />
<rect x="246.5" y="642.0" width="2.6" height="2.1" fill="#20e0ff" />
<rect x="246.5" y="644.0" width="2.6" height="2.1" fill="#20f0ff" />
<rect x="246.5" y="646.0" width="2.6" height="2.1" fill="#ffc000" />
<rect x="246.5" y="647.0" width="2.6" height="53.0" fill="#b40000" />
<rect x="246.5" y="650.0" width="2.6" height="2.0" fill="#800000" />
<rect x="249.0" y="638.0" width="2.6" height="2.1" fill="#00d0ff" />
<rect x="249.0" y="640.0" width="2.6" height="2.1" fill="#0080ff" />
<rect x="249.0" y="642.0" width="2.6" height="2.1" fill="#2090ff" />
<rect x="249.0" y="644.0" width="2.6" height="2.1" fill="#40a0ff" />
<rect x="249.0" y="646.0" width="2.6" height="2.1" fill="#00ffff" />
<rect x="249.0" y="648.0" width="2.6" height="2.1" fill="#c0ff40" />
<rect x="249.0" y="650.0" width="2.6" height="2.1" fill="#ff9000" />
<rect x="249.0" y="651.0" width="2.6" height="49.0" fill="#ff4000" />
<rect x="249.0" y="655.0" width="2.6" height="2.0" fill="#ff4000" />
<rect x="251.5" y="637.0" width="2.6" height="2.1" fill="#00b0ff" />
<rect x="251.5" y="639.0" width="2.6" height="2.1" fill="#20e0ff" />
<rect x="251.5" y="641.0" width="2.6" height="2.1" fill="#00c0ff" />
<rect x="251.5" y="643.0" width="2.6" height="2.1" fill="#40c0ff" />
<rect x="251.5" y="645.0" width="2.6" height="2.1" fill="#00ffff" />
<rect x="251.5" y="647.0" width="2.6" height="2.1" fill="#ffff00" />
<rect x="251.5" y="649.0" width="2.6" height="2.1" fill="#ff9000" />
<rect x="251.5" y="650.0" width="2.6" height="50.0" fill="#a00000" />
<rect x="251.5" y="654.0" width="2.6" height="2.0" fill="#ff4000" />
<rect x="254.0" y="637.0" width="2.6" height="2.1" fill="#00b0ff" />
<rect x="254.0" y="639.0" width="2.6" height="2.1" fill="#40a0ff" />
<rect x="254.0" y="641.0" width="2.6" height="2.1" fill="#00c0ff" />
<rect x="254.0" y="643.0" width="2.6" height="2.1" fill="#40c0ff" />
<rect x="254.0" y="645.0" width="2.6" height="2.1" fill="#20f0ff" />
<rect x="254.0" y="647.0" width="2.6" height="2.1" fill="#20f0ff" />
<rect x="254.0" y="649.0" width="2.6" height="2.1" fill="#ffe000" />
<rect x="254.0" y="651.0" width="2.6" height="49.0" fill="#a00000" />
<rect x="254.0" y="654.0" width="2.6" height="2.0" fill="#ff4000" />
<rect x="256.5" y="637.0" width="2.6" height="2.1" fill="#00b0ff" />
<rect x="256.5" y="639.0" width="2.6" height="2.1" fill="#40a0ff" />
<rect x="256.5" y="641.0" width="2.6" height="2.1" fill="#40c0ff" />
<rect x="256.5" y="643.0" width="2.6" height="2.1" fill="#40a0ff" />
<rect x="256.5" y="645.0" width="2.6" height="2.1" fill="#40ffd0" />
<rect x="256.5" y="647.0" width="2.6" height="2.1" fill="#80ffa0" />
<rect x="256.5" y="649.0" width="2.6" height="2.1" fill="#ffe000" />
<rect x="256.5" y="651.0" width="2.6" height="49.0" fill="#b40000" />
<rect x="259.0" y="638.0" width="2.6" height="2.1" fill="#20c0ff" />
<rect x="259.0" y="640.0" width="2.6" height="2.1" fill="#20e0ff" />
<rect x="259.0" y="642.0" width="2.6" height="2.1" fill="#00c0ff" />
<rect x="259.0" y="644.0" width="2.6" height="2.1" fill="#40ffd0" />
<rect x="259.0" y="646.0" width="2.6" height="2.1" fill="#ffe000" />
<rect x="259.0" y="648.0" width="2.6" height="2.1" fill="#ff9000" />
<rect x="259.0" y="649.0" width="2.6" height="51.0" fill="#e00000" />
<rect x="259.0" y="656.0" width="2.6" height="2.0" fill="#900000" />
<rect x="261.5" y="637.0" width="2.6" height="2.1" fill="#00d0ff" />
<rect x="261.5" y="639.0" width="2.6" height="2.1" fill="#40a0ff" />
<rect x="261.5" y="641.0" width="2.6" height="2.1" fill="#40a0ff" />
<rect x="261.5" y="643.0" width="2.6" height="2.1" fill="#20e0ff" />
<rect x="261.5" y="645.0" width="2.6" height="2.1" fill="#80ffa0" />
<rect x="261.5" y="647.0" width="2.6" height="2.1" fill="#c0ff40" />
<rect x="261.5" y="649.0" width="2.6" height="2.1" fill="#ff9000" />
<rect x="261.5" y="650.0" width="2.6" height="50.0" fill="#b40000" />
<rect x="261.5" y="655.0" width="2.6" height="2.0" fill="#900000" />
<rect x="264.0" y="639.0" width="2.6" height="2.1" fill="#00b0ff" />
<rect x="264.0" y="641.0" width="2.6" height="2.1" fill="#0080ff" />
<rect x="264.0" y="643.0" width="2.6" height="2.1" fill="#40a0ff" />
<rect x="264.0" y="645.0" width="2.6" height="2.1" fill="#20e0ff" />
<rect x="264.0" y="647.0" width="2.6" height="2.1" fill="#40ffd0" />
<rect x="264.0" y="649.0" width="2.6" height="2.1" fill="#80ff80" />
<rect x="264.0" y="651.0" width="2.6" height="2.1" fill="#ff9000" />
<rect x="264.0" y="652.0" width="2.6" height="48.0" fill="#8c0000" />
<rect x="266.5" y="638.0" width="2.6" height="2.1" fill="#00d0ff" />
<rect x="266.5" y="640.0" width="2.6" height="2.1" fill="#40a0ff" />
<rect x="266.5" y="642.0" width="2.6" height="2.1" fill="#2090ff" />
<rect x="266.5" y="644.0" width="2.6" height="2.1" fill="#00ffff" />
<rect x="266.5" y="646.0" width="2.6" height="2.1" fill="#80ffa0" />
<rect x="266.5" y="648.0" width="2.6" height="2.1" fill="#ffe000" />
<rect x="266.5" y="650.0" width="2.6" height="50.0" fill="#e00000" />
<rect x="269.0" y="638.0" width="2.6" height="2.1" fill="#00d0ff" />
<rect x="269.0" y="640.0" width="2.6" height="2.1" fill="#40c0ff" />
<rect x="269.0" y="642.0" width="2.6" height="2.1" fill="#00c0ff" />
<rect x="269.0" y="644.0" width="2.6" height="2.1" fill="#00ffff" />
<rect x="269.0" y="646.0" width="2.6" height="2.1" fill="#ffff00" />
<rect x="269.0" y="648.0" width="2.6" height="2.1" fill="#ffc000" />
<rect x="269.0" y="649.0" width="2.6" height="51.0" fill="#ff4000" />
<rect x="269.0" y="656.0" width="2.6" height="2.0" fill="#900000" />
<rect x="271.5" y="638.0" width="2.6" height="2.1" fill="#20c0ff" />
<rect x="271.5" y="640.0" width="2.6" height="2.1" fill="#40c0ff" />
<rect x="271.5" y="642.0" width="2.6" height="2.1" fill="#0080ff" />
<rect x="271.5" y="644.0" width="2.6" height="2.1" fill="#2090ff" />
<rect x="271.5" y="646.0" width="2.6" height="2.1" fill="#80ffa0" />
<rect x="271.5" y="648.0" width="2.6" height="2.1" fill="#00ffff" />
<rect x="271.5" y="650.0" width="2.6" height="2.1" fill="#ffff00" />
<rect x="271.5" y="652.0" width="2.6" height="48.0" fill="#e00000" />
<rect x="271.5" y="657.0" width="2.6" height="2.0" fill="#ff4000" />
<rect x="274.0" y="638.0" width="2.6" height="2.1" fill="#00d0ff" />
<rect x="274.0" y="640.0" width="2.6" height="2.1" fill="#40c0ff" />
<rect x="274.0" y="642.0" width="2.6" height="2.1" fill="#2090ff" />
<rect x="274.0" y="644.0" width="2.6" height="2.1" fill="#00c0ff" />
<rect x="274.0" y="646.0" width="2.6" height="2.1" fill="#40ffd0" />
<rect x="274.0" y="648.0" width="2.6" height="2.1" fill="#40ffd0" />
<rect x="274.0" y="650.0" width="2.6" height="2.1" fill="#c0ff40" />
<rect x="274.0" y="652.0" width="2.6" height="2.1" fill="#ff6000" />
<rect x="274.0" y="654.0" width="2.6" height="46.0" fill="#e00000" />
<rect x="274.0" y="657.0" width="2.6" height="2.0" fill="#800000" />
<rect x="276.5" y="638.0" width="2.6" height="2.1" fill="#00b0ff" />
<rect x="276.5" y="640.0" width="2.6" height="2.1" fill="#00d0ff" />
<rect x="276.5" y="642.0" width="2.6" height="2.1" fill="#40c0ff" />
<rect x="276.5" y="644.0" width="2.6" height="2.1" fill="#00c0ff" />
<rect x="276.5" y="646.0" width="2.6" height="2.1" fill="#0080ff" />
<rect x="276.5" y="648.0" width="2.6" height="2.1" fill="#40ffd0" />
<rect x="276.5" y="650.0" width="2.6" height="2.1" fill="#00ffff" />
<rect x="276.5" y="652.0" width="2.6" height="2.1" fill="#80ff80" />
<rect x="276.5" y="654.0" width="2.6" height="2.1" fill="#ff9000" />
<rect x="276.5" y="655.0" width="2.6" height="45.0" fill="#ff4000" />
<rect x="276.5" y="660.0" width="2.6" height="2.0" fill="#900000" />
<rect x="276.5" y="662.0" width="2.6" height="2.0" fill="#ff8000" />
<rect x="279.0" y="638.0" width="2.6" height="2.1" fill="#00d0ff" />
<rect x="279.0" y="640.0" width="2.6" height="2.1" fill="#20c0ff" />
<rect x="279.0" y="642.0" width="2.6" height="2.1" fill="#40a0ff" />
<rect x="279.0" y="644.0" width="2.6" height="2.1" fill="#0080ff" />
<rect x="279.0" y="646.0" width="2.6" height="2.1" fill="#40a0ff" />
<rect x="279.0" y="648.0" width="2.6" height="2.1" fill="#40ffd0" />
<rect x="279.0" y="650.0" width="2.6" height="2.1" fill="#80ffa0" />
<rect x="279.0" y="652.0" width="2.6" height="2.1" fill="#ffff00" />
<rect x="279.0" y="654.0" width="2.6" height="2.1" fill="#ffc000" />
<rect x="279.0" y="655.0" width="2.6" height="45.0" fill="#e00000" />
<rect x="279.0" y="660.0" width="2.6" height="2.0" fill="#800000" />
<rect x="281.5" y="638.0" width="2.6" height="2.1" fill="#00b0ff" />
<rect x="281.5" y="640.0" width="2.6" height="2.1" fill="#0080ff" />
<rect x="281.5" y="642.0" width="2.6" height="2.1" fill="#00c0ff" />
<rect x="281.5" y="644.0" width="2.6" height="2.1" fill="#40a0ff" />
<rect x="281.5" y="646.0" width="2.6" height="2.1" fill="#40ffd0" />
<rect x="281.5" y="648.0" width="2.6" height="2.1" fill="#00ffff" />
<rect x="281.5" y="650.0" width="2.6" height="2.1" fill="#ffff00" />
<rect x="281.5" y="652.0" width="2.6" height="2.1" fill="#ff6000" />
<rect x="281.5" y="653.0" width="2.6" height="47.0" fill="#c00000" />
<rect x="284.0" y="638.0" width="2.6" height="2.1" fill="#00d0ff" />
<rect x="284.0" y="640.0" width="2.6" height="2.1" fill="#40a0ff" />
<rect x="284.0" y="642.0" width="2.6" height="2.1" fill="#0080ff" />
<rect x="284.0" y="644.0" width="2.6" height="2.1" fill="#2090ff" />
<rect x="284.0" y="646.0" width="2.6" height="2.1" fill="#20f0ff" />
<rect x="284.0" y="648.0" width="2.6" height="2.1" fill="#80ff80" />
<rect x="284.0" y="650.0" width="2.6" height="2.1" fill="#ff9000" />
<rect x="284.0" y="651.0" width="2.6" height="49.0" fill="#a00000" />
<rect x="284.0" y="656.0" width="2.6" height="2.0" fill="#800000" />
<rect x="286.5" y="638.0" width="2.6" height="2.1" fill="#00b0ff" />
<rect x="286.5" y="640.0" width="2.6" height="2.1" fill="#0080ff" />
<rect x="286.5" y="642.0" width="2.6" height="2.1" fill="#20e0ff" />
<rect x="286.5" y="644.0" width="2.6" height="2.1" fill="#20e0ff" />
<rect x="286.5" y="646.0" width="2.6" height="2.1" fill="#20f0ff" />
<rect x="286.5" y="648.0" width="2.6" height="2.1" fill="#40ffd0" />
<rect x="286.5" y="650.0" width="2.6" height="2.1" fill="#ffff00" />
<rect x="286.5" y="652.0" width="2.6" height="48.0" fill="#c00000" />
<rect x="289.0" y="638.0" width="2.6" height="2.1" fill="#00b0ff" />
<rect x="289.0" y="640.0" width="2.6" height="2.1" fill="#2090ff" />
<rect x="289.0" y="642.0" width="2.6" height="2.1" fill="#00c0ff" />
<rect x="289.0" y="644.0" width="2.6" height="2.1" fill="#2090ff" />
<rect x="289.0" y="646.0" width="2.6" height="2.1" fill="#20f0ff" />
<rect x="289.0" y="648.0" width="2.6" height="2.1" fill="#40ffd0" />
<rect x="289.0" y="650.0" width="2.6" height="2.1" fill="#ffff00" />
<rect x="289.0" y="652.0" width="2.6" height="48.0" fill="#d80000" />
<rect x="289.0" y="658.0" width="2.6" height="2.0" fill="#ff8000" />
<rect x="291.5" y="638.0" width="2.6" height="2.1" fill="#00b0ff" />
<rect x="291.5" y="640.0" width="2.6" height="2.1" fill="#20e0ff" />
<rect x="291.5" y="642.0" width="2.6" height="2.1" fill="#40a0ff" />
<rect x="291.5" y="644.0" width="2.6" height="2.1" fill="#20e0ff" />
<rect x="291.5" y="646.0" width="2.6" height="2.1" fill="#20f0ff" />
<rect x="291.5" y="648.0" width="2.6" height="2.1" fill="#40ffd0" />
<rect x="291.5" y="650.0" width="2.6" height="2.1" fill="#80ff80" />
<rect x="291.5" y="652.0" width="2.6" height="48.0" fill="#a00000" />
<rect x="291.5" y="658.0" width="2.6" height="2.0" fill="#ff4000" />
<rect x="294.0" y="639.0" width="2.6" height="2.1" fill="#20c0ff" />
<rect x="294.0" y="641.0" width="2.6" height="2.1" fill="#40a0ff" />
<rect x="294.0" y="643.0" width="2.6" height="2.1" fill="#20e0ff" />
<rect x="294.0" y="645.0" width="2.6" height="2.1" fill="#00c0ff" />
<rect x="294.0" y="647.0" width="2.6" height="2.1" fill="#20f0ff" />
<rect x="294.0" y="649.0" width="2.6" height="2.1" fill="#00ffff" />
<rect x="294.0" y="651.0" width="2.6" height="2.1" fill="#c0ff40" />
<rect x="294.0" y="653.0" width="2.6" height="2.1" fill="#ff6000" />
<rect x="294.0" y="655.0" width="2.6" height="45.0" fill="#ff4000" />
<rect x="296.5" y="639.0" width="2.6" height="2.1" fill="#00d0ff" />
<rect x="296.5" y="641.0" width="2.6" height="2.1" fill="#00c0ff" />
<rect x="296.5" y="643.0" width="2.6" height="2.1" fill="#40c0ff" />
<rect x="296.5" y="645.0" width="2.6" height="2.1" fill="#40ffd0" />
<rect x="296.5" y="647.0" width="2.6" height="2.1" fill="#80ff80" />
<rect x="296.5" y="649.0" width="2.6" height="51.0" fill="#c80000" />
<rect x="296.5" y="655.0" width="2.6" height="2.0" fill="#800000" />
<rect x="299.0" y="639.0" width="2.6" height="2.1" fill="#00d0ff" />
<rect x="299.0" y="641.0" width="2.6" height="2.1" fill="#20e0ff" />
<rect x="299.0" y="643.0" width="2.6" height="2.1" fill="#40a0ff" />
<rect x="299.0" y="645.0" width="2.6" height="2.1" fill="#40ffd0" />
<rect x="299.0" y="647.0" width="2.6" height="2.1" fill="#ffe000" />
<rect x="299.0" y="649.0" width="2.6" height="2.1" fill="#ff6000" />
<rect x="299.0" y="650.0" width="2.6" height="50.0" fill="#c80000" />
<rect x="301.5" y="638.0" width="2.6" height="2.1" fill="#20c0ff" />
<rect x="301.5" y="640.0" width="2.6" height="2.1" fill="#00b0ff" />
<rect x="301.5" y="642.0" width="2.6" height="2.1" fill="#00c0ff" />
<rect x="301.5" y="644.0" width="2.6" height="2.1" fill="#2090ff" />
<rect x="301.5" y="646.0" width="2.6" height="2.1" fill="#2090ff" />
<rect x="301.5" y="648.0" width="2.6" height="2.1" fill="#40ffd0" />
<rect x="301.5" y="650.0" width="2.6" height="2.1" fill="#80ffa0" />
<rect x="301.5" y="652.0" width="2.6" height="2.1" fill="#80ff80" />
<rect x="301.5" y="654.0" width="2.6" height="2.1" fill="#ff6000" />
<rect x="301.5" y="655.0" width="2.6" height="45.0" fill="#a00000" />
<rect x="304.0" y="638.0" width="2.6" height="2.1" fill="#00d0ff" />
<rect x="304.0" y="640.0" width="2.6" height="2.1" fill="#40c0ff" />
<rect x="304.0" y="642.0" width="2.6" height="2.1" fill="#20e0ff" />
<rect x="304.0" y="644.0" width="2.6" height="2.1" fill="#00c0ff" />
<rect x="304.0" y="646.0" width="2.6" height="2.1" fill="#40ffd0" />
<rect x="304.0" y="648.0" width="2.6" height="2.1" fill="#80ff80" />
<rect x="304.0" y="650.0" width="2.6" height="2.1" fill="#ff6000" />
<rect x="304.0" y="651.0" width="2.6" height="49.0" fill="#8c0000" />
<rect x="306.5" y="638.0" width="2.6" height="2.1" fill="#20c0ff" />
<rect x="306.5" y="640.0" width="2.6" height="2.1" fill="#00c0ff" />
<rect x="306.5" y="642.0" width="2.6" height="2.1" fill="#0080ff" />
<rect x="306.5" y="644.0" width="2.6" height="2.1" fill="#40ffd0" />
<rect x="306.5" y="646.0" width="2.6" height="2.1" fill="#ffff00" />
<rect x="306.5" y="648.0" width="2.6" height="52.0" fill="#ff2000" />
<rect x="306.5" y="652.0" width="2.6" height="2.0" fill="#ff8000" />
<rect x="309.0" y="638.0" width="2.6" height="2.1" fill="#00d0ff" />
<rect x="309.0" y="640.0" width="2.6" height="2.1" fill="#40c0ff" />
<rect x="309.0" y="642.0" width="2.6" height="2.1" fill="#0080ff" />
<rect x="309.0" y="644.0" width="2.6" height="2.1" fill="#00ffff" />
<rect x="309.0" y="646.0" width="2.6" height="2.1" fill="#ff9000" />
<rect x="309.0" y="647.0" width="2.6" height="53.0" fill="#8c0000" />
<rect x="311.5" y="639.0" width="2.6" height="2.1" fill="#00b0ff" />
<rect x="311.5" y="641.0" width="2.6" height="2.1" fill="#40a0ff" />
<rect x="311.5" y="643.0" width="2.6" height="2.1" fill="#00ffff" />
<rect x="311.5" y="645.0" width="2.6" height="2.1" fill="#ffff00" />
<rect x="311.5" y="647.0" width="2.6" height="53.0" fill="#8c0000" />
<rect x="311.5" y="649.0" width="2.6" height="2.0" fill="#ff8000" />
<rect x="314.0" y="639.0" width="2.6" height="2.1" fill="#00b0ff" />
<rect x="314.0" y="641.0" width="2.6" height="2.1" fill="#2090ff" />
<rect x="314.0" y="643.0" width="2.6" height="2.1" fill="#00ffff" />
<rect x="314.0" y="645.0" width="2.6" height="2.1" fill="#c0ff40" />
<rect x="314.0" y="647.0" width="2.6" height="53.0" fill="#b40000" />
<rect x="314.0" y="652.0" width="2.6" height="2.0" fill="#800000" />
<rect x="316.5" y="638.0" width="2.6" height="2.1" fill="#00d0ff" />
<rect x="316.5" y="640.0" width="2.6" height="2.1" fill="#00c0ff" />
<rect x="316.5" y="642.0" width="2.6" height="2.1" fill="#00c0ff" />
<rect x="316.5" y="644.0" width="2.6" height="2.1" fill="#00ffff" />
<rect x="316.5" y="646.0" width="2.6" height="2.1" fill="#c0ff40" />
<rect x="316.5" y="648.0" width="2.6" height="2.1" fill="#ffc000" />
<rect x="316.5" y="649.0" width="2.6" height="51.0" fill="#a00000" />
<rect x="316.5" y="650.0" width="2.6" height="2.0" fill="#800000" />
<rect x="319.0" y="638.0" width="2.6" height="2.1" fill="#20c0ff" />
<rect x="319.0" y="640.0" width="2.6" height="2.1" fill="#00c0ff" />
<rect x="319.0" y="642.0" width="2.6" height="2.1" fill="#00c0ff" />
<rect x="319.0" y="644.0" width="2.6" height="2.1" fill="#0080ff" />
<rect x="319.0" y="646.0" width="2.6" height="2.1" fill="#80ffa0" />
<rect x="319.0" y="648.0" width="2.6" height="2.1" fill="#ffff00" />
<rect x="319.0" y="650.0" width="2.6" height="2.1" fill="#ff9000" />
<rect x="319.0" y="651.0" width="2.6" height="49.0" fill="#ff2000" />
<rect x="321.5" y="638.0" width="2.6" height="2.1" fill="#20c0ff" />
<rect x="321.5" y="640.0" width="2.6" height="2.1" fill="#20e0ff" />
<rect x="321.5" y="642.0" width="2.6" height="2.1" fill="#20e0ff" />
<rect x="321.5" y="644.0" width="2.6" height="2.1" fill="#20f0ff" />
<rect x="321.5" y="646.0" width="2.6" height="2.1" fill="#ff6000" />
<rect x="321.5" y="647.0" width="2.6" height="53.0" fill="#8c0000" />
<rect x="321.5" y="648.0" width="2.6" height="2.0" fill="#900000" />
<rect x="321.5" y="649.0" width="2.6" height="2.0" fill="#ff4000" />
<rect x="324.0" y="639.0" width="2.6" height="2.1" fill="#00d0ff" />
<rect x="324.0" y="641.0" width="2.6" height="2.1" fill="#40a0ff" />
<rect x="324.0" y="643.0" width="2.6" height="2.1" fill="#0080ff" />
<rect x="324.0" y="645.0" width="2.6" height="2.1" fill="#00ffff" />
<rect x="324.0" y="647.0" width="2.6" height="2.1" fill="#80ff80" />
<rect x="324.0" y="649.0" width="2.6" height="51.0" fill="#ff2000" />
<rect x="324.0" y="652.0" width="2.6" height="2.0" fill="#800000" />
<rect x="326.5" y="639.0" width="2.6" height="2.1" fill="#00d0ff" />
<rect x="326.5" y="641.0" width="2.6" height="2.1" fill="#0080ff" />
<rect x="326.5" y="643.0" width="2.6" height="2.1" fill="#20e0ff" />
<rect x="326.5" y="645.0" width="2.6" height="2.1" fill="#20f0ff" />
<rect x="326.5" y="647.0" width="2.6" height="2.1" fill="#c0ff40" />
<rect x="326.5" y="649.0" width="2.6" height="51.0" fill="#8c0000" />
<rect x="326.5" y="649.0" width="2.6" height="2.0" fill="#ff4000" />
<rect x="329.0" y="638.0" width="2.6" height="2.1" fill="#00d0ff" />
<rect x="329.0" y="640.0" width="2.6" height="2.1" fill="#0080ff" />
<rect x="329.0" y="642.0" width="2.6" height="2.1" fill="#40a0ff" />
<rect x="329.0" y="644.0" width="2.6" height="2.1" fill="#40ffd0" />
<rect x="329.0" y="646.0" width="2.6" height="2.1" fill="#40ffd0" />
<rect x="329.0" y="648.0" width="2.6" height="2.1" fill="#ffe000" />
<rect x="329.0" y="650.0" width="2.6" height="50.0" fill="#ff4000" />
<rect x="329.0" y="650.0" width="2.6" height="2.0" fill="#ff4000" />
<rect x="331.5" y="639.0" width="2.6" height="2.1" fill="#20c0ff" />
<rect x="331.5" y="641.0" width="2.6" height="2.1" fill="#40c0ff" />
<rect x="331.5" y="643.0" width="2.6" height="2.1" fill="#40c0ff" />
<rect x="331.5" y="645.0" width="2.6" height="2.1" fill="#20f0ff" />
<rect x="331.5" y="647.0" width="2.6" height="2.1" fill="#ffc000" />
<rect x="331.5" y="648.0" width="2.6" height="52.0" fill="#c80000" />
<rect x="331.5" y="653.0" width="2.6" height="2.0" fill="#800000" />
<rect x="334.0" y="638.0" width="2.6" height="2.1" fill="#00b0ff" />
<rect x="334.0" y="640.0" width="2.6" height="2.1" fill="#40a0ff" />
<rect x="334.0" y="642.0" width="2.6" height="2.1" fill="#40a0ff" />
<rect x="334.0" y="644.0" width="2.6" height="2.1" fill="#40ffd0" />
<rect x="334.0" y="646.0" width="2.6" height="2.1" fill="#80ff80" />
<rect x="334.0" y="648.0" width="2.6" height="52.0" fill="#8c0000" />
<rect x="334.0" y="649.0" width="2.6" height="2.0" fill="#ff8000" />
<rect x="336.5" y="639.0" width="2.6" height="2.1" fill="#00b0ff" />
<rect x="336.5" y="641.0" width="2.6" height="2.1" fill="#2090ff" />
<rect x="336.5" y="643.0" width="2.6" height="2.1" fill="#40c0ff" />
<rect x="336.5" y="645.0" width="2.6" height="2.1" fill="#00ffff" />
<rect x="336.5" y="647.0" width="2.6" height="2.1" fill="#ff6000" />
<rect x="336.5" y="648.0" width="2.6" height="52.0" fill="#d80000" />
<rect x="336.5" y="651.0" width="2.6" height="2.0" fill="#900000" />
<rect x="339.0" y="638.0" width="2.6" height="2.1" fill="#20c0ff" />
<rect x="339.0" y="640.0" width="2.6" height="2.1" fill="#20e0ff" />
<rect x="339.0" y="642.0" width="2.6" height="2.1" fill="#40c0ff" />
<rect x="339.0" y="644.0" width="2.6" height="2.1" fill="#20f0ff" />
<rect x="339.0" y="646.0" width="2.6" height="2.1" fill="#80ff80" />
<rect x="339.0" y="648.0" width="2.6" height="2.1" fill="#ff6000" />
<rect x="339.0" y="649.0" width="2.6" height="51.0" fill="#c80000" />
<rect x="339.0" y="656.0" width="2.6" height="2.0" fill="#800000" />
<rect x="341.5" y="639.0" width="2.6" height="2.1" fill="#00b0ff" />
<rect x="341.5" y="641.0" width="2.6" height="2.1" fill="#0080ff" />
<rect x="341.5" y="643.0" width="2.6" height="2.1" fill="#40ffd0" />
<rect x="341.5" y="645.0" width="2.6" height="2.1" fill="#c0ff40" />
<rect x="341.5" y="647.0" width="2.6" height="53.0" fill="#e00000" />
<rect x="341.5" y="648.0" width="2.6" height="2.0" fill="#ff8000" />
<rect x="344.0" y="639.0" width="2.6" height="2.1" fill="#00d0ff" />
<rect x="344.0" y="641.0" width="2.6" height="2.1" fill="#40c0ff" />
<rect x="344.0" y="643.0" width="2.6" height="2.1" fill="#00ffff" />
<rect x="344.0" y="645.0" width="2.6" height="2.1" fill="#c0ff40" />
<rect x="344.0" y="647.0" width="2.6" height="53.0" fill="#8c0000" />
<rect x="344.0" y="649.0" width="2.6" height="2.0" fill="#800000" />
<rect x="346.5" y="639.0" width="2.6" height="2.1" fill="#20c0ff" />
<rect x="346.5" y="641.0" width="2.6" height="2.1" fill="#20e0ff" />
<rect x="346.5" y="643.0" width="2.6" height="2.1" fill="#40a0ff" />
<rect x="346.5" y="645.0" width="2.6" height="2.1" fill="#40ffd0" />
<rect x="346.5" y="647.0" width="2.6" height="2.1" fill="#ffff00" />
<rect x="346.5" y="649.0" width="2.6" height="2.1" fill="#ffc000" />
<rect x="346.5" y="650.0" width="2.6" height="50.0" fill="#d80000" />
<rect x="349.0" y="639.0" width="2.0" height="2.1" fill="#20c0ff" />
<rect x="349.0" y="641.0" width="2.0" height="2.1" fill="#2090ff" />
<rect x="349.0" y="643.0" width="2.0" height="2.1" fill="#00ffff" />
<rect x="349.0" y="645.0" width="2.0" height="2.1" fill="#ffe000" />
<rect x="349.0" y="647.0" width="2.0" height="53.0" fill="#d80000" />
<rect x="49.0" y="700.0" width="302.0" height="5.0" fill="#000080" />
<rect x="49.0" y="705.0" width="302.0" height="4.0" fill="#000" />
<rect x="44.0" y="700.5" width="5.0" height="1.0" fill="#000" />
<rect x="44.0" y="690.5" width="5.0" height="1.0" fill="#000" />
<rect x="44.0" y="678.5" width="5.0" height="1.0" fill="#000" />
<rect x="44.0" y="666.5" width="5.0" height="1.0" fill="#000" />
<rect x="44.0" y="654.5" width="5.0" height="1.0" fill="#000" />
<rect x="44.0" y="642.5" width="5.0" height="1.0" fill="#000" />
<rect x="44.0" y="630.5" width="5.0" height="1.0" fill="#000" />
<rect x="44.0" y="618.5" width="5.0" height="1.0" fill="#000" />
<rect x="44.0" y="606.5" width="5.0" height="1.0" fill="#000" />
<rect x="44.0" y="594.5" width="5.0" height="1.0" fill="#000" />
<rect x="44.0" y="582.5" width="5.0" height="1.0" fill="#000" />
<rect x="44.0" y="570.5" width="5.0" height="1.0" fill="#000" />
<rect x="44.0" y="558.5" width="5.0" height="1.0" fill="#000" />
<rect x="44.0" y="548.5" width="5.0" height="1.0" fill="#000" />
<rect x="49.0" y="709.0" width="1.3" height="11.0" fill="#000" />
<rect x="74.0" y="709.0" width="1.3" height="6.0" fill="#000" />
<rect x="99.0" y="709.0" width="1.3" height="11.0" fill="#000" />
<rect x="125.0" y="709.0" width="1.3" height="6.0" fill="#000" />
<rect x="150.0" y="709.0" width="1.3" height="11.0" fill="#000" />
<rect x="175.0" y="709.0" width="1.3" height="6.0" fill="#000" />
<rect x="200.0" y="709.0" width="1.3" height="11.0" fill="#000" />
<rect x="225.0" y="709.0" width="1.3" height="6.0" fill="#000" />
<rect x="250.0" y="709.0" width="1.3" height="11.0" fill="#000" />
<rect x="276.0" y="709.0" width="1.3" height="6.0" fill="#000" />
<rect x="301.0" y="709.0" width="1.3" height="11.0" fill="#000" />
<rect x="326.0" y="709.0" width="1.3" height="6.0" fill="#000" />
<rect x="351.0" y="709.0" width="1.3" height="11.0" fill="#000" />
<rect x="354.0" y="547.0" width="6.0" height="165.5" fill="url(#gjet)" />
<rect x="361.0" y="706.5" width="7.0" height="1.0" fill="#000" />
<rect x="361.0" y="681.5" width="7.0" height="1.0" fill="#000" />
<rect x="361.0" y="654.5" width="7.0" height="1.0" fill="#000" />
<rect x="361.0" y="627.5" width="7.0" height="1.0" fill="#000" />
<rect x="361.0" y="600.5" width="7.0" height="1.0" fill="#000" />
<rect x="361.0" y="573.5" width="7.0" height="1.0" fill="#000" />
<rect x="361.0" y="548.5" width="7.0" height="1.0" fill="#000" />
<rect x="441.0" y="43.0" width="302.0" height="133.0" fill="#000" />
<rect x="441.0" y="117.0" width="2.5" height="53.0" fill="#fff" />
<rect x="443.5" y="116.0" width="2.5" height="54.0" fill="#fff" />
<rect x="446.0" y="117.0" width="2.5" height="53.0" fill="#fff" />
<rect x="448.5" y="116.0" width="2.5" height="54.0" fill="#fff" />
<rect x="451.0" y="117.0" width="2.5" height="53.0" fill="#fff" />
<rect x="453.5" y="118.0" width="2.5" height="52.0" fill="#fff" />
<rect x="456.0" y="120.0" width="2.5" height="50.0" fill="#fff" />
<rect x="458.5" y="119.0" width="2.5" height="51.0" fill="#fff" />
<rect x="461.0" y="118.0" width="2.5" height="52.0" fill="#fff" />
<rect x="463.5" y="117.0" width="2.5" height="53.0" fill="#fff" />
<rect x="466.0" y="118.0" width="2.5" height="52.0" fill="#fff" />
<rect x="468.5" y="118.0" width="2.5" height="52.0" fill="#fff" />
<rect x="471.0" y="118.0" width="2.5" height="52.0" fill="#fff" />
<rect x="473.5" y="118.0" width="2.5" height="52.0" fill="#fff" />
<rect x="476.0" y="118.0" width="2.5" height="52.0" fill="#fff" />
<rect x="478.5" y="117.0" width="2.5" height="53.0" fill="#fff" />
<rect x="481.0" y="117.0" width="2.5" height="53.0" fill="#fff" />
<rect x="483.5" y="118.0" width="2.5" height="52.0" fill="#fff" />
<rect x="486.0" y="118.0" width="2.5" height="52.0" fill="#fff" />
<rect x="488.5" y="117.0" width="2.5" height="53.0" fill="#fff" />
<rect x="491.0" y="118.0" width="2.5" height="52.0" fill="#fff" />
<rect x="493.5" y="118.0" width="2.5" height="52.0" fill="#fff" />
<rect x="496.0" y="118.0" width="2.5" height="52.0" fill="#fff" />
<rect x="498.5" y="118.0" width="2.5" height="52.0" fill="#fff" />
<rect x="501.0" y="118.0" width="2.5" height="52.0" fill="#fff" />
<rect x="503.5" y="116.0" width="2.5" height="54.0" fill="#fff" />
<rect x="506.0" y="118.0" width="2.5" height="52.0" fill="#fff" />
<rect x="508.5" y="117.0" width="2.5" height="53.0" fill="#fff" />
<rect x="511.0" y="116.0" width="2.5" height="54.0" fill="#fff" />
<rect x="513.5" y="117.0" width="2.5" height="53.0" fill="#fff" />
<rect x="516.0" y="117.0" width="2.5" height="53.0" fill="#fff" />
<rect x="518.5" y="117.0" width="2.5" height="53.0" fill="#fff" />
<rect x="521.0" y="117.0" width="2.5" height="53.0" fill="#fff" />
<rect x="523.5" y="118.0" width="2.5" height="52.0" fill="#fff" />
<rect x="526.0" y="118.0" width="2.5" height="52.0" fill="#fff" />
<rect x="528.5" y="116.0" width="2.5" height="54.0" fill="#fff" />
<rect x="531.0" y="117.0" width="2.5" height="53.0" fill="#fff" />
<rect x="533.5" y="118.0" width="2.5" height="52.0" fill="#fff" />
<rect x="536.0" y="117.0" width="2.5" height="53.0" fill="#fff" />
<rect x="538.5" y="118.0" width="2.5" height="52.0" fill="#fff" />
<rect x="541.0" y="117.0" width="2.5" height="53.0" fill="#fff" />
<rect x="543.5" y="117.0" width="2.5" height="53.0" fill="#fff" />
<rect x="546.0" y="116.0" width="2.5" height="54.0" fill="#fff" />
<rect x="548.5" y="117.0" width="2.5" height="53.0" fill="#fff" />
<rect x="551.0" y="116.0" width="2.5" height="54.0" fill="#fff" />
<rect x="553.5" y="117.0" width="2.5" height="53.0" fill="#fff" />
<rect x="556.0" y="117.0" width="2.5" height="53.0" fill="#fff" />
<rect x="558.5" y="117.0" width="2.5" height="53.0" fill="#fff" />
<rect x="561.0" y="117.0" width="2.5" height="53.0" fill="#fff" />
<rect x="563.5" y="116.0" width="2.5" height="54.0" fill="#fff" />
<rect x="566.0" y="116.0" width="2.5" height="54.0" fill="#fff" />
<rect x="568.5" y="117.0" width="2.5" height="53.0" fill="#fff" />
<rect x="571.0" y="116.0" width="2.5" height="54.0" fill="#fff" />
<rect x="573.5" y="116.0" width="2.5" height="54.0" fill="#fff" />
<rect x="576.0" y="116.0" width="2.5" height="54.0" fill="#fff" />
<rect x="578.5" y="115.0" width="2.5" height="55.0" fill="#fff" />
<rect x="581.0" y="115.0" width="2.5" height="55.0" fill="#fff" />
<rect x="583.5" y="114.0" width="2.5" height="56.0" fill="#fff" />
<rect x="586.0" y="115.0" width="2.5" height="55.0" fill="#fff" />
<rect x="588.5" y="114.0" width="2.5" height="56.0" fill="#fff" />
<rect x="591.0" y="115.0" width="2.5" height="55.0" fill="#fff" />
<rect x="593.5" y="115.0" width="2.5" height="55.0" fill="#fff" />
<rect x="596.0" y="115.0" width="2.5" height="55.0" fill="#fff" />
<rect x="598.5" y="115.0" width="2.5" height="55.0" fill="#fff" />
<rect x="601.0" y="115.0" width="2.5" height="55.0" fill="#fff" />
<rect x="603.5" y="115.0" width="2.5" height="55.0" fill="#fff" />
<rect x="606.0" y="115.0" width="2.5" height="55.0" fill="#fff" />
<rect x="608.5" y="115.0" width="2.5" height="55.0" fill="#fff" />
<rect x="611.0" y="115.0" width="2.5" height="55.0" fill="#fff" />
<rect x="613.5" y="115.0" width="2.5" height="55.0" fill="#fff" />
<rect x="616.0" y="115.0" width="2.5" height="55.0" fill="#fff" />
<rect x="618.5" y="115.0" width="2.5" height="55.0" fill="#fff" />
<rect x="621.0" y="115.0" width="2.5" height="55.0" fill="#fff" />
<rect x="623.5" y="115.0" width="2.5" height="55.0" fill="#fff" />
<rect x="626.0" y="114.0" width="2.5" height="56.0" fill="#fff" />
<rect x="628.5" y="115.0" width="2.5" height="55.0" fill="#fff" />
<rect x="631.0" y="114.0" width="2.5" height="56.0" fill="#fff" />
<rect x="633.5" y="115.0" width="2.5" height="55.0" fill="#fff" />
<rect x="636.0" y="114.0" width="2.5" height="56.0" fill="#fff" />
<rect x="638.5" y="115.0" width="2.5" height="55.0" fill="#fff" />
<rect x="641.0" y="115.0" width="2.5" height="55.0" fill="#fff" />
<rect x="643.5" y="116.0" width="2.5" height="54.0" fill="#fff" />
<rect x="646.0" y="115.0" width="2.5" height="55.0" fill="#fff" />
<rect x="648.5" y="116.0" width="2.5" height="54.0" fill="#fff" />
<rect x="651.0" y="117.0" width="2.5" height="53.0" fill="#fff" />
<rect x="653.5" y="116.0" width="2.5" height="54.0" fill="#fff" />
<rect x="656.0" y="115.0" width="2.5" height="55.0" fill="#fff" />
<rect x="658.5" y="116.0" width="2.5" height="54.0" fill="#fff" />
<rect x="661.0" y="115.0" width="2.5" height="55.0" fill="#fff" />
<rect x="663.5" y="116.0" width="2.5" height="54.0" fill="#fff" />
<rect x="666.0" y="116.0" width="2.5" height="54.0" fill="#fff" />
<rect x="668.5" y="116.0" width="2.5" height="54.0" fill="#fff" />
<rect x="671.0" y="117.0" width="2.5" height="53.0" fill="#fff" />
<rect x="673.5" y="116.0" width="2.5" height="54.0" fill="#fff" />
<rect x="676.0" y="116.0" width="2.5" height="54.0" fill="#fff" />
<rect x="678.5" y="116.0" width="2.5" height="54.0" fill="#fff" />
<rect x="681.0" y="115.0" width="2.5" height="55.0" fill="#fff" />
<rect x="683.5" y="116.0" width="2.5" height="54.0" fill="#fff" />
<rect x="686.0" y="116.0" width="2.5" height="54.0" fill="#fff" />
<rect x="688.5" y="116.0" width="2.5" height="54.0" fill="#fff" />
<rect x="691.0" y="116.0" width="2.5" height="54.0" fill="#fff" />
<rect x="693.5" y="117.0" width="2.5" height="53.0" fill="#fff" />
<rect x="696.0" y="116.0" width="2.5" height="54.0" fill="#fff" />
<rect x="698.5" y="117.0" width="2.5" height="53.0" fill="#fff" />
<rect x="701.0" y="115.0" width="2.5" height="55.0" fill="#fff" />
<rect x="703.5" y="116.0" width="2.5" height="54.0" fill="#fff" />
<rect x="706.0" y="116.0" width="2.5" height="54.0" fill="#fff" />
<rect x="708.5" y="115.0" width="2.5" height="55.0" fill="#fff" />
<rect x="711.0" y="116.0" width="2.5" height="54.0" fill="#fff" />
<rect x="713.5" y="115.0" width="2.5" height="55.0" fill="#fff" />
<rect x="716.0" y="116.0" width="2.5" height="54.0" fill="#fff" />
<rect x="718.5" y="115.0" width="2.5" height="55.0" fill="#fff" />
<rect x="721.0" y="116.0" width="2.5" height="54.0" fill="#fff" />
<rect x="723.5" y="115.0" width="2.5" height="55.0" fill="#fff" />
<rect x="726.0" y="117.0" width="2.5" height="53.0" fill="#fff" />
<rect x="728.5" y="115.0" width="2.5" height="55.0" fill="#fff" />
<rect x="731.0" y="117.0" width="2.5" height="53.0" fill="#fff" />
<rect x="733.5" y="116.0" width="2.5" height="54.0" fill="#fff" />
<rect x="736.0" y="117.0" width="2.5" height="53.0" fill="#fff" />
<rect x="738.5" y="116.0" width="2.5" height="54.0" fill="#fff" />
<rect x="741.0" y="115.0" width="2.0" height="55.0" fill="#fff" />
<rect x="461.0" y="168.5" width="17.0" height="1.5" fill="#000" />
<rect x="511.0" y="169.0" width="2.0" height="1.0" fill="#000" />
<rect x="485.0" y="105.0" width="2.5" height="1.0" fill="#fff" />
<rect x="512.0" y="106.5" width="2.0" height="1.0" fill="#fff" />
<rect x="655.0" y="112.0" width="3.0" height="1.0" fill="#fff" />
<rect x="436.0" y="175.5" width="5.0" height="1.0" fill="#000" />
<rect x="436.0" y="150.5" width="5.0" height="1.0" fill="#000" />
<rect x="436.0" y="123.5" width="5.0" height="1.0" fill="#000" />
<rect x="436.0" y="96.5" width="5.0" height="1.0" fill="#000" />
<rect x="436.0" y="69.5" width="5.0" height="1.0" fill="#000" />
<rect x="436.0" y="44.5" width="5.0" height="1.0" fill="#000" />
<rect x="441.0" y="176.2" width="1.3" height="11.0" fill="#000" />
<rect x="466.0" y="176.2" width="1.3" height="6.0" fill="#000" />
<rect x="491.0" y="176.2" width="1.3" height="11.0" fill="#000" />
<rect x="516.0" y="176.2" width="1.3" height="6.0" fill="#000" />
<rect x="542.0" y="176.2" width="1.3" height="11.0" fill="#000" />
<rect x="567.0" y="176.2" width="1.3" height="6.0" fill="#000" />
<rect x="592.0" y="176.2" width="1.3" height="11.0" fill="#000" />
<rect x="617.0" y="176.2" width="1.3" height="6.0" fill="#000" />
<rect x="642.0" y="176.2" width="1.3" height="11.0" fill="#000" />
<rect x="668.0" y="176.2" width="1.3" height="6.0" fill="#000" />
<rect x="693.0" y="176.2" width="1.3" height="11.0" fill="#000" />
<rect x="718.0" y="176.2" width="1.3" height="6.0" fill="#000" />
<rect x="743.0" y="176.2" width="1.3" height="11.0" fill="#000" />
<rect x="441.0" y="221.0" width="302.0" height="132.5" fill="#000" />
<rect x="441.0" y="290.0" width="302.0" height="57.0" fill="url(#glw2)" />
<rect x="441.0" y="289.0" width="2.5" height="6.0" fill="#000" />
<rect x="441.0" y="295.0" width="2.5" height="52.0" fill="#000" fill-opacity="0.03"/>
<rect x="443.5" y="289.0" width="2.5" height="6.0" fill="#000" />
<rect x="443.5" y="295.0" width="2.5" height="52.0" fill="#000" fill-opacity="0.05"/>
<rect x="446.0" y="289.0" width="2.5" height="6.0" fill="#000" />
<rect x="446.0" y="295.0" width="2.5" height="52.0" fill="#ff0000" fill-opacity="0.02"/>
<rect x="448.5" y="289.0" width="2.5" height="6.0" fill="#000" />
<rect x="448.5" y="295.0" width="2.5" height="52.0" fill="#ff0000" fill-opacity="0.02"/>
<rect x="451.0" y="289.0" width="2.5" height="6.0" fill="#000" />
<rect x="451.0" y="295.0" width="2.5" height="52.0" fill="#000" fill-opacity="0.02"/>
<rect x="453.5" y="289.0" width="2.5" height="6.0" fill="#000" />
<rect x="453.5" y="295.0" width="2.5" height="52.0" fill="#ff0000" fill-opacity="0.05"/>
<rect x="456.0" y="289.0" width="2.5" height="6.0" fill="#000" />
<rect x="456.0" y="295.0" width="2.5" height="52.0" fill="#000" fill-opacity="0.03"/>
<rect x="458.5" y="289.0" width="2.5" height="7.0" fill="#000" />
<rect x="458.5" y="296.0" width="2.5" height="51.0" fill="#000" fill-opacity="0.02"/>
<rect x="461.0" y="289.0" width="2.5" height="6.0" fill="#000" />
<rect x="461.0" y="295.0" width="2.5" height="52.0" fill="#000" fill-opacity="0.03"/>
<rect x="463.5" y="289.0" width="2.5" height="6.0" fill="#000" />
<rect x="463.5" y="295.0" width="2.5" height="52.0" fill="#000" fill-opacity="0.02"/>
<rect x="466.0" y="289.0" width="2.5" height="6.0" fill="#000" />
<rect x="466.0" y="295.0" width="2.5" height="52.0" fill="#000" fill-opacity="0.01"/>
<rect x="468.5" y="289.0" width="2.5" height="6.0" fill="#000" />
<rect x="468.5" y="295.0" width="2.5" height="52.0" fill="#000" fill-opacity="0.04"/>
<rect x="471.0" y="289.0" width="2.5" height="5.0" fill="#000" />
<rect x="471.0" y="294.0" width="2.5" height="53.0" fill="#000" fill-opacity="0.06"/>
<rect x="473.5" y="289.0" width="2.5" height="6.0" fill="#000" />
<rect x="473.5" y="295.0" width="2.5" height="52.0" fill="#ff0000" fill-opacity="0.03"/>
<rect x="476.0" y="289.0" width="2.5" height="5.0" fill="#000" />
<rect x="476.0" y="294.0" width="2.5" height="53.0" fill="#000" fill-opacity="0.05"/>
<rect x="478.5" y="289.0" width="2.5" height="5.0" fill="#000" />
<rect x="478.5" y="294.0" width="2.5" height="53.0" fill="#000" fill-opacity="0.00"/>
<rect x="481.0" y="289.0" width="2.5" height="5.0" fill="#000" />
<rect x="481.0" y="294.0" width="2.5" height="53.0" fill="#000" fill-opacity="0.05"/>
<rect x="483.5" y="289.0" width="2.5" height="5.0" fill="#000" />
<rect x="483.5" y="294.0" width="2.5" height="53.0" fill="#ff0000" fill-opacity="0.04"/>
<rect x="486.0" y="289.0" width="2.5" height="6.0" fill="#000" />
<rect x="486.0" y="295.0" width="2.5" height="52.0" fill="#000" fill-opacity="0.02"/>
<rect x="488.5" y="289.0" width="2.5" height="5.0" fill="#000" />
<rect x="488.5" y="294.0" width="2.5" height="53.0" fill="#000" fill-opacity="0.06"/>
<rect x="491.0" y="289.0" width="2.5" height="5.0" fill="#000" />
<rect x="491.0" y="294.0" width="2.5" height="53.0" fill="#000" fill-opacity="0.07"/>
<rect x="493.5" y="289.0" width="2.5" height="5.0" fill="#000" />
<rect x="493.5" y="294.0" width="2.5" height="53.0" fill="#ff0000" fill-opacity="0.05"/>
<rect x="496.0" y="289.0" width="2.5" height="6.0" fill="#000" />
<rect x="496.0" y="295.0" width="2.5" height="52.0" fill="#ff0000" fill-opacity="0.02"/>
<rect x="498.5" y="289.0" width="2.5" height="5.0" fill="#000" />
<rect x="498.5" y="294.0" width="2.5" height="53.0" fill="#000" fill-opacity="0.01"/>
<rect x="501.0" y="289.0" width="2.5" height="5.0" fill="#000" />
<rect x="501.0" y="294.0" width="2.5" height="53.0" fill="#000" fill-opacity="0.05"/>
<rect x="503.5" y="289.0" width="2.5" height="5.0" fill="#000" />
<rect x="503.5" y="294.0" width="2.5" height="53.0" fill="#000" fill-opacity="0.07"/>
<rect x="506.0" y="289.0" width="2.5" height="5.0" fill="#000" />
<rect x="506.0" y="294.0" width="2.5" height="53.0" fill="#000" fill-opacity="0.01"/>
<rect x="508.5" y="289.0" width="2.5" height="6.0" fill="#000" />
<rect x="508.5" y="295.0" width="2.5" height="52.0" fill="#000" fill-opacity="0.05"/>
<rect x="511.0" y="289.0" width="2.5" height="6.0" fill="#000" />
<rect x="511.0" y="295.0" width="2.5" height="52.0" fill="#ff0000" fill-opacity="0.06"/>
<rect x="513.5" y="289.0" width="2.5" height="5.0" fill="#000" />
<rect x="513.5" y="294.0" width="2.5" height="53.0" fill="#ff0000" fill-opacity="0.04"/>
<rect x="516.0" y="289.0" width="2.5" height="6.0" fill="#000" />
<rect x="516.0" y="295.0" width="2.5" height="52.0" fill="#000" fill-opacity="0.07"/>
<rect x="518.5" y="289.0" width="2.5" height="5.0" fill="#000" />
<rect x="518.5" y="294.0" width="2.5" height="53.0" fill="#000" fill-opacity="0.04"/>
<rect x="521.0" y="289.0" width="2.5" height="5.0" fill="#000" />
<rect x="521.0" y="294.0" width="2.5" height="53.0" fill="#000" fill-opacity="0.06"/>
<rect x="523.5" y="289.0" width="2.5" height="5.0" fill="#000" />
<rect x="523.5" y="294.0" width="2.5" height="53.0" fill="#000" fill-opacity="0.02"/>
<rect x="526.0" y="289.0" width="2.5" height="5.0" fill="#000" />
<rect x="526.0" y="294.0" width="2.5" height="53.0" fill="#000" fill-opacity="0.04"/>
<rect x="528.5" y="289.0" width="2.5" height="5.0" fill="#000" />
<rect x="528.5" y="294.0" width="2.5" height="53.0" fill="#ff0000" fill-opacity="0.00"/>
<rect x="531.0" y="289.0" width="2.5" height="5.0" fill="#000" />
<rect x="531.0" y="294.0" width="2.5" height="53.0" fill="#000" fill-opacity="0.05"/>
<rect x="533.5" y="289.0" width="2.5" height="5.0" fill="#000" />
<rect x="533.5" y="294.0" width="2.5" height="53.0" fill="#ff0000" fill-opacity="0.04"/>
<rect x="536.0" y="289.0" width="2.5" height="5.0" fill="#000" />
<rect x="536.0" y="294.0" width="2.5" height="53.0" fill="#000" fill-opacity="0.06"/>
<rect x="538.5" y="289.0" width="2.5" height="5.0" fill="#000" />
<rect x="538.5" y="294.0" width="2.5" height="53.0" fill="#000" fill-opacity="0.05"/>
<rect x="541.0" y="289.0" width="2.5" height="5.0" fill="#000" />
<rect x="541.0" y="294.0" width="2.5" height="53.0" fill="#000" fill-opacity="0.05"/>
<rect x="543.5" y="289.0" width="2.5" height="5.0" fill="#000" />
<rect x="543.5" y="294.0" width="2.5" height="53.0" fill="#000" fill-opacity="0.06"/>
<rect x="546.0" y="289.0" width="2.5" height="5.0" fill="#000" />
<rect x="546.0" y="294.0" width="2.5" height="53.0" fill="#000" fill-opacity="0.03"/>
<rect x="548.5" y="289.0" width="2.5" height="5.0" fill="#000" />
<rect x="548.5" y="294.0" width="2.5" height="53.0" fill="#ff0000" fill-opacity="0.06"/>
<rect x="551.0" y="289.0" width="2.5" height="5.0" fill="#000" />
<rect x="551.0" y="294.0" width="2.5" height="53.0" fill="#ff0000" fill-opacity="0.03"/>
<rect x="553.5" y="289.0" width="2.5" height="5.0" fill="#000" />
<rect x="553.5" y="294.0" width="2.5" height="53.0" fill="#000" fill-opacity="0.02"/>
<rect x="556.0" y="289.0" width="2.5" height="5.0" fill="#000" />
<rect x="556.0" y="294.0" width="2.5" height="53.0" fill="#ff0000" fill-opacity="0.01"/>
<rect x="558.5" y="289.0" width="2.5" height="5.0" fill="#000" />
<rect x="558.5" y="294.0" width="2.5" height="53.0" fill="#000" fill-opacity="0.04"/>
<rect x="561.0" y="289.0" width="2.5" height="5.0" fill="#000" />
<rect x="561.0" y="294.0" width="2.5" height="53.0" fill="#ff0000" fill-opacity="0.02"/>
<rect x="563.5" y="289.0" width="2.5" height="4.0" fill="#000" />
<rect x="563.5" y="293.0" width="2.5" height="54.0" fill="#ff0000" fill-opacity="0.02"/>
<rect x="566.0" y="289.0" width="2.5" height="5.0" fill="#000" />
<rect x="566.0" y="294.0" width="2.5" height="53.0" fill="#ff0000" fill-opacity="0.03"/>
<rect x="568.5" y="289.0" width="2.5" height="5.0" fill="#000" />
<rect x="568.5" y="294.0" width="2.5" height="53.0" fill="#000" fill-opacity="0.03"/>
<rect x="571.0" y="289.0" width="2.5" height="5.0" fill="#000" />
<rect x="571.0" y="294.0" width="2.5" height="53.0" fill="#000" fill-opacity="0.01"/>
<rect x="573.5" y="289.0" width="2.5" height="4.0" fill="#000" />
<rect x="573.5" y="293.0" width="2.5" height="54.0" fill="#ff0000" fill-opacity="0.01"/>
<rect x="576.0" y="289.0" width="2.5" height="4.0" fill="#000" />
<rect x="576.0" y="293.0" width="2.5" height="54.0" fill="#000" fill-opacity="0.07"/>
<rect x="578.5" y="289.0" width="2.5" height="4.0" fill="#000" />
<rect x="578.5" y="293.0" width="2.5" height="54.0" fill="#ff0000" fill-opacity="0.03"/>
<rect x="581.0" y="289.0" width="2.5" height="4.0" fill="#000" />
<rect x="581.0" y="293.0" width="2.5" height="54.0" fill="#000" fill-opacity="0.03"/>
<rect x="583.5" y="289.0" width="2.5" height="3.0" fill="#000" />
<rect x="583.5" y="292.0" width="2.5" height="55.0" fill="#000" fill-opacity="0.04"/>
<rect x="586.0" y="289.0" width="2.5" height="3.0" fill="#000" />
<rect x="586.0" y="292.0" width="2.5" height="55.0" fill="#000" fill-opacity="0.05"/>
<rect x="588.5" y="289.0" width="2.5" height="3.0" fill="#000" />
<rect x="588.5" y="292.0" width="2.5" height="55.0" fill="#000" fill-opacity="0.06"/>
<rect x="591.0" y="289.0" width="2.5" height="3.0" fill="#000" />
<rect x="591.0" y="292.0" width="2.5" height="55.0" fill="#000" fill-opacity="0.02"/>
<rect x="593.5" y="289.0" width="2.5" height="4.0" fill="#000" />
<rect x="593.5" y="293.0" width="2.5" height="54.0" fill="#000" fill-opacity="0.05"/>
<rect x="596.0" y="289.0" width="2.5" height="4.0" fill="#000" />
<rect x="596.0" y="293.0" width="2.5" height="54.0" fill="#ff0000" fill-opacity="0.03"/>
<rect x="598.5" y="289.0" width="2.5" height="4.0" fill="#000" />
<rect x="598.5" y="293.0" width="2.5" height="54.0" fill="#000" fill-opacity="0.04"/>
<rect x="601.0" y="289.0" width="2.5" height="4.0" fill="#000" />
<rect x="601.0" y="293.0" width="2.5" height="54.0" fill="#ff0000" fill-opacity="0.07"/>
<rect x="603.5" y="289.0" width="2.5" height="3.0" fill="#000" />
<rect x="603.5" y="292.0" width="2.5" height="55.0" fill="#000" fill-opacity="0.01"/>
<rect x="606.0" y="289.0" width="2.5" height="3.0" fill="#000" />
<rect x="606.0" y="292.0" width="2.5" height="55.0" fill="#000" fill-opacity="0.06"/>
<rect x="608.5" y="289.0" width="2.5" height="3.0" fill="#000" />
<rect x="608.5" y="292.0" width="2.5" height="55.0" fill="#ff0000" fill-opacity="0.03"/>
<rect x="611.0" y="289.0" width="2.5" height="3.0" fill="#000" />
<rect x="611.0" y="292.0" width="2.5" height="55.0" fill="#ff0000" fill-opacity="0.06"/>
<rect x="613.5" y="289.0" width="2.5" height="3.0" fill="#000" />
<rect x="613.5" y="292.0" width="2.5" height="55.0" fill="#000" fill-opacity="0.07"/>
<rect x="616.0" y="289.0" width="2.5" height="3.0" fill="#000" />
<rect x="616.0" y="292.0" width="2.5" height="55.0" fill="#000" fill-opacity="0.02"/>
<rect x="618.5" y="289.0" width="2.5" height="3.0" fill="#000" />
<rect x="618.5" y="292.0" width="2.5" height="55.0" fill="#000" fill-opacity="0.06"/>
<rect x="621.0" y="289.0" width="2.5" height="3.0" fill="#000" />
<rect x="621.0" y="292.0" width="2.5" height="55.0" fill="#ff0000" fill-opacity="0.03"/>
<rect x="623.5" y="289.0" width="2.5" height="3.0" fill="#000" />
<rect x="623.5" y="292.0" width="2.5" height="55.0" fill="#000" fill-opacity="0.04"/>
<rect x="626.0" y="289.0" width="2.5" height="3.0" fill="#000" />
<rect x="626.0" y="292.0" width="2.5" height="55.0" fill="#ff0000" fill-opacity="0.06"/>
<rect x="628.5" y="289.0" width="2.5" height="3.0" fill="#000" />
<rect x="628.5" y="292.0" width="2.5" height="55.0" fill="#000" fill-opacity="0.00"/>
<rect x="631.0" y="289.0" width="2.5" height="3.0" fill="#000" />
<rect x="631.0" y="292.0" width="2.5" height="55.0" fill="#ff0000" fill-opacity="0.06"/>
<rect x="633.5" y="289.0" width="2.5" height="3.0" fill="#000" />
<rect x="633.5" y="292.0" width="2.5" height="55.0" fill="#ff0000" fill-opacity="0.00"/>
<rect x="636.0" y="289.0" width="2.5" height="3.0" fill="#000" />
<rect x="636.0" y="292.0" width="2.5" height="55.0" fill="#000" fill-opacity="0.05"/>
<rect x="638.5" y="289.0" width="2.5" height="4.0" fill="#000" />
<rect x="638.5" y="293.0" width="2.5" height="54.0" fill="#000" fill-opacity="0.04"/>
<rect x="641.0" y="289.0" width="2.5" height="4.0" fill="#000" />
<rect x="641.0" y="293.0" width="2.5" height="54.0" fill="#ff0000" fill-opacity="0.06"/>
<rect x="643.5" y="289.0" width="2.5" height="4.0" fill="#000" />
<rect x="643.5" y="293.0" width="2.5" height="54.0" fill="#ff0000" fill-opacity="0.05"/>
<rect x="646.0" y="289.0" width="2.5" height="4.0" fill="#000" />
<rect x="646.0" y="293.0" width="2.5" height="54.0" fill="#ff0000" fill-opacity="0.01"/>
<rect x="648.5" y="289.0" width="2.5" height="4.0" fill="#000" />
<rect x="648.5" y="293.0" width="2.5" height="54.0" fill="#000" fill-opacity="0.04"/>
<rect x="651.0" y="289.0" width="2.5" height="5.0" fill="#000" />
<rect x="651.0" y="294.0" width="2.5" height="53.0" fill="#ff0000" fill-opacity="0.00"/>
<rect x="653.5" y="289.0" width="2.5" height="4.0" fill="#000" />
<rect x="653.5" y="293.0" width="2.5" height="54.0" fill="#ff0000" fill-opacity="0.05"/>
<rect x="656.0" y="289.0" width="2.5" height="4.0" fill="#000" />
<rect x="656.0" y="293.0" width="2.5" height="54.0" fill="#ff0000" fill-opacity="0.01"/>
<rect x="658.5" y="289.0" width="2.5" height="4.0" fill="#000" />
<rect x="658.5" y="293.0" width="2.5" height="54.0" fill="#000" fill-opacity="0.05"/>
<rect x="661.0" y="289.0" width="2.5" height="5.0" fill="#000" />
<rect x="661.0" y="294.0" width="2.5" height="53.0" fill="#ff0000" fill-opacity="0.07"/>
<rect x="663.5" y="289.0" width="2.5" height="4.0" fill="#000" />
<rect x="663.5" y="293.0" width="2.5" height="54.0" fill="#ff0000" fill-opacity="0.02"/>
<rect x="666.0" y="289.0" width="2.5" height="4.0" fill="#000" />
<rect x="666.0" y="293.0" width="2.5" height="54.0" fill="#000" fill-opacity="0.07"/>
<rect x="668.5" y="289.0" width="2.5" height="5.0" fill="#000" />
<rect x="668.5" y="294.0" width="2.5" height="53.0" fill="#ff0000" fill-opacity="0.01"/>
<rect x="671.0" y="289.0" width="2.5" height="4.0" fill="#000" />
<rect x="671.0" y="293.0" width="2.5" height="54.0" fill="#ff0000" fill-opacity="0.05"/>
<rect x="673.5" y="289.0" width="2.5" height="4.0" fill="#000" />
<rect x="673.5" y="293.0" width="2.5" height="54.0" fill="#000" fill-opacity="0.05"/>
<rect x="676.0" y="289.0" width="2.5" height="4.0" fill="#000" />
<rect x="676.0" y="293.0" width="2.5" height="54.0" fill="#000" fill-opacity="0.06"/>
<rect x="678.5" y="289.0" width="2.5" height="4.0" fill="#000" />
<rect x="678.5" y="293.0" width="2.5" height="54.0" fill="#000" fill-opacity="0.06"/>
<rect x="681.0" y="289.0" width="2.5" height="4.0" fill="#000" />
<rect x="681.0" y="293.0" width="2.5" height="54.0" fill="#ff0000" fill-opacity="0.03"/>
<rect x="683.5" y="289.0" width="2.5" height="5.0" fill="#000" />
<rect x="683.5" y="294.0" width="2.5" height="53.0" fill="#000" fill-opacity="0.06"/>
<rect x="686.0" y="289.0" width="2.5" height="4.0" fill="#000" />
<rect x="686.0" y="293.0" width="2.5" height="54.0" fill="#ff0000" fill-opacity="0.01"/>
<rect x="688.5" y="289.0" width="2.5" height="4.0" fill="#000" />
<rect x="688.5" y="293.0" width="2.5" height="54.0" fill="#000" fill-opacity="0.00"/>
<rect x="691.0" y="289.0" width="2.5" height="5.0" fill="#000" />
<rect x="691.0" y="294.0" width="2.5" height="53.0" fill="#000" fill-opacity="0.04"/>
<rect x="693.5" y="289.0" width="2.5" height="4.0" fill="#000" />
<rect x="693.5" y="293.0" width="2.5" height="54.0" fill="#000" fill-opacity="0.03"/>
<rect x="696.0" y="289.0" width="2.5" height="4.0" fill="#000" />
<rect x="696.0" y="293.0" width="2.5" height="54.0" fill="#000" fill-opacity="0.05"/>
<rect x="698.5" y="289.0" width="2.5" height="4.0" fill="#000" />
<rect x="698.5" y="293.0" width="2.5" height="54.0" fill="#000" fill-opacity="0.07"/>
<rect x="701.0" y="289.0" width="2.5" height="5.0" fill="#000" />
<rect x="701.0" y="294.0" width="2.5" height="53.0" fill="#000" fill-opacity="0.02"/>
<rect x="703.5" y="289.0" width="2.5" height="4.0" fill="#000" />
<rect x="703.5" y="293.0" width="2.5" height="54.0" fill="#ff0000" fill-opacity="0.06"/>
<rect x="706.0" y="289.0" width="2.5" height="4.0" fill="#000" />
<rect x="706.0" y="293.0" width="2.5" height="54.0" fill="#000" fill-opacity="0.06"/>
<rect x="708.5" y="289.0" width="2.5" height="5.0" fill="#000" />
<rect x="708.5" y="294.0" width="2.5" height="53.0" fill="#000" fill-opacity="0.02"/>
<rect x="711.0" y="289.0" width="2.5" height="4.0" fill="#000" />
<rect x="711.0" y="293.0" width="2.5" height="54.0" fill="#ff0000" fill-opacity="0.04"/>
<rect x="713.5" y="289.0" width="2.5" height="4.0" fill="#000" />
<rect x="713.5" y="293.0" width="2.5" height="54.0" fill="#000" fill-opacity="0.03"/>
<rect x="716.0" y="289.0" width="2.5" height="4.0" fill="#000" />
<rect x="716.0" y="293.0" width="2.5" height="54.0" fill="#000" fill-opacity="0.01"/>
<rect x="718.5" y="289.0" width="2.5" height="4.0" fill="#000" />
<rect x="718.5" y="293.0" width="2.5" height="54.0" fill="#000" fill-opacity="0.01"/>
<rect x="721.0" y="289.0" width="2.5" height="4.0" fill="#000" />
<rect x="721.0" y="293.0" width="2.5" height="54.0" fill="#000" fill-opacity="0.06"/>
<rect x="723.5" y="289.0" width="2.5" height="4.0" fill="#000" />
<rect x="723.5" y="293.0" width="2.5" height="54.0" fill="#000" fill-opacity="0.07"/>
<rect x="726.0" y="289.0" width="2.5" height="4.0" fill="#000" />
<rect x="726.0" y="293.0" width="2.5" height="54.0" fill="#000" fill-opacity="0.01"/>
<rect x="728.5" y="289.0" width="2.5" height="4.0" fill="#000" />
<rect x="728.5" y="293.0" width="2.5" height="54.0" fill="#ff0000" fill-opacity="0.06"/>
<rect x="731.0" y="289.0" width="2.5" height="4.0" fill="#000" />
<rect x="731.0" y="293.0" width="2.5" height="54.0" fill="#000" fill-opacity="0.02"/>
<rect x="733.5" y="289.0" width="2.5" height="4.0" fill="#000" />
<rect x="733.5" y="293.0" width="2.5" height="54.0" fill="#000" fill-opacity="0.01"/>
<rect x="736.0" y="289.0" width="2.5" height="4.0" fill="#000" />
<rect x="736.0" y="293.0" width="2.5" height="54.0" fill="#000" fill-opacity="0.02"/>
<rect x="738.5" y="289.0" width="2.5" height="4.0" fill="#000" />
<rect x="738.5" y="293.0" width="2.5" height="54.0" fill="#ff0000" fill-opacity="0.03"/>
<rect x="741.0" y="289.0" width="2.0" height="4.0" fill="#000" />
<rect x="741.0" y="293.0" width="2.0" height="54.0" fill="#000" fill-opacity="0.07"/>
<defs><linearGradient id="glwh" x1="0" y1="0" x2="1" y2="0"><stop offset="0" stop-color="#000" stop-opacity="0.3"/><stop offset="0.5" stop-color="#000" stop-opacity="0.1"/><stop offset="1" stop-color="#000" stop-opacity="0"/></linearGradient></defs>
<rect x="441.0" y="290.0" width="302.0" height="57.0" fill="url(#glwh)" />
<rect x="441.0" y="347.0" width="302.0" height="6.5" fill="#000" />
<rect x="436.0" y="353.5" width="5.0" height="1.0" fill="#000" />
<rect x="436.0" y="328.5" width="5.0" height="1.0" fill="#000" />
<rect x="436.0" y="301.5" width="5.0" height="1.0" fill="#000" />
<rect x="436.0" y="274.5" width="5.0" height="1.0" fill="#000" />
<rect x="436.0" y="247.5" width="5.0" height="1.0" fill="#000" />
<rect x="436.0" y="222.5" width="5.0" height="1.0" fill="#000" />
<rect x="441.0" y="353.5" width="1.3" height="11.0" fill="#000" />
<rect x="466.0" y="353.5" width="1.3" height="6.0" fill="#000" />
<rect x="491.0" y="353.5" width="1.3" height="11.0" fill="#000" />
<rect x="516.0" y="353.5" width="1.3" height="6.0" fill="#000" />
<rect x="542.0" y="353.5" width="1.3" height="11.0" fill="#000" />
<rect x="567.0" y="353.5" width="1.3" height="6.0" fill="#000" />
<rect x="592.0" y="353.5" width="1.3" height="11.0" fill="#000" />
<rect x="617.0" y="353.5" width="1.3" height="6.0" fill="#000" />
<rect x="642.0" y="353.5" width="1.3" height="11.0" fill="#000" />
<rect x="668.0" y="353.5" width="1.3" height="6.0" fill="#000" />
<rect x="693.0" y="353.5" width="1.3" height="11.0" fill="#000" />
<rect x="718.0" y="353.5" width="1.3" height="6.0" fill="#000" />
<rect x="743.0" y="353.5" width="1.3" height="11.0" fill="#000" />
<rect x="746.0" y="221.0" width="6.0" height="137.0" fill="url(#glwc)" />
<rect x="753.0" y="354.5" width="7.0" height="1.0" fill="#000" />
<rect x="753.0" y="288.5" width="7.0" height="1.0" fill="#000" />
<rect x="753.0" y="222.5" width="7.0" height="1.0" fill="#000" />
<rect x="441.0" y="399.0" width="302.0" height="132.7" fill="#000" />
<rect x="441.0" y="401.0" width="302.0" height="128.0" fill="url(#gtemp)" />
<rect x="441.0" y="401.0" width="2.5" height="126.0" fill="#fff" fill-opacity="0.03"/>
<rect x="443.5" y="401.0" width="2.5" height="126.0" fill="#000" fill-opacity="0.05"/>
<rect x="446.0" y="401.0" width="2.5" height="126.0" fill="#000" fill-opacity="0.03"/>
<rect x="448.5" y="401.0" width="2.5" height="126.0" fill="#000" fill-opacity="0.02"/>
<rect x="451.0" y="401.0" width="2.5" height="126.0" fill="#fff" fill-opacity="0.03"/>
<rect x="453.5" y="401.0" width="2.5" height="126.0" fill="#fff" fill-opacity="0.04"/>
<rect x="456.0" y="401.0" width="2.5" height="126.0" fill="#fff" fill-opacity="0.04"/>
<rect x="458.5" y="401.0" width="2.5" height="126.0" fill="#fff" fill-opacity="0.06"/>
<rect x="461.0" y="401.0" width="2.5" height="126.0" fill="#fff" fill-opacity="0.04"/>
<rect x="463.5" y="401.0" width="2.5" height="126.0" fill="#fff" fill-opacity="0.04"/>
<rect x="466.0" y="401.0" width="2.5" height="126.0" fill="#000" fill-opacity="0.01"/>
<rect x="468.5" y="401.0" width="2.5" height="126.0" fill="#fff" fill-opacity="0.00"/>
<rect x="471.0" y="401.0" width="2.5" height="126.0" fill="#000" fill-opacity="0.01"/>
<rect x="473.5" y="401.0" width="2.5" height="126.0" fill="#fff" fill-opacity="0.05"/>
<rect x="476.0" y="401.0" width="2.5" height="126.0" fill="#fff" fill-opacity="0.03"/>
<rect x="478.5" y="401.0" width="2.5" height="126.0" fill="#000" fill-opacity="0.04"/>
<rect x="481.0" y="401.0" width="2.5" height="126.0" fill="#000" fill-opacity="0.02"/>
<rect x="483.5" y="401.0" width="2.5" height="126.0" fill="#fff" fill-opacity="0.01"/>
<rect x="486.0" y="401.0" width="2.5" height="126.0" fill="#fff" fill-opacity="0.05"/>
<rect x="488.5" y="401.0" width="2.5" height="126.0" fill="#fff" fill-opacity="0.01"/>
<rect x="491.0" y="401.0" width="2.5" height="126.0" fill="#fff" fill-opacity="0.02"/>
<rect x="493.5" y="401.0" width="2.5" height="126.0" fill="#fff" fill-opacity="0.06"/>
<rect x="496.0" y="401.0" width="2.5" height="126.0" fill="#fff" fill-opacity="0.05"/>
<rect x="498.5" y="401.0" width="2.5" height="126.0" fill="#fff" fill-opacity="0.05"/>
<rect x="501.0" y="401.0" width="2.5" height="126.0" fill="#000" fill-opacity="0.05"/>
<rect x="503.5" y="401.0" width="2.5" height="126.0" fill="#000" fill-opacity="0.06"/>
<rect x="506.0" y="401.0" width="2.5" height="126.0" fill="#fff" fill-opacity="0.04"/>
<rect x="508.5" y="401.0" width="2.5" height="126.0" fill="#fff" fill-opacity="0.05"/>
<rect x="511.0" y="401.0" width="2.5" height="126.0" fill="#000" fill-opacity="0.01"/>
<rect x="513.5" y="401.0" width="2.5" height="126.0" fill="#000" fill-opacity="0.05"/>
<rect x="516.0" y="401.0" width="2.5" height="126.0" fill="#fff" fill-opacity="0.04"/>
<rect x="518.5" y="401.0" width="2.5" height="126.0" fill="#000" fill-opacity="0.03"/>
<rect x="521.0" y="401.0" width="2.5" height="126.0" fill="#000" fill-opacity="0.06"/>
<rect x="523.5" y="401.0" width="2.5" height="126.0" fill="#000" fill-opacity="0.01"/>
<rect x="526.0" y="401.0" width="2.5" height="126.0" fill="#fff" fill-opacity="0.03"/>
<rect x="528.5" y="401.0" width="2.5" height="126.0" fill="#fff" fill-opacity="0.01"/>
<rect x="531.0" y="401.0" width="2.5" height="126.0" fill="#fff" fill-opacity="0.03"/>
<rect x="533.5" y="401.0" width="2.5" height="126.0" fill="#fff" fill-opacity="0.02"/>
<rect x="536.0" y="401.0" width="2.5" height="126.0" fill="#000" fill-opacity="0.03"/>
<rect x="538.5" y="401.0" width="2.5" height="126.0" fill="#fff" fill-opacity="0.04"/>
<rect x="541.0" y="401.0" width="2.5" height="126.0" fill="#fff" fill-opacity="0.05"/>
<rect x="543.5" y="401.0" width="2.5" height="126.0" fill="#000" fill-opacity="0.06"/>
<rect x="546.0" y="401.0" width="2.5" height="126.0" fill="#fff" fill-opacity="0.01"/>
<rect x="548.5" y="401.0" width="2.5" height="126.0" fill="#fff" fill-opacity="0.06"/>
<rect x="551.0" y="401.0" width="2.5" height="126.0" fill="#fff" fill-opacity="0.03"/>
<rect x="553.5" y="401.0" width="2.5" height="126.0" fill="#fff" fill-opacity="0.00"/>
<rect x="556.0" y="401.0" width="2.5" height="126.0" fill="#fff" fill-opacity="0.01"/>
<rect x="558.5" y="401.0" width="2.5" height="126.0" fill="#fff" fill-opacity="0.04"/>
<rect x="561.0" y="401.0" width="2.5" height="126.0" fill="#000" fill-opacity="0.06"/>
<rect x="563.5" y="401.0" width="2.5" height="126.0" fill="#000" fill-opacity="0.02"/>
<rect x="566.0" y="401.0" width="2.5" height="126.0" fill="#fff" fill-opacity="0.04"/>
<rect x="568.5" y="401.0" width="2.5" height="126.0" fill="#000" fill-opacity="0.05"/>
<rect x="571.0" y="401.0" width="2.5" height="126.0" fill="#000" fill-opacity="0.02"/>
<rect x="573.5" y="401.0" width="2.5" height="126.0" fill="#000" fill-opacity="0.02"/>
<rect x="576.0" y="401.0" width="2.5" height="126.0" fill="#000" fill-opacity="0.01"/>
<rect x="578.5" y="401.0" width="2.5" height="126.0" fill="#fff" fill-opacity="0.00"/>
<rect x="581.0" y="401.0" width="2.5" height="126.0" fill="#fff" fill-opacity="0.03"/>
<rect x="583.5" y="401.0" width="2.5" height="126.0" fill="#fff" fill-opacity="0.03"/>
<rect x="586.0" y="401.0" width="2.5" height="126.0" fill="#000" fill-opacity="0.05"/>
<rect x="588.5" y="401.0" width="2.5" height="126.0" fill="#000" fill-opacity="0.04"/>
<rect x="591.0" y="401.0" width="2.5" height="126.0" fill="#000" fill-opacity="0.06"/>
<rect x="593.5" y="401.0" width="2.5" height="126.0" fill="#fff" fill-opacity="0.04"/>
<rect x="596.0" y="401.0" width="2.5" height="126.0" fill="#fff" fill-opacity="0.00"/>
<rect x="598.5" y="401.0" width="2.5" height="126.0" fill="#fff" fill-opacity="0.06"/>
<rect x="601.0" y="401.0" width="2.5" height="126.0" fill="#fff" fill-opacity="0.03"/>
<rect x="603.5" y="401.0" width="2.5" height="126.0" fill="#000" fill-opacity="0.02"/>
<rect x="606.0" y="401.0" width="2.5" height="126.0" fill="#000" fill-opacity="0.04"/>
<rect x="608.5" y="401.0" width="2.5" height="126.0" fill="#fff" fill-opacity="0.00"/>
<rect x="611.0" y="401.0" width="2.5" height="126.0" fill="#000" fill-opacity="0.01"/>
<rect x="613.5" y="401.0" width="2.5" height="126.0" fill="#000" fill-opacity="0.01"/>
<rect x="616.0" y="401.0" width="2.5" height="126.0" fill="#000" fill-opacity="0.02"/>
<rect x="618.5" y="401.0" width="2.5" height="126.0" fill="#fff" fill-opacity="0.03"/>
<rect x="621.0" y="401.0" width="2.5" height="126.0" fill="#fff" fill-opacity="0.06"/>
<rect x="623.5" y="401.0" width="2.5" height="126.0" fill="#fff" fill-opacity="0.04"/>
<rect x="626.0" y="401.0" width="2.5" height="126.0" fill="#000" fill-opacity="0.05"/>
<rect x="628.5" y="401.0" width="2.5" height="126.0" fill="#000" fill-opacity="0.01"/>
<rect x="631.0" y="401.0" width="2.5" height="126.0" fill="#fff" fill-opacity="0.02"/>
<rect x="633.5" y="401.0" width="2.5" height="126.0" fill="#000" fill-opacity="0.02"/>
<rect x="636.0" y="401.0" width="2.5" height="126.0" fill="#000" fill-opacity="0.06"/>
<rect x="638.5" y="401.0" width="2.5" height="126.0" fill="#000" fill-opacity="0.06"/>
<rect x="641.0" y="401.0" width="2.5" height="126.0" fill="#fff" fill-opacity="0.04"/>
<rect x="643.5" y="401.0" width="2.5" height="126.0" fill="#fff" fill-opacity="0.04"/>
<rect x="646.0" y="401.0" width="2.5" height="126.0" fill="#000" fill-opacity="0.02"/>
<rect x="648.5" y="401.0" width="2.5" height="126.0" fill="#fff" fill-opacity="0.02"/>
<rect x="651.0" y="401.0" width="2.5" height="126.0" fill="#fff" fill-opacity="0.01"/>
<rect x="653.5" y="401.0" width="2.5" height="126.0" fill="#000" fill-opacity="0.04"/>
<rect x="656.0" y="401.0" width="2.5" height="126.0" fill="#fff" fill-opacity="0.01"/>
<rect x="658.5" y="401.0" width="2.5" height="126.0" fill="#fff" fill-opacity="0.03"/>
<rect x="661.0" y="401.0" width="2.5" height="126.0" fill="#fff" fill-opacity="0.02"/>
<rect x="663.5" y="401.0" width="2.5" height="126.0" fill="#fff" fill-opacity="0.00"/>
<rect x="666.0" y="401.0" width="2.5" height="126.0" fill="#fff" fill-opacity="0.03"/>
<rect x="668.5" y="401.0" width="2.5" height="126.0" fill="#fff" fill-opacity="0.05"/>
<rect x="671.0" y="401.0" width="2.5" height="126.0" fill="#fff" fill-opacity="0.05"/>
<rect x="673.5" y="401.0" width="2.5" height="126.0" fill="#fff" fill-opacity="0.01"/>
<rect x="676.0" y="401.0" width="2.5" height="126.0" fill="#fff" fill-opacity="0.02"/>
<rect x="678.5" y="401.0" width="2.5" height="126.0" fill="#fff" fill-opacity="0.05"/>
<rect x="681.0" y="401.0" width="2.5" height="126.0" fill="#000" fill-opacity="0.04"/>
<rect x="683.5" y="401.0" width="2.5" height="126.0" fill="#fff" fill-opacity="0.03"/>
<rect x="686.0" y="401.0" width="2.5" height="126.0" fill="#000" fill-opacity="0.06"/>
<rect x="688.5" y="401.0" width="2.5" height="126.0" fill="#fff" fill-opacity="0.01"/>
<rect x="691.0" y="401.0" width="2.5" height="126.0" fill="#fff" fill-opacity="0.00"/>
<rect x="693.5" y="401.0" width="2.5" height="126.0" fill="#000" fill-opacity="0.01"/>
<rect x="696.0" y="401.0" width="2.5" height="126.0" fill="#fff" fill-opacity="0.03"/>
<rect x="698.5" y="401.0" width="2.5" height="126.0" fill="#000" fill-opacity="0.03"/>
<rect x="701.0" y="401.0" width="2.5" height="126.0" fill="#fff" fill-opacity="0.01"/>
<rect x="703.5" y="401.0" width="2.5" height="126.0" fill="#fff" fill-opacity="0.02"/>
<rect x="706.0" y="401.0" width="2.5" height="126.0" fill="#000" fill-opacity="0.05"/>
<rect x="708.5" y="401.0" width="2.5" height="126.0" fill="#fff" fill-opacity="0.03"/>
<rect x="711.0" y="401.0" width="2.5" height="126.0" fill="#fff" fill-opacity="0.00"/>
<rect x="713.5" y="401.0" width="2.5" height="126.0" fill="#000" fill-opacity="0.05"/>
<rect x="716.0" y="401.0" width="2.5" height="126.0" fill="#000" fill-opacity="0.01"/>
<rect x="718.5" y="401.0" width="2.5" height="126.0" fill="#fff" fill-opacity="0.00"/>
<rect x="721.0" y="401.0" width="2.5" height="126.0" fill="#fff" fill-opacity="0.02"/>
<rect x="723.5" y="401.0" width="2.5" height="126.0" fill="#000" fill-opacity="0.04"/>
<rect x="726.0" y="401.0" width="2.5" height="126.0" fill="#fff" fill-opacity="0.03"/>
<rect x="728.5" y="401.0" width="2.5" height="126.0" fill="#fff" fill-opacity="0.04"/>
<rect x="731.0" y="401.0" width="2.5" height="126.0" fill="#fff" fill-opacity="0.04"/>
<rect x="733.5" y="401.0" width="2.5" height="126.0" fill="#fff" fill-opacity="0.05"/>
<rect x="736.0" y="401.0" width="2.5" height="126.0" fill="#fff" fill-opacity="0.01"/>
<rect x="738.5" y="401.0" width="2.5" height="126.0" fill="#fff" fill-opacity="0.01"/>
<rect x="741.0" y="401.0" width="2.0" height="126.0" fill="#000" fill-opacity="0.04"/>
<rect x="441.0" y="471.0" width="3.0" height="1.0" fill="#ff0000" />
<rect x="444.0" y="472.0" width="3.0" height="1.0" fill="#ff0000" />
<rect x="446.0" y="475.0" width="3.0" height="1.0" fill="#ff0000" />
<rect x="448.0" y="473.0" width="3.0" height="1.0" fill="#ff0000" />
<rect x="451.0" y="472.0" width="3.0" height="1.0" fill="#ff0000" />
<rect x="454.0" y="471.0" width="3.0" height="1.0" fill="#ff0000" />
<rect x="456.0" y="475.0" width="3.0" height="1.0" fill="#ff0000" />
<rect x="458.0" y="473.0" width="3.0" height="1.0" fill="#ff0000" />
<rect x="461.0" y="474.0" width="3.0" height="1.0" fill="#ff0000" />
<rect x="464.0" y="476.0" width="3.0" height="1.0" fill="#ff0000" />
<rect x="466.0" y="475.0" width="3.0" height="1.0" fill="#ff0000" />
<rect x="468.0" y="477.0" width="3.0" height="1.0" fill="#ff0000" />
<rect x="471.0" y="474.0" width="3.0" height="1.0" fill="#ff0000" />
<rect x="474.0" y="476.0" width="3.0" height="1.0" fill="#ff0000" />
<rect x="476.0" y="475.0" width="3.0" height="1.0" fill="#ff0000" />
<rect x="478.0" y="472.0" width="3.0" height="1.0" fill="#ff0000" />
<rect x="481.0" y="474.0" width="3.0" height="1.0" fill="#ff0000" />
<rect x="484.0" y="472.0" width="3.0" height="1.0" fill="#ff0000" />
<rect x="486.0" y="471.0" width="3.0" height="1.0" fill="#ff0000" />
<rect x="488.0" y="474.0" width="3.0" height="1.0" fill="#ff0000" />
<rect x="491.0" y="472.0" width="3.0" height="1.0" fill="#ff0000" />
<rect x="494.0" y="476.0" width="3.0" height="1.0" fill="#ff0000" />
<rect x="496.0" y="471.0" width="3.0" height="1.0" fill="#ff0000" />
<rect x="498.0" y="472.0" width="3.0" height="1.0" fill="#ff0000" />
<rect x="501.0" y="473.0" width="3.0" height="1.0" fill="#ff0000" />
<rect x="504.0" y="472.0" width="3.0" height="1.0" fill="#ff0000" />
<rect x="506.0" y="473.0" width="3.0" height="1.0" fill="#ff0000" />
<rect x="508.0" y="471.0" width="3.0" height="1.0" fill="#ff0000" />
<rect x="511.0" y="470.0" width="3.0" height="1.0" fill="#ff0000" />
<rect x="514.0" y="469.0" width="3.0" height="1.0" fill="#ff0000" />
<rect x="516.0" y="470.0" width="3.0" height="1.0" fill="#ff0000" />
<rect x="518.0" y="475.0" width="3.0" height="1.0" fill="#ff0000" />
<rect x="521.0" y="473.0" width="3.0" height="1.0" fill="#ff0000" />
<rect x="524.0" y="473.0" width="3.0" height="1.0" fill="#ff0000" />
<rect x="526.0" y="471.0" width="3.0" height="1.0" fill="#ff0000" />
<rect x="528.0" y="472.0" width="3.0" height="1.0" fill="#ff0000" />
<rect x="531.0" y="473.0" width="3.0" height="1.0" fill="#ff0000" />
<rect x="534.0" y="470.0" width="3.0" height="1.0" fill="#ff0000" />
<rect x="536.0" y="471.0" width="3.0" height="1.0" fill="#ff0000" />
<rect x="538.0" y="471.0" width="3.0" height="1.0" fill="#ff0000" />
<rect x="541.0" y="475.0" width="3.0" height="1.0" fill="#ff0000" />
<rect x="544.0" y="471.0" width="3.0" height="1.0" fill="#ff0000" />
<rect x="546.0" y="475.0" width="3.0" height="1.0" fill="#ff0000" />
<rect x="548.0" y="472.0" width="3.0" height="1.0" fill="#ff0000" />
<rect x="551.0" y="477.0" width="3.0" height="1.0" fill="#ff0000" />
<rect x="554.0" y="473.0" width="3.0" height="1.0" fill="#ff0000" />
<rect x="556.0" y="474.0" width="3.0" height="1.0" fill="#ff0000" />
<rect x="558.0" y="476.0" width="3.0" height="1.0" fill="#ff0000" />
<rect x="561.0" y="475.0" width="3.0" height="1.0" fill="#ff0000" />
<rect x="564.0" y="475.0" width="3.0" height="1.0" fill="#ff0000" />
<rect x="566.0" y="472.0" width="3.0" height="1.0" fill="#ff0000" />
<rect x="568.0" y="476.0" width="3.0" height="1.0" fill="#ff0000" />
<rect x="571.0" y="477.0" width="3.0" height="1.0" fill="#ff0000" />
<rect x="574.0" y="474.0" width="3.0" height="1.0" fill="#ff0000" />
<rect x="576.0" y="473.0" width="3.0" height="1.0" fill="#ff0000" />
<rect x="578.0" y="472.0" width="3.0" height="1.0" fill="#ff0000" />
<rect x="581.0" y="476.0" width="3.0" height="1.0" fill="#ff0000" />
<rect x="584.0" y="474.0" width="3.0" height="1.0" fill="#ff0000" />
<rect x="586.0" y="474.0" width="3.0" height="1.0" fill="#ff0000" />
<rect x="588.0" y="471.0" width="3.0" height="1.0" fill="#ff0000" />
<rect x="591.0" y="476.0" width="3.0" height="1.0" fill="#ff0000" />
<rect x="594.0" y="475.0" width="3.0" height="1.0" fill="#ff0000" />
<rect x="596.0" y="473.0" width="3.0" height="1.0" fill="#ff0000" />
<rect x="598.0" y="476.0" width="3.0" height="1.0" fill="#ff0000" />
<rect x="601.0" y="471.0" width="3.0" height="1.0" fill="#ff0000" />
<rect x="604.0" y="474.0" width="3.0" height="1.0" fill="#ff0000" />
<rect x="606.0" y="471.0" width="3.0" height="1.0" fill="#ff0000" />
<rect x="608.0" y="475.0" width="3.0" height="1.0" fill="#ff0000" />
<rect x="611.0" y="472.0" width="3.0" height="1.0" fill="#ff0000" />
<rect x="614.0" y="475.0" width="3.0" height="1.0" fill="#ff0000" />
<rect x="616.0" y="472.0" width="3.0" height="1.0" fill="#ff0000" />
<rect x="618.0" y="473.0" width="3.0" height="1.0" fill="#ff0000" />
<rect x="621.0" y="474.0" width="3.0" height="1.0" fill="#ff0000" />
<rect x="624.0" y="470.0" width="3.0" height="1.0" fill="#ff0000" />
<rect x="626.0" y="472.0" width="3.0" height="1.0" fill="#ff0000" />
<rect x="628.0" y="471.0" width="3.0" height="1.0" fill="#ff0000" />
<rect x="631.0" y="474.0" width="3.0" height="1.0" fill="#ff0000" />
<rect x="634.0" y="471.0" width="3.0" height="1.0" fill="#ff0000" />
<rect x="636.0" y="472.0" width="3.0" height="1.0" fill="#ff0000" />
<rect x="638.0" y="472.0" width="3.0" height="1.0" fill="#ff0000" />
<rect x="641.0" y="475.0" width="3.0" height="1.0" fill="#ff0000" />
<rect x="644.0" y="471.0" width="3.0" height="1.0" fill="#ff0000" />
<rect x="646.0" y="473.0" width="3.0" height="1.0" fill="#ff0000" />
<rect x="648.0" y="472.0" width="3.0" height="1.0" fill="#ff0000" />
<rect x="651.0" y="472.0" width="3.0" height="1.0" fill="#ff0000" />
<rect x="654.0" y="472.0" width="3.0" height="1.0" fill="#ff0000" />
<rect x="656.0" y="473.0" width="3.0" height="1.0" fill="#ff0000" />
<rect x="658.0" y="474.0" width="3.0" height="1.0" fill="#ff0000" />
<rect x="661.0" y="471.0" width="3.0" height="1.0" fill="#ff0000" />
<rect x="664.0" y="474.0" width="3.0" height="1.0" fill="#ff0000" />
<rect x="666.0" y="471.0" width="3.0" height="1.0" fill="#ff0000" />
<rect x="668.0" y="474.0" width="3.0" height="1.0" fill="#ff0000" />
<rect x="671.0" y="477.0" width="3.0" height="1.0" fill="#ff0000" />
<rect x="674.0" y="472.0" width="3.0" height="1.0" fill="#ff0000" />
<rect x="676.0" y="474.0" width="3.0" height="1.0" fill="#ff0000" />
<rect x="678.0" y="473.0" width="3.0" height="1.0" fill="#ff0000" />
<rect x="681.0" y="476.0" width="3.0" height="1.0" fill="#ff0000" />
<rect x="684.0" y="473.0" width="3.0" height="1.0" fill="#ff0000" />
<rect x="686.0" y="470.0" width="3.0" height="1.0" fill="#ff0000" />
<rect x="688.0" y="471.0" width="3.0" height="1.0" fill="#ff0000" />
<rect x="691.0" y="474.0" width="3.0" height="1.0" fill="#ff0000" />
<rect x="694.0" y="474.0" width="3.0" height="1.0" fill="#ff0000" />
<rect x="696.0" y="475.0" width="3.0" height="1.0" fill="#ff0000" />
<rect x="698.0" y="472.0" width="3.0" height="1.0" fill="#ff0000" />
<rect x="701.0" y="474.0" width="3.0" height="1.0" fill="#ff0000" />
<rect x="704.0" y="471.0" width="3.0" height="1.0" fill="#ff0000" />
<rect x="706.0" y="475.0" width="3.0" height="1.0" fill="#ff0000" />
<rect x="708.0" y="473.0" width="3.0" height="1.0" fill="#ff0000" />
<rect x="711.0" y="471.0" width="3.0" height="1.0" fill="#ff0000" />
<rect x="714.0" y="473.0" width="3.0" height="1.0" fill="#ff0000" />
<rect x="716.0" y="476.0" width="3.0" height="1.0" fill="#ff0000" />
<rect x="718.0" y="471.0" width="3.0" height="1.0" fill="#ff0000" />
<rect x="721.0" y="470.0" width="3.0" height="1.0" fill="#ff0000" />
<rect x="724.0" y="470.0" width="3.0" height="1.0" fill="#ff0000" />
<rect x="726.0" y="470.0" width="3.0" height="1.0" fill="#ff0000" />
<rect x="728.0" y="472.0" width="3.0" height="1.0" fill="#ff0000" />
<rect x="731.0" y="473.0" width="3.0" height="1.0" fill="#ff0000" />
<rect x="734.0" y="472.0" width="3.0" height="1.0" fill="#ff0000" />
<rect x="736.0" y="473.0" width="3.0" height="1.0" fill="#ff0000" />
<rect x="738.0" y="475.0" width="3.0" height="1.0" fill="#ff0000" />
<rect x="741.0" y="472.0" width="2.0" height="1.0" fill="#ff0000" />
<rect x="441.0" y="526.0" width="3.0" height="1.0" fill="#00ff00" />
<rect x="444.0" y="526.0" width="3.0" height="1.0" fill="#00ff00" />
<rect x="446.0" y="526.0" width="3.0" height="1.0" fill="#00ff00" />
<rect x="448.0" y="526.0" width="3.0" height="1.0" fill="#00ff00" />
<rect x="451.0" y="526.0" width="3.0" height="1.0" fill="#00ff00" />
<rect x="454.0" y="526.0" width="3.0" height="1.0" fill="#00ff00" />
<rect x="456.0" y="526.0" width="3.0" height="1.0" fill="#00ff00" />
<rect x="458.0" y="526.0" width="3.0" height="1.0" fill="#00ff00" />
<rect x="461.0" y="526.0" width="3.0" height="1.0" fill="#00ff00" />
<rect x="464.0" y="526.0" width="3.0" height="1.0" fill="#00ff00" />
<rect x="466.0" y="526.0" width="3.0" height="1.0" fill="#00ff00" />
<rect x="468.0" y="526.0" width="3.0" height="1.0" fill="#00ff00" />
<rect x="471.0" y="526.0" width="3.0" height="1.0" fill="#00ff00" />
<rect x="474.0" y="526.0" width="3.0" height="1.0" fill="#00ff00" />
<rect x="476.0" y="526.0" width="3.0" height="1.0" fill="#00ff00" />
<rect x="478.0" y="526.0" width="3.0" height="1.0" fill="#00ff00" />
<rect x="481.0" y="526.0" width="3.0" height="1.0" fill="#00ff00" />
<rect x="484.0" y="526.0" width="3.0" height="1.0" fill="#00ff00" />
<rect x="486.0" y="526.0" width="3.0" height="1.0" fill="#00ff00" />
<rect x="488.0" y="526.0" width="3.0" height="1.0" fill="#00ff00" />
<rect x="491.0" y="526.0" width="3.0" height="1.0" fill="#00ff00" />
<rect x="494.0" y="526.0" width="3.0" height="1.0" fill="#00ff00" />
<rect x="496.0" y="526.0" width="3.0" height="1.0" fill="#00ff00" />
<rect x="498.0" y="526.0" width="3.0" height="1.0" fill="#00ff00" />
<rect x="501.0" y="526.0" width="3.0" height="1.0" fill="#00ff00" />
<rect x="504.0" y="526.0" width="3.0" height="1.0" fill="#00ff00" />
<rect x="506.0" y="526.0" width="3.0" height="1.0" fill="#00ff00" />
<rect x="508.0" y="526.0" width="3.0" height="1.0" fill="#00ff00" />
<rect x="511.0" y="526.0" width="3.0" height="1.0" fill="#00ff00" />
<rect x="514.0" y="526.0" width="3.0" height="1.0" fill="#00ff00" />
<rect x="516.0" y="526.0" width="3.0" height="1.0" fill="#00ff00" />
<rect x="518.0" y="526.0" width="3.0" height="1.0" fill="#00ff00" />
<rect x="521.0" y="526.0" width="3.0" height="1.0" fill="#00ff00" />
<rect x="524.0" y="526.0" width="3.0" height="1.0" fill="#00ff00" />
<rect x="526.0" y="526.0" width="3.0" height="1.0" fill="#00ff00" />
<rect x="528.0" y="526.0" width="3.0" height="1.0" fill="#00ff00" />
<rect x="531.0" y="526.0" width="3.0" height="1.0" fill="#00ff00" />
<rect x="534.0" y="526.0" width="3.0" height="1.0" fill="#00ff00" />
<rect x="536.0" y="525.0" width="3.0" height="1.0" fill="#00ff00" />
<rect x="538.0" y="526.0" width="3.0" height="1.0" fill="#00ff00" />
<rect x="541.0" y="526.0" width="3.0" height="1.0" fill="#00ff00" />
<rect x="544.0" y="526.0" width="3.0" height="1.0" fill="#00ff00" />
<rect x="546.0" y="526.0" width="3.0" height="1.0" fill="#00ff00" />
<rect x="548.0" y="525.0" width="3.0" height="1.0" fill="#00ff00" />
<rect x="551.0" y="526.0" width="3.0" height="1.0" fill="#00ff00" />
<rect x="554.0" y="525.0" width="3.0" height="1.0" fill="#00ff00" />
<rect x="556.0" y="526.0" width="3.0" height="1.0" fill="#00ff00" />
<rect x="558.0" y="526.0" width="3.0" height="1.0" fill="#00ff00" />
<rect x="561.0" y="526.0" width="3.0" height="1.0" fill="#00ff00" />
<rect x="564.0" y="526.0" width="3.0" height="1.0" fill="#00ff00" />
<rect x="566.0" y="526.0" width="3.0" height="1.0" fill="#00ff00" />
<rect x="568.0" y="526.0" width="3.0" height="1.0" fill="#00ff00" />
<rect x="571.0" y="526.0" width="3.0" height="1.0" fill="#00ff00" />
<rect x="574.0" y="526.0" width="3.0" height="1.0" fill="#00ff00" />
<rect x="576.0" y="526.0" width="3.0" height="1.0" fill="#00ff00" />
<rect x="578.0" y="526.0" width="3.0" height="1.0" fill="#00ff00" />
<rect x="581.0" y="526.0" width="3.0" height="1.0" fill="#00ff00" />
<rect x="584.0" y="526.0" width="3.0" height="1.0" fill="#00ff00" />
<rect x="586.0" y="526.0" width="3.0" height="1.0" fill="#00ff00" />
<rect x="588.0" y="525.0" width="3.0" height="1.0" fill="#00ff00" />
<rect x="591.0" y="526.0" width="3.0" height="1.0" fill="#00ff00" />
<rect x="594.0" y="526.0" width="3.0" height="1.0" fill="#00ff00" />
<rect x="596.0" y="526.0" width="3.0" height="1.0" fill="#00ff00" />
<rect x="598.0" y="525.0" width="3.0" height="1.0" fill="#00ff00" />
<rect x="601.0" y="525.0" width="3.0" height="1.0" fill="#00ff00" />
<rect x="604.0" y="525.0" width="3.0" height="1.0" fill="#00ff00" />
<rect x="606.0" y="526.0" width="3.0" height="1.0" fill="#00ff00" />
<rect x="608.0" y="526.0" width="3.0" height="1.0" fill="#00ff00" />
<rect x="611.0" y="526.0" width="3.0" height="1.0" fill="#00ff00" />
<rect x="614.0" y="526.0" width="3.0" height="1.0" fill="#00ff00" />
<rect x="616.0" y="526.0" width="3.0" height="1.0" fill="#00ff00" />
<rect x="618.0" y="526.0" width="3.0" height="1.0" fill="#00ff00" />
<rect x="621.0" y="526.0" width="3.0" height="1.0" fill="#00ff00" />
<rect x="624.0" y="525.0" width="3.0" height="1.0" fill="#00ff00" />
<rect x="626.0" y="525.0" width="3.0" height="1.0" fill="#00ff00" />
<rect x="628.0" y="526.0" width="3.0" height="1.0" fill="#00ff00" />
<rect x="631.0" y="526.0" width="3.0" height="1.0" fill="#00ff00" />
<rect x="634.0" y="526.0" width="3.0" height="1.0" fill="#00ff00" />
<rect x="636.0" y="525.0" width="3.0" height="1.0" fill="#00ff00" />
<rect x="638.0" y="526.0" width="3.0" height="1.0" fill="#00ff00" />
<rect x="641.0" y="525.0" width="3.0" height="1.0" fill="#00ff00" />
<rect x="644.0" y="525.0" width="3.0" height="1.0" fill="#00ff00" />
<rect x="646.0" y="526.0" width="3.0" height="1.0" fill="#00ff00" />
<rect x="648.0" y="525.0" width="3.0" height="1.0" fill="#00ff00" />
<rect x="651.0" y="526.0" width="3.0" height="1.0" fill="#00ff00" />
<rect x="654.0" y="526.0" width="3.0" height="1.0" fill="#00ff00" />
<rect x="656.0" y="526.0" width="3.0" height="1.0" fill="#00ff00" />
<rect x="658.0" y="526.0" width="3.0" height="1.0" fill="#00ff00" />
<rect x="661.0" y="526.0" width="3.0" height="1.0" fill="#00ff00" />
<rect x="664.0" y="526.0" width="3.0" height="1.0" fill="#00ff00" />
<rect x="666.0" y="526.0" width="3.0" height="1.0" fill="#00ff00" />
<rect x="668.0" y="526.0" width="3.0" height="1.0" fill="#00ff00" />
<rect x="671.0" y="526.0" width="3.0" height="1.0" fill="#00ff00" />
<rect x="674.0" y="526.0" width="3.0" height="1.0" fill="#00ff00" />
<rect x="676.0" y="526.0" width="3.0" height="1.0" fill="#00ff00" />
<rect x="678.0" y="526.0" width="3.0" height="1.0" fill="#00ff00" />
<rect x="681.0" y="526.0" width="3.0" height="1.0" fill="#00ff00" />
<rect x="684.0" y="526.0" width="3.0" height="1.0" fill="#00ff00" />
<rect x="686.0" y="526.0" width="3.0" height="1.0" fill="#00ff00" />
<rect x="688.0" y="526.0" width="3.0" height="1.0" fill="#00ff00" />
<rect x="691.0" y="526.0" width="3.0" height="1.0" fill="#00ff00" />
<rect x="694.0" y="525.0" width="3.0" height="1.0" fill="#00ff00" />
<rect x="696.0" y="526.0" width="3.0" height="1.0" fill="#00ff00" />
<rect x="698.0" y="526.0" width="3.0" height="1.0" fill="#00ff00" />
<rect x="701.0" y="526.0" width="3.0" height="1.0" fill="#00ff00" />
<rect x="704.0" y="525.0" width="3.0" height="1.0" fill="#00ff00" />
<rect x="706.0" y="525.0" width="3.0" height="1.0" fill="#00ff00" />
<rect x="708.0" y="526.0" width="3.0" height="1.0" fill="#00ff00" />
<rect x="711.0" y="526.0" width="3.0" height="1.0" fill="#00ff00" />
<rect x="714.0" y="526.0" width="3.0" height="1.0" fill="#00ff00" />
<rect x="716.0" y="526.0" width="3.0" height="1.0" fill="#00ff00" />
<rect x="718.0" y="526.0" width="3.0" height="1.0" fill="#00ff00" />
<rect x="721.0" y="526.0" width="3.0" height="1.0" fill="#00ff00" />
<rect x="724.0" y="526.0" width="3.0" height="1.0" fill="#00ff00" />
<rect x="726.0" y="526.0" width="3.0" height="1.0" fill="#00ff00" />
<rect x="728.0" y="526.0" width="3.0" height="1.0" fill="#00ff00" />
<rect x="731.0" y="526.0" width="3.0" height="1.0" fill="#00ff00" />
<rect x="734.0" y="525.0" width="3.0" height="1.0" fill="#00ff00" />
<rect x="736.0" y="525.0" width="3.0" height="1.0" fill="#00ff00" />
<rect x="738.0" y="526.0" width="3.0" height="1.0" fill="#00ff00" />
<rect x="741.0" y="525.0" width="2.0" height="1.0" fill="#00ff00" />
<rect x="441.0" y="529.0" width="302.0" height="2.7" fill="#000" />
<rect x="436.0" y="532.5" width="5.0" height="1.0" fill="#000" />
<rect x="436.0" y="500.5" width="5.0" height="1.0" fill="#000" />
<rect x="436.0" y="466.5" width="5.0" height="1.0" fill="#000" />
<rect x="436.0" y="432.5" width="5.0" height="1.0" fill="#000" />
<rect x="436.0" y="400.5" width="5.0" height="1.0" fill="#000" />
<rect x="441.0" y="531.7" width="1.3" height="11.0" fill="#000" />
<rect x="466.0" y="531.7" width="1.3" height="6.0" fill="#000" />
<rect x="491.0" y="531.7" width="1.3" height="11.0" fill="#000" />
<rect x="516.0" y="531.7" width="1.3" height="6.0" fill="#000" />
<rect x="542.0" y="531.7" width="1.3" height="11.0" fill="#000" />
<rect x="567.0" y="531.7" width="1.3" height="6.0" fill="#000" />
<rect x="592.0" y="531.7" width="1.3" height="11.0" fill="#000" />
<rect x="617.0" y="531.7" width="1.3" height="6.0" fill="#000" />
<rect x="642.0" y="531.7" width="1.3" height="11.0" fill="#000" />
<rect x="668.0" y="531.7" width="1.3" height="6.0" fill="#000" />
<rect x="693.0" y="531.7" width="1.3" height="11.0" fill="#000" />
<rect x="718.0" y="531.7" width="1.3" height="6.0" fill="#000" />
<rect x="743.0" y="531.7" width="1.3" height="11.0" fill="#000" />
<rect x="746.0" y="399.0" width="6.0" height="137.0" fill="url(#gjet)" />
<rect x="753.0" y="532.5" width="7.0" height="1.0" fill="#000" />
<rect x="753.0" y="500.5" width="7.0" height="1.0" fill="#000" />
<rect x="753.0" y="466.5" width="7.0" height="1.0" fill="#000" />
<rect x="753.0" y="432.5" width="7.0" height="1.0" fill="#000" />
<rect x="753.0" y="400.5" width="7.0" height="1.0" fill="#000" />
<rect x="441.0" y="577.0" width="302.0" height="134.0" fill="#000" />
<path d="M441,711 L441.0,699.0 L443.5,699.0 L443.5,697.0 L446.0,697.0 L446.0,696.0 L448.5,696.0 L448.5,700.0 L451.0,700.0 L451.0,698.0 L453.5,698.0 L453.5,696.0 L456.0,696.0 L456.0,697.0 L458.5,697.0 L458.5,695.0 L461.0,695.0 L461.0,697.0 L463.5,697.0 L463.5,694.0 L466.0,694.0 L466.0,694.0 L468.5,694.0 L468.5,692.0 L471.0,692.0 L471.0,690.0 L473.5,690.0 L473.5,689.0 L476.0,689.0 L476.0,688.0 L478.5,688.0 L478.5,689.0 L481.0,689.0 L481.0,689.0 L483.5,689.0 L483.5,689.0 L486.0,689.0 L486.0,687.0 L488.5,687.0 L488.5,688.0 L491.0,688.0 L491.0,687.0 L493.5,687.0 L493.5,687.0 L496.0,687.0 L496.0,684.0 L498.5,684.0 L498.5,686.0 L501.0,686.0 L501.0,686.0 L503.5,686.0 L503.5,687.0 L506.0,687.0 L506.0,689.0 L508.5,689.0 L508.5,687.0 L511.0,687.0 L511.0,689.0 L513.5,689.0 L513.5,687.0 L516.0,687.0 L516.0,687.0 L518.5,687.0 L518.5,689.0 L521.0,689.0 L521.0,690.0 L523.5,690.0 L523.5,690.0 L526.0,690.0 L526.0,691.0 L528.5,691.0 L528.5,692.0 L531.0,692.0 L531.0,688.0 L533.5,688.0 L533.5,685.0 L536.0,685.0 L536.0,685.0 L538.5,685.0 L538.5,685.0 L541.0,685.0 L541.0,684.0 L543.5,684.0 L543.5,683.0 L546.0,683.0 L546.0,685.0 L548.5,685.0 L548.5,683.0 L551.0,683.0 L551.0,683.0 L553.5,683.0 L553.5,686.0 L556.0,686.0 L556.0,685.0 L558.5,685.0 L558.5,686.0 L561.0,686.0 L561.0,686.0 L563.5,686.0 L563.5,686.0 L566.0,686.0 L566.0,685.0 L568.5,685.0 L568.5,683.0 L571.0,683.0 L571.0,682.0 L573.5,682.0 L573.5,680.0 L576.0,680.0 L576.0,681.0 L578.5,681.0 L578.5,679.0 L581.0,679.0 L581.0,680.0 L583.5,680.0 L583.5,678.0 L586.0,678.0 L586.0,679.0 L588.5,679.0 L588.5,676.0 L591.0,676.0 L591.0,676.0 L593.5,676.0 L593.5,679.0 L596.0,679.0 L596.0,677.0 L598.5,677.0 L598.5,677.0 L601.0,677.0 L601.0,676.0 L603.5,676.0 L603.5,676.0 L606.0,676.0 L606.0,674.0 L608.5,674.0 L608.5,674.0 L611.0,674.0 L611.0,675.0 L613.5,675.0 L613.5,675.0 L616.0,675.0 L616.0,673.0 L618.5,673.0 L618.5,675.0 L621.0,675.0 L621.0,673.0 L623.5,673.0 L623.5,675.0 L626.0,675.0 L626.0,674.0 L628.5,674.0 L628.5,675.0 L631.0,675.0 L631.0,674.0 L633.5,674.0 L633.5,676.0 L636.0,676.0 L636.0,675.0 L638.5,675.0 L638.5,678.0 L641.0,678.0 L641.0,679.0 L643.5,679.0 L643.5,678.0 L646.0,678.0 L646.0,680.0 L648.5,680.0 L648.5,682.0 L651.0,682.0 L651.0,682.0 L653.5,682.0 L653.5,683.0 L656.0,683.0 L656.0,684.0 L658.5,684.0 L658.5,684.0 L661.0,684.0 L661.0,683.0 L663.5,683.0 L663.5,682.0 L666.0,682.0 L666.0,683.0 L668.5,683.0 L668.5,681.0 L671.0,681.0 L671.0,681.0 L673.5,681.0 L673.5,679.0 L676.0,679.0 L676.0,679.0 L678.5,679.0 L678.5,681.0 L681.0,681.0 L681.0,680.0 L683.5,680.0 L683.5,680.0 L686.0,680.0 L686.0,678.0 L688.5,678.0 L688.5,679.0 L691.0,679.0 L691.0,676.0 L693.5,676.0 L693.5,679.0 L696.0,679.0 L696.0,678.0 L698.5,678.0 L698.5,677.0 L701.0,677.0 L701.0,675.0 L703.5,675.0 L703.5,677.0 L706.0,677.0 L706.0,675.0 L708.5,675.0 L708.5,677.0 L711.0,677.0 L711.0,676.0 L713.5,676.0 L713.5,674.0 L716.0,674.0 L716.0,677.0 L718.5,677.0 L718.5,676.0 L721.0,676.0 L721.0,677.0 L723.5,677.0 L723.5,676.0 L726.0,676.0 L726.0,676.0 L728.5,676.0 L728.5,677.0 L731.0,677.0 L731.0,674.0 L733.5,674.0 L733.5,676.0 L736.0,676.0 L736.0,674.0 L738.5,674.0 L738.5,673.0 L741.0,673.0 L741.0,674.0 L743.5,674.0 L743,711 Z" fill="#00ff00"/>
<rect x="436.0" y="710.5" width="5.0" height="1.0" fill="#000" />
<rect x="436.0" y="644.5" width="5.0" height="1.0" fill="#000" />
<rect x="436.0" y="578.5" width="5.0" height="1.0" fill="#000" />
<rect x="441.0" y="711.0" width="1.3" height="11.0" fill="#000" />
<rect x="466.0" y="711.0" width="1.3" height="6.0" fill="#000" />
<rect x="491.0" y="711.0" width="1.3" height="11.0" fill="#000" />
<rect x="516.0" y="711.0" width="1.3" height="6.0" fill="#000" />
<rect x="542.0" y="711.0" width="1.3" height="11.0" fill="#000" />
<rect x="567.0" y="711.0" width="1.3" height="6.0" fill="#000" />
<rect x="592.0" y="711.0" width="1.3" height="11.0" fill="#000" />
<rect x="617.0" y="711.0" width="1.3" height="6.0" fill="#000" />
<rect x="642.0" y="711.0" width="1.3" height="11.0" fill="#000" />
<rect x="668.0" y="711.0" width="1.3" height="6.0" fill="#000" />
<rect x="693.0" y="711.0" width="1.3" height="11.0" fill="#000" />
<rect x="718.0" y="711.0" width="1.3" height="6.0" fill="#000" />
<rect x="743.0" y="711.0" width="1.3" height="11.0" fill="#000" />
<rect x="803.5" y="130.5" width="87.0" height="22.0" fill="#a00000" stroke="#7a8a99" stroke-width="1"/>
<rect x="896.5" y="130.5" width="83.0" height="22.0" fill="#00a000" stroke="#7a8a99" stroke-width="1"/>
<rect x="803.5" y="188.5" width="145.0" height="16.0" fill="#fff" stroke="#7a8a99" stroke-width="1"/>
<rect x="955.5" y="186.5" width="23.0" height="20.0" fill="url(#gbtn)" stroke="#7a8a99" stroke-width="1"/>
<rect x="958.5" y="189.5" width="17.0" height="14.0" fill="none" stroke="#a8bfd6" stroke-width="1"/>
<rect x="807.5" y="217.5" width="31.0" height="20.0" fill="url(#gbtn)" stroke="#7a8a99" stroke-width="1"/>
<path d="M817.7,224.8 L812.1,227.8 L817.7,230.8 M811.5,227.8 H813.7 M826.0,224.8 L820.4,227.8 L826.0,230.8 M819.8,227.8 H822.0 M834.3,224.8 L828.7,227.8 L834.3,230.8 M828.1,227.8 H830.3 " stroke="#111" stroke-width="1.3" fill="none" shape-rendering="geometricPrecision"/>
<rect x="844.5" y="217.5" width="22.6" height="20.0" fill="url(#gbtn)" stroke="#7a8a99" stroke-width="1"/>
<path d="M854.6,224.8 L849.0,227.8 L854.6,230.8 M848.4,227.8 H850.6 M862.9,224.8 L857.3,227.8 L862.9,230.8 M856.7,227.8 H858.9 " stroke="#111" stroke-width="1.3" fill="none" shape-rendering="geometricPrecision"/>
<rect x="873.5" y="217.5" width="14.6" height="20.0" fill="url(#gbtn)" stroke="#7a8a99" stroke-width="1"/>
<path d="M883.8,224.8 L878.2,227.8 L883.8,230.8 M877.6,227.8 H879.8 " stroke="#111" stroke-width="1.3" fill="none" shape-rendering="geometricPrecision"/>
<rect x="894.5" y="217.5" width="14.6" height="20.0" fill="url(#gbtn)" stroke="#7a8a99" stroke-width="1"/>
<path d="M898.8,224.8 L904.4,227.8 L898.8,230.8 M905.0,227.8 H902.8 " stroke="#111" stroke-width="1.3" fill="none" shape-rendering="geometricPrecision"/>
<rect x="915.5" y="217.5" width="22.6" height="20.0" fill="url(#gbtn)" stroke="#7a8a99" stroke-width="1"/>
<path d="M919.6,224.8 L925.2,227.8 L919.6,230.8 M925.9,227.8 H923.6 M927.9,224.8 L933.5,227.8 L927.9,230.8 M934.1,227.8 H931.9 " stroke="#111" stroke-width="1.3" fill="none" shape-rendering="geometricPrecision"/>
<rect x="944.5" y="217.5" width="31.0" height="20.0" fill="url(#gbtn)" stroke="#7a8a99" stroke-width="1"/>
<path d="M948.7,224.8 L954.3,227.8 L948.7,230.8 M954.9,227.8 H952.7 M957.0,224.8 L962.6,227.8 L957.0,230.8 M963.2,227.8 H961.0 M965.3,224.8 L970.9,227.8 L965.3,230.8 M971.5,227.8 H969.3 " stroke="#111" stroke-width="1.3" fill="none" shape-rendering="geometricPrecision"/>
<rect x="898.5" y="248.5" width="70.0" height="23.0" fill="url(#gbtn)" stroke="#7a8a99" stroke-width="1"/>
<rect x="899.5" y="249.5" width="50.0" height="21.0" fill="#eeeeee" />
<rect x="900.0" y="250.0" width="49.0" height="20.0" fill="none" stroke="#b8cfe5" stroke-width="1"/>
<line x1="949.5" y1="249" x2="949.5" y2="271" stroke="#7a8a99" stroke-width="1"/>
<path d="M954,257 L964,257 L959,263 Z" fill="#222"/>
<defs><linearGradient id="gcirc" x1="0" y1="0" x2="0" y2="1"><stop offset="0" stop-color="#f6f6f6"/><stop offset="0.5" stop-color="#eaeaea"/><stop offset="1" stop-color="#d4d4d4"/></linearGradient><linearGradient id="gico" x1="0" y1="0" x2="0" y2="1"><stop offset="0" stop-color="#ffffff"/><stop offset="1" stop-color="#eef0f2"/></linearGradient><linearGradient id="gcircs" x1="0" y1="0" x2="0" y2="1"><stop offset="0" stop-color="#c8c8c8"/><stop offset="1" stop-color="#9a9a9a"/></linearGradient></defs>
<rect x="6.6" y="4.6" width="14.6" height="14.6" rx="2" fill="url(#gico)" stroke="#5f7f9c" stroke-width="1.3" shape-rendering="geometricPrecision"/>
<path d="M13.4,12.2 C11.6,10.4 12.8,8.8 15.4,6.6 M14.6,11.4 C13.8,10 16.4,9.6 16.9,8.1" stroke="#e8791c" stroke-width="1.3" fill="none" shape-rendering="geometricPrecision"/>
<path d="M10,13.5 H16.5 M11,15.5 H15.9 M9.3,17.4 H17.9 M17.4,12.3 Q20.6,14.2 17.4,16" stroke="#55758f" stroke-width="1.3" fill="none" shape-rendering="geometricPrecision"/>
<circle cx="36.3" cy="11.6" r="7.2" fill="#000" fill-opacity="0.06" shape-rendering="geometricPrecision"/>
<circle cx="36.3" cy="11.3" r="6.8" fill="url(#gcirc)" stroke="url(#gcircs)" stroke-width="0.9" shape-rendering="geometricPrecision"/>
<circle cx="939.3" cy="11.6" r="7.2" fill="#000" fill-opacity="0.06" shape-rendering="geometricPrecision"/>
<circle cx="939.3" cy="11.3" r="6.8" fill="url(#gcirc)" stroke="url(#gcircs)" stroke-width="0.9" shape-rendering="geometricPrecision"/>
<circle cx="962.4" cy="11.6" r="7.2" fill="#000" fill-opacity="0.06" shape-rendering="geometricPrecision"/>
<circle cx="962.4" cy="11.3" r="6.8" fill="url(#gcirc)" stroke="url(#gcircs)" stroke-width="0.9" shape-rendering="geometricPrecision"/>
<circle cx="985.3" cy="11.6" r="7.2" fill="#000" fill-opacity="0.06" shape-rendering="geometricPrecision"/>
<circle cx="985.3" cy="11.3" r="6.8" fill="url(#gcirc)" stroke="url(#gcircs)" stroke-width="0.9" shape-rendering="geometricPrecision"/>
<circle cx="36.3" cy="11.3" r="0.7" fill="#333" shape-rendering="geometricPrecision"/>
<path d="M935.9,10 L939.3,12.6 L942.7,10" stroke="#222" stroke-width="1.5" fill="none" shape-rendering="geometricPrecision"/>
<path d="M959,12.4 L962.4,9.7 L965.8,12.4" stroke="#222" stroke-width="1.5" fill="none" shape-rendering="geometricPrecision"/>
<path d="M982.4,8.3 L988.2,14.1 M988.2,8.3 L982.4,14.1" stroke="#222" stroke-width="1.5" fill="none" shape-rendering="geometricPrecision"/>
</svg>
<svg class="tx" width="1000" height="750" viewBox="0 0 1000 750">
<text x="43.0" y="197.7" font-size="8.3" font-weight="bold" fill="#000" text-anchor="end" textLength="4.7" lengthAdjust="spacingAndGlyphs" >0</text>
<text x="43.0" y="190.8" font-size="8.3" font-weight="bold" fill="#000" text-anchor="end" textLength="4.7" lengthAdjust="spacingAndGlyphs" >2</text>
<text x="43.0" y="178.8" font-size="8.3" font-weight="bold" fill="#000" text-anchor="end" textLength="4.7" lengthAdjust="spacingAndGlyphs" >4</text>
<text x="43.0" y="166.8" font-size="8.3" font-weight="bold" fill="#000" text-anchor="end" textLength="4.7" lengthAdjust="spacingAndGlyphs" >6</text>
<text x="43.0" y="154.8" font-size="8.3" font-weight="bold" fill="#000" text-anchor="end" textLength="4.7" lengthAdjust="spacingAndGlyphs" >8</text>
<text x="43.0" y="142.8" font-size="8.3" font-weight="bold" fill="#000" text-anchor="end" textLength="9.4" lengthAdjust="spacingAndGlyphs" >10</text>
<text x="43.0" y="130.8" font-size="8.3" font-weight="bold" fill="#000" text-anchor="end" textLength="9.4" lengthAdjust="spacingAndGlyphs" >12</text>
<text x="43.0" y="118.8" font-size="8.3" font-weight="bold" fill="#000" text-anchor="end" textLength="9.4" lengthAdjust="spacingAndGlyphs" >14</text>
<text x="43.0" y="106.8" font-size="8.3" font-weight="bold" fill="#000" text-anchor="end" textLength="9.4" lengthAdjust="spacingAndGlyphs" >16</text>
<text x="43.0" y="94.8" font-size="8.3" font-weight="bold" fill="#000" text-anchor="end" textLength="9.4" lengthAdjust="spacingAndGlyphs" >18</text>
<text x="43.0" y="82.8" font-size="8.3" font-weight="bold" fill="#000" text-anchor="end" textLength="9.4" lengthAdjust="spacingAndGlyphs" >20</text>
<text x="43.0" y="70.8" font-size="8.3" font-weight="bold" fill="#000" text-anchor="end" textLength="9.4" lengthAdjust="spacingAndGlyphs" >22</text>
<text x="43.0" y="58.8" font-size="8.3" font-weight="bold" fill="#000" text-anchor="end" textLength="9.4" lengthAdjust="spacingAndGlyphs" >24</text>
<text x="43.0" y="48.8" font-size="8.3" font-weight="bold" fill="#000" text-anchor="end" textLength="9.4" lengthAdjust="spacingAndGlyphs" >26</text>
<text x="44.0" y="225.5" font-size="8.3" font-weight="bold" fill="#000" text-anchor="start" textLength="22.5" lengthAdjust="spacingAndGlyphs" >18:40</text>
<text x="94.0" y="225.5" font-size="8.3" font-weight="bold" fill="#000" text-anchor="start" textLength="22.5" lengthAdjust="spacingAndGlyphs" >19:00</text>
<text x="145.0" y="225.5" font-size="8.3" font-weight="bold" fill="#000" text-anchor="start" textLength="22.5" lengthAdjust="spacingAndGlyphs" >19:20</text>
<text x="195.0" y="225.5" font-size="8.3" font-weight="bold" fill="#000" text-anchor="start" textLength="22.5" lengthAdjust="spacingAndGlyphs" >19:40</text>
<text x="245.0" y="225.5" font-size="8.3" font-weight="bold" fill="#000" text-anchor="start" textLength="22.5" lengthAdjust="spacingAndGlyphs" >20:00</text>
<text x="296.0" y="225.5" font-size="8.3" font-weight="bold" fill="#000" text-anchor="start" textLength="22.5" lengthAdjust="spacingAndGlyphs" >20:20</text>
<text x="346.0" y="225.5" font-size="8.3" font-weight="bold" fill="#000" text-anchor="start" textLength="22.5" lengthAdjust="spacingAndGlyphs" >20:40</text>
<text x="368.0" y="197.6" font-size="8.3" font-weight="bold" fill="#000" text-anchor="start" textLength="4.7" lengthAdjust="spacingAndGlyphs" >0</text>
<text x="368.0" y="190.8" font-size="8.3" font-weight="bold" fill="#000" text-anchor="start" textLength="9.4" lengthAdjust="spacingAndGlyphs" >10</text>
<text x="368.0" y="178.8" font-size="8.3" font-weight="bold" fill="#000" text-anchor="start" textLength="9.4" lengthAdjust="spacingAndGlyphs" >20</text>
<text x="368.0" y="166.8" font-size="8.3" font-weight="bold" fill="#000" text-anchor="start" textLength="9.4" lengthAdjust="spacingAndGlyphs" >30</text>
<text x="368.0" y="154.8" font-size="8.3" font-weight="bold" fill="#000" text-anchor="start" textLength="9.4" lengthAdjust="spacingAndGlyphs" >40</text>
<text x="368.0" y="142.8" font-size="8.3" font-weight="bold" fill="#000" text-anchor="start" textLength="9.4" lengthAdjust="spacingAndGlyphs" >50</text>
<text x="368.0" y="130.8" font-size="8.3" font-weight="bold" fill="#000" text-anchor="start" textLength="9.4" lengthAdjust="spacingAndGlyphs" >60</text>
<text x="368.0" y="118.8" font-size="8.3" font-weight="bold" fill="#000" text-anchor="start" textLength="9.4" lengthAdjust="spacingAndGlyphs" >70</text>
<text x="368.0" y="106.8" font-size="8.3" font-weight="bold" fill="#000" text-anchor="start" textLength="9.4" lengthAdjust="spacingAndGlyphs" >80</text>
<text x="368.0" y="94.8" font-size="8.3" font-weight="bold" fill="#000" text-anchor="start" textLength="9.4" lengthAdjust="spacingAndGlyphs" >90</text>
<text x="368.0" y="82.8" font-size="8.3" font-weight="bold" fill="#000" text-anchor="start" textLength="14.1" lengthAdjust="spacingAndGlyphs" >100</text>
<text x="368.0" y="70.8" font-size="8.3" font-weight="bold" fill="#000" text-anchor="start" textLength="14.1" lengthAdjust="spacingAndGlyphs" >110</text>
<text x="368.0" y="58.8" font-size="8.3" font-weight="bold" fill="#000" text-anchor="start" textLength="14.1" lengthAdjust="spacingAndGlyphs" >120</text>
<text x="368.0" y="48.8" font-size="8.3" font-weight="bold" fill="#000" text-anchor="start" textLength="14.1" lengthAdjust="spacingAndGlyphs" >130</text>
<text x="167.5" y="41.5" font-size="9.3" font-weight="bold" fill="#000" text-anchor="start" textLength="64.5" lengthAdjust="spacingAndGlyphs" >Reflectivity</text>
<text x="14.0" y="41.5" font-size="9.2" font-weight="normal" fill="#000" text-anchor="start" textLength="80.0" lengthAdjust="spacingAndGlyphs"  stroke="#000" stroke-width="0.25">Alt (1000ft MSL)</text>
<text x="348.0" y="41.5" font-size="9.2" font-weight="normal" fill="#000" text-anchor="start" textLength="38.0" lengthAdjust="spacingAndGlyphs"  stroke="#000" stroke-width="0.25">dbz-min</text>
<text x="14.4" y="248.8" font-size="9.3" font-weight="bold" fill="#000" text-anchor="start" textLength="62.6" lengthAdjust="spacingAndGlyphs" >Instrument</text>
<text x="181.5" y="248.8" font-size="9.3" font-weight="bold" fill="#000" text-anchor="start" textLength="36.5" lengthAdjust="spacingAndGlyphs" >Status</text>
<text x="343.8" y="248.6" font-size="9.3" font-weight="bold" fill="#000" text-anchor="start" textLength="42.0" lengthAdjust="spacingAndGlyphs" >Current</text>
<text x="14.8" y="261.8" font-size="8.3" font-weight="normal" fill="#000" text-anchor="start" textLength="27.2" lengthAdjust="spacingAndGlyphs"  stroke="#000" stroke-width="0.3">RADAR</text>
<text x="14.8" y="275.8" font-size="8.3" font-weight="normal" fill="#000" text-anchor="start" textLength="27.2" lengthAdjust="spacingAndGlyphs"  stroke="#000" stroke-width="0.3">CLMTR</text>
<text x="14.8" y="289.8" font-size="8.3" font-weight="normal" fill="#000" text-anchor="start" textLength="24.2" lengthAdjust="spacingAndGlyphs"  stroke="#000" stroke-width="0.3">RDMR</text>
<text x="14.8" y="303.8" font-size="8.3" font-weight="normal" fill="#000" text-anchor="start" textLength="20.7" lengthAdjust="spacingAndGlyphs"  stroke="#000" stroke-width="0.3">DRY?</text>
<text x="43.0" y="493.8" font-size="8.3" font-weight="bold" fill="#000" text-anchor="end" textLength="4.7" lengthAdjust="spacingAndGlyphs" >0</text>
<text x="43.0" y="486.9" font-size="8.3" font-weight="bold" fill="#000" text-anchor="end" textLength="4.7" lengthAdjust="spacingAndGlyphs" >2</text>
<text x="43.0" y="474.9" font-size="8.3" font-weight="bold" fill="#000" text-anchor="end" textLength="4.7" lengthAdjust="spacingAndGlyphs" >4</text>
<text x="43.0" y="462.9" font-size="8.3" font-weight="bold" fill="#000" text-anchor="end" textLength="4.7" lengthAdjust="spacingAndGlyphs" >6</text>
<text x="43.0" y="450.9" font-size="8.3" font-weight="bold" fill="#000" text-anchor="end" textLength="4.7" lengthAdjust="spacingAndGlyphs" >8</text>
<text x="43.0" y="438.9" font-size="8.3" font-weight="bold" fill="#000" text-anchor="end" textLength="9.4" lengthAdjust="spacingAndGlyphs" >10</text>
<text x="43.0" y="426.9" font-size="8.3" font-weight="bold" fill="#000" text-anchor="end" textLength="9.4" lengthAdjust="spacingAndGlyphs" >12</text>
<text x="43.0" y="414.9" font-size="8.3" font-weight="bold" fill="#000" text-anchor="end" textLength="9.4" lengthAdjust="spacingAndGlyphs" >14</text>
<text x="43.0" y="402.9" font-size="8.3" font-weight="bold" fill="#000" text-anchor="end" textLength="9.4" lengthAdjust="spacingAndGlyphs" >16</text>
<text x="43.0" y="390.9" font-size="8.3" font-weight="bold" fill="#000" text-anchor="end" textLength="9.4" lengthAdjust="spacingAndGlyphs" >18</text>
<text x="43.0" y="378.9" font-size="8.3" font-weight="bold" fill="#000" text-anchor="end" textLength="9.4" lengthAdjust="spacingAndGlyphs" >20</text>
<text x="43.0" y="366.9" font-size="8.3" font-weight="bold" fill="#000" text-anchor="end" textLength="9.4" lengthAdjust="spacingAndGlyphs" >22</text>
<text x="43.0" y="354.9" font-size="8.3" font-weight="bold" fill="#000" text-anchor="end" textLength="9.4" lengthAdjust="spacingAndGlyphs" >24</text>
<text x="43.0" y="344.9" font-size="8.3" font-weight="bold" fill="#000" text-anchor="end" textLength="9.4" lengthAdjust="spacingAndGlyphs" >26</text>
<text x="44.0" y="521.6" font-size="8.3" font-weight="bold" fill="#000" text-anchor="start" textLength="22.5" lengthAdjust="spacingAndGlyphs" >18:40</text>
<text x="94.0" y="521.6" font-size="8.3" font-weight="bold" fill="#000" text-anchor="start" textLength="22.5" lengthAdjust="spacingAndGlyphs" >19:00</text>
<text x="145.0" y="521.6" font-size="8.3" font-weight="bold" fill="#000" text-anchor="start" textLength="22.5" lengthAdjust="spacingAndGlyphs" >19:20</text>
<text x="195.0" y="521.6" font-size="8.3" font-weight="bold" fill="#000" text-anchor="start" textLength="22.5" lengthAdjust="spacingAndGlyphs" >19:40</text>
<text x="245.0" y="521.6" font-size="8.3" font-weight="bold" fill="#000" text-anchor="start" textLength="22.5" lengthAdjust="spacingAndGlyphs" >20:00</text>
<text x="296.0" y="521.6" font-size="8.3" font-weight="bold" fill="#000" text-anchor="start" textLength="22.5" lengthAdjust="spacingAndGlyphs" >20:20</text>
<text x="346.0" y="521.6" font-size="8.3" font-weight="bold" fill="#000" text-anchor="start" textLength="22.5" lengthAdjust="spacingAndGlyphs" >20:40</text>
<text x="361.6" y="345.0" font-size="8" font-weight="normal" fill="#000" text-anchor="start" textLength="14.7" lengthAdjust="spacingAndGlyphs"  stroke="#000" stroke-width="0.3">HVY</text>
<text x="361.6" y="365.3" font-size="8" font-weight="normal" fill="#000" text-anchor="start" textLength="24.7" lengthAdjust="spacingAndGlyphs"  stroke="#000" stroke-width="0.3">M.HVY</text>
<text x="361.6" y="388.0" font-size="8" font-weight="normal" fill="#000" text-anchor="start" textLength="18.4" lengthAdjust="spacingAndGlyphs"  stroke="#000" stroke-width="0.3">MOD</text>
<text x="361.6" y="411.0" font-size="8" font-weight="normal" fill="#000" text-anchor="start" textLength="24.4" lengthAdjust="spacingAndGlyphs"  stroke="#000" stroke-width="0.3">L.MOD</text>
<text x="361.6" y="434.0" font-size="8" font-weight="normal" fill="#000" text-anchor="start" textLength="14.1" lengthAdjust="spacingAndGlyphs"  stroke="#000" stroke-width="0.3">LGT</text>
<text x="361.6" y="457.3" font-size="8" font-weight="normal" fill="#000" text-anchor="start" textLength="22.5" lengthAdjust="spacingAndGlyphs"  stroke="#000" stroke-width="0.3">T.LGT</text>
<text x="361.6" y="480.0" font-size="8" font-weight="normal" fill="#000" text-anchor="start" textLength="17.5" lengthAdjust="spacingAndGlyphs"  stroke="#000" stroke-width="0.3">TRC</text>
<text x="361.6" y="498.0" font-size="8" font-weight="normal" fill="#000" text-anchor="start" textLength="22.4" lengthAdjust="spacingAndGlyphs"  stroke="#000" stroke-width="0.3">NONE</text>
<text x="166.5" y="337.5" font-size="9.3" font-weight="bold" fill="#000" text-anchor="start" textLength="67.5" lengthAdjust="spacingAndGlyphs" >Icing Hazard</text>
<text x="14.0" y="338.0" font-size="9.2" font-weight="normal" fill="#000" text-anchor="start" textLength="80.0" lengthAdjust="spacingAndGlyphs"  stroke="#000" stroke-width="0.25">Alt (1000ft MSL)</text>
<text x="345.3" y="338.2" font-size="9.2" font-weight="normal" fill="#000" text-anchor="start" textLength="40.7" lengthAdjust="spacingAndGlyphs"  stroke="#000" stroke-width="0.25">Severity</text>
<text x="43.0" y="700.8" font-size="8.3" font-weight="bold" fill="#000" text-anchor="end" textLength="4.7" lengthAdjust="spacingAndGlyphs" >0</text>
<text x="43.0" y="693.9" font-size="8.3" font-weight="bold" fill="#000" text-anchor="end" textLength="4.7" lengthAdjust="spacingAndGlyphs" >2</text>
<text x="43.0" y="681.9" font-size="8.3" font-weight="bold" fill="#000" text-anchor="end" textLength="4.7" lengthAdjust="spacingAndGlyphs" >4</text>
<text x="43.0" y="669.9" font-size="8.3" font-weight="bold" fill="#000" text-anchor="end" textLength="4.7" lengthAdjust="spacingAndGlyphs" >6</text>
<text x="43.0" y="657.9" font-size="8.3" font-weight="bold" fill="#000" text-anchor="end" textLength="4.7" lengthAdjust="spacingAndGlyphs" >8</text>
<text x="43.0" y="645.9" font-size="8.3" font-weight="bold" fill="#000" text-anchor="end" textLength="9.4" lengthAdjust="spacingAndGlyphs" >10</text>
<text x="43.0" y="633.9" font-size="8.3" font-weight="bold" fill="#000" text-anchor="end" textLength="9.4" lengthAdjust="spacingAndGlyphs" >12</text>
<text x="43.0" y="621.9" font-size="8.3" font-weight="bold" fill="#000" text-anchor="end" textLength="9.4" lengthAdjust="spacingAndGlyphs" >14</text>
<text x="43.0" y="609.9" font-size="8.3" font-weight="bold" fill="#000" text-anchor="end" textLength="9.4" lengthAdjust="spacingAndGlyphs" >16</text>
<text x="43.0" y="597.9" font-size="8.3" font-weight="bold" fill="#000" text-anchor="end" textLength="9.4" lengthAdjust="spacingAndGlyphs" >18</text>
<text x="43.0" y="585.9" font-size="8.3" font-weight="bold" fill="#000" text-anchor="end" textLength="9.4" lengthAdjust="spacingAndGlyphs" >20</text>
<text x="43.0" y="573.9" font-size="8.3" font-weight="bold" fill="#000" text-anchor="end" textLength="9.4" lengthAdjust="spacingAndGlyphs" >22</text>
<text x="43.0" y="561.9" font-size="8.3" font-weight="bold" fill="#000" text-anchor="end" textLength="9.4" lengthAdjust="spacingAndGlyphs" >24</text>
<text x="43.0" y="551.9" font-size="8.3" font-weight="bold" fill="#000" text-anchor="end" textLength="9.4" lengthAdjust="spacingAndGlyphs" >26</text>
<text x="44.0" y="729.0" font-size="8.3" font-weight="bold" fill="#000" text-anchor="start" textLength="22.5" lengthAdjust="spacingAndGlyphs" >18:40</text>
<text x="94.0" y="729.0" font-size="8.3" font-weight="bold" fill="#000" text-anchor="start" textLength="22.5" lengthAdjust="spacingAndGlyphs" >19:00</text>
<text x="145.0" y="729.0" font-size="8.3" font-weight="bold" fill="#000" text-anchor="start" textLength="22.5" lengthAdjust="spacingAndGlyphs" >19:20</text>
<text x="195.0" y="729.0" font-size="8.3" font-weight="bold" fill="#000" text-anchor="start" textLength="22.5" lengthAdjust="spacingAndGlyphs" >19:40</text>
<text x="245.0" y="729.0" font-size="8.3" font-weight="bold" fill="#000" text-anchor="start" textLength="22.5" lengthAdjust="spacingAndGlyphs" >20:00</text>
<text x="296.0" y="729.0" font-size="8.3" font-weight="bold" fill="#000" text-anchor="start" textLength="22.5" lengthAdjust="spacingAndGlyphs" >20:20</text>
<text x="346.0" y="729.0" font-size="8.3" font-weight="bold" fill="#000" text-anchor="start" textLength="22.5" lengthAdjust="spacingAndGlyphs" >20:40</text>
<text x="368.0" y="706.6" font-size="8.3" font-weight="bold" fill="#000" text-anchor="start" textLength="4.7" lengthAdjust="spacingAndGlyphs" >0</text>
<text x="368.0" y="684.8" font-size="8.3" font-weight="bold" fill="#000" text-anchor="start" textLength="9.4" lengthAdjust="spacingAndGlyphs" >10</text>
<text x="368.0" y="657.8" font-size="8.3" font-weight="bold" fill="#000" text-anchor="start" textLength="9.4" lengthAdjust="spacingAndGlyphs" >20</text>
<text x="368.0" y="630.8" font-size="8.3" font-weight="bold" fill="#000" text-anchor="start" textLength="9.4" lengthAdjust="spacingAndGlyphs" >30</text>
<text x="368.0" y="603.8" font-size="8.3" font-weight="bold" fill="#000" text-anchor="start" textLength="9.4" lengthAdjust="spacingAndGlyphs" >40</text>
<text x="368.0" y="576.8" font-size="8.3" font-weight="bold" fill="#000" text-anchor="start" textLength="9.4" lengthAdjust="spacingAndGlyphs" >50</text>
<text x="368.0" y="551.8" font-size="8.3" font-weight="bold" fill="#000" text-anchor="start" textLength="9.4" lengthAdjust="spacingAndGlyphs" >60</text>
<text x="174.5" y="545.0" font-size="9.3" font-weight="bold" fill="#000" text-anchor="start" textLength="51.5" lengthAdjust="spacingAndGlyphs" >Drop Size</text>
<text x="14.0" y="545.3" font-size="9.2" font-weight="normal" fill="#000" text-anchor="start" textLength="80.0" lengthAdjust="spacingAndGlyphs"  stroke="#000" stroke-width="0.25">Alt (1000ft MSL)</text>
<text x="293.3" y="544.9" font-size="9.2" font-weight="normal" fill="#000" text-anchor="start" textLength="92.0" lengthAdjust="spacingAndGlyphs"  stroke="#000" stroke-width="0.25">Drop Size(microns)</text>
<text x="435.0" y="175.8" font-size="8.3" font-weight="bold" fill="#000" text-anchor="end" textLength="4.7" lengthAdjust="spacingAndGlyphs" >0</text>
<text x="435.0" y="153.8" font-size="8.3" font-weight="bold" fill="#000" text-anchor="end" textLength="4.7" lengthAdjust="spacingAndGlyphs" >5</text>
<text x="435.0" y="126.6" font-size="8.3" font-weight="bold" fill="#000" text-anchor="end" textLength="9.4" lengthAdjust="spacingAndGlyphs" >10</text>
<text x="435.0" y="99.5" font-size="8.3" font-weight="bold" fill="#000" text-anchor="end" textLength="9.4" lengthAdjust="spacingAndGlyphs" >15</text>
<text x="435.0" y="72.4" font-size="8.3" font-weight="bold" fill="#000" text-anchor="end" textLength="9.4" lengthAdjust="spacingAndGlyphs" >20</text>
<text x="435.0" y="47.2" font-size="8.3" font-weight="bold" fill="#000" text-anchor="end" textLength="9.4" lengthAdjust="spacingAndGlyphs" >25</text>
<text x="436.0" y="195.5" font-size="8.3" font-weight="bold" fill="#000" text-anchor="start" textLength="22.5" lengthAdjust="spacingAndGlyphs" >18:40</text>
<text x="486.0" y="195.5" font-size="8.3" font-weight="bold" fill="#000" text-anchor="start" textLength="22.5" lengthAdjust="spacingAndGlyphs" >19:00</text>
<text x="537.0" y="195.5" font-size="8.3" font-weight="bold" fill="#000" text-anchor="start" textLength="22.5" lengthAdjust="spacingAndGlyphs" >19:20</text>
<text x="587.0" y="195.5" font-size="8.3" font-weight="bold" fill="#000" text-anchor="start" textLength="22.5" lengthAdjust="spacingAndGlyphs" >19:40</text>
<text x="637.0" y="195.5" font-size="8.3" font-weight="bold" fill="#000" text-anchor="start" textLength="22.5" lengthAdjust="spacingAndGlyphs" >20:00</text>
<text x="688.0" y="195.5" font-size="8.3" font-weight="bold" fill="#000" text-anchor="start" textLength="22.5" lengthAdjust="spacingAndGlyphs" >20:20</text>
<text x="738.0" y="195.5" font-size="8.3" font-weight="bold" fill="#000" text-anchor="start" textLength="22.5" lengthAdjust="spacingAndGlyphs" >20:40</text>
<text x="406.4" y="41.3" font-size="9.2" font-weight="normal" fill="#000" text-anchor="start" textLength="80.0" lengthAdjust="spacingAndGlyphs"  stroke="#000" stroke-width="0.25">Alt (1000ft MSL)</text>
<text x="435.0" y="353.8" font-size="8.3" font-weight="bold" fill="#000" text-anchor="end" textLength="4.7" lengthAdjust="spacingAndGlyphs" >0</text>
<text x="435.0" y="331.8" font-size="8.3" font-weight="bold" fill="#000" text-anchor="end" textLength="4.7" lengthAdjust="spacingAndGlyphs" >5</text>
<text x="435.0" y="304.6" font-size="8.3" font-weight="bold" fill="#000" text-anchor="end" textLength="9.4" lengthAdjust="spacingAndGlyphs" >10</text>
<text x="435.0" y="277.5" font-size="8.3" font-weight="bold" fill="#000" text-anchor="end" textLength="9.4" lengthAdjust="spacingAndGlyphs" >15</text>
<text x="435.0" y="250.4" font-size="8.3" font-weight="bold" fill="#000" text-anchor="end" textLength="9.4" lengthAdjust="spacingAndGlyphs" >20</text>
<text x="435.0" y="225.2" font-size="8.3" font-weight="bold" fill="#000" text-anchor="end" textLength="9.4" lengthAdjust="spacingAndGlyphs" >25</text>
<text x="436.0" y="373.0" font-size="8.3" font-weight="bold" fill="#000" text-anchor="start" textLength="22.5" lengthAdjust="spacingAndGlyphs" >18:40</text>
<text x="486.0" y="373.0" font-size="8.3" font-weight="bold" fill="#000" text-anchor="start" textLength="22.5" lengthAdjust="spacingAndGlyphs" >19:00</text>
<text x="537.0" y="373.0" font-size="8.3" font-weight="bold" fill="#000" text-anchor="start" textLength="22.5" lengthAdjust="spacingAndGlyphs" >19:20</text>
<text x="587.0" y="373.0" font-size="8.3" font-weight="bold" fill="#000" text-anchor="start" textLength="22.5" lengthAdjust="spacingAndGlyphs" >19:40</text>
<text x="637.0" y="373.0" font-size="8.3" font-weight="bold" fill="#000" text-anchor="start" textLength="22.5" lengthAdjust="spacingAndGlyphs" >20:00</text>
<text x="688.0" y="373.0" font-size="8.3" font-weight="bold" fill="#000" text-anchor="start" textLength="22.5" lengthAdjust="spacingAndGlyphs" >20:20</text>
<text x="738.0" y="373.0" font-size="8.3" font-weight="bold" fill="#000" text-anchor="start" textLength="22.5" lengthAdjust="spacingAndGlyphs" >20:40</text>
<text x="760.0" y="354.4" font-size="8.3" font-weight="bold" fill="#000" text-anchor="start" textLength="11.7" lengthAdjust="spacingAndGlyphs" >0.0</text>
<text x="760.0" y="291.6" font-size="8.3" font-weight="bold" fill="#000" text-anchor="start" textLength="11.7" lengthAdjust="spacingAndGlyphs" >0.1</text>
<text x="760.0" y="225.6" font-size="8.3" font-weight="bold" fill="#000" text-anchor="start" textLength="11.7" lengthAdjust="spacingAndGlyphs" >0.2</text>
<text x="406.4" y="218.5" font-size="9.2" font-weight="normal" fill="#000" text-anchor="start" textLength="80.0" lengthAdjust="spacingAndGlyphs"  stroke="#000" stroke-width="0.25">Alt (1000ft MSL)</text>
<text x="722.0" y="218.5" font-size="9.2" font-weight="normal" fill="#000" text-anchor="start" textLength="55.0" lengthAdjust="spacingAndGlyphs"  stroke="#000" stroke-width="0.25">LWC(g/m3)</text>
<text x="435.0" y="532.8" font-size="8.3" font-weight="bold" fill="#000" text-anchor="end" textLength="4.7" lengthAdjust="spacingAndGlyphs" >0</text>
<text x="435.0" y="503.9" font-size="8.3" font-weight="bold" fill="#000" text-anchor="end" textLength="11.7" lengthAdjust="spacingAndGlyphs" >8.5</text>
<text x="435.0" y="469.9" font-size="8.3" font-weight="bold" fill="#000" text-anchor="end" textLength="9.4" lengthAdjust="spacingAndGlyphs" >17</text>
<text x="435.0" y="435.9" font-size="8.3" font-weight="bold" fill="#000" text-anchor="end" textLength="16.4" lengthAdjust="spacingAndGlyphs" >25.5</text>
<text x="435.0" y="403.9" font-size="8.3" font-weight="bold" fill="#000" text-anchor="end" textLength="9.4" lengthAdjust="spacingAndGlyphs" >34</text>
<text x="436.0" y="551.5" font-size="8.3" font-weight="bold" fill="#000" text-anchor="start" textLength="22.5" lengthAdjust="spacingAndGlyphs" >18:40</text>
<text x="486.0" y="551.5" font-size="8.3" font-weight="bold" fill="#000" text-anchor="start" textLength="22.5" lengthAdjust="spacingAndGlyphs" >19:00</text>
<text x="537.0" y="551.5" font-size="8.3" font-weight="bold" fill="#000" text-anchor="start" textLength="22.5" lengthAdjust="spacingAndGlyphs" >19:20</text>
<text x="587.0" y="551.5" font-size="8.3" font-weight="bold" fill="#000" text-anchor="start" textLength="22.5" lengthAdjust="spacingAndGlyphs" >19:40</text>
<text x="637.0" y="551.5" font-size="8.3" font-weight="bold" fill="#000" text-anchor="start" textLength="22.5" lengthAdjust="spacingAndGlyphs" >20:00</text>
<text x="688.0" y="551.5" font-size="8.3" font-weight="bold" fill="#000" text-anchor="start" textLength="22.5" lengthAdjust="spacingAndGlyphs" >20:20</text>
<text x="738.0" y="551.5" font-size="8.3" font-weight="bold" fill="#000" text-anchor="start" textLength="22.5" lengthAdjust="spacingAndGlyphs" >20:40</text>
<text x="760.0" y="532.4" font-size="8.3" font-weight="bold" fill="#000" text-anchor="start" textLength="14.1" lengthAdjust="spacingAndGlyphs" >210</text>
<text x="760.0" y="503.6" font-size="8.3" font-weight="bold" fill="#000" text-anchor="start" textLength="14.1" lengthAdjust="spacingAndGlyphs" >230</text>
<text x="760.0" y="469.6" font-size="8.3" font-weight="bold" fill="#000" text-anchor="start" textLength="14.1" lengthAdjust="spacingAndGlyphs" >250</text>
<text x="760.0" y="435.6" font-size="8.3" font-weight="bold" fill="#000" text-anchor="start" textLength="14.1" lengthAdjust="spacingAndGlyphs" >270</text>
<text x="760.0" y="403.6" font-size="8.3" font-weight="bold" fill="#000" text-anchor="start" textLength="14.1" lengthAdjust="spacingAndGlyphs" >290</text>
<text x="406.4" y="397.0" font-size="9.2" font-weight="normal" fill="#000" text-anchor="start" textLength="80.0" lengthAdjust="spacingAndGlyphs"  stroke="#000" stroke-width="0.25">Alt (1000ft MSL)</text>
<text x="736.0" y="397.0" font-size="9.2" font-weight="normal" fill="#000" text-anchor="start" textLength="41.0" lengthAdjust="spacingAndGlyphs"  stroke="#000" stroke-width="0.25">Temp(K)</text>
<text x="435.0" y="710.5" font-size="8.3" font-weight="bold" fill="#000" text-anchor="end" textLength="4.7" lengthAdjust="spacingAndGlyphs" >0</text>
<text x="435.0" y="647.6" font-size="8.3" font-weight="bold" fill="#000" text-anchor="end" textLength="4.7" lengthAdjust="spacingAndGlyphs" >1</text>
<text x="435.0" y="581.6" font-size="8.3" font-weight="bold" fill="#000" text-anchor="end" textLength="4.7" lengthAdjust="spacingAndGlyphs" >2</text>
<text x="436.0" y="729.7" font-size="8.3" font-weight="bold" fill="#000" text-anchor="start" textLength="22.5" lengthAdjust="spacingAndGlyphs" >18:40</text>
<text x="486.0" y="729.7" font-size="8.3" font-weight="bold" fill="#000" text-anchor="start" textLength="22.5" lengthAdjust="spacingAndGlyphs" >19:00</text>
<text x="537.0" y="729.7" font-size="8.3" font-weight="bold" fill="#000" text-anchor="start" textLength="22.5" lengthAdjust="spacingAndGlyphs" >19:20</text>
<text x="587.0" y="729.7" font-size="8.3" font-weight="bold" fill="#000" text-anchor="start" textLength="22.5" lengthAdjust="spacingAndGlyphs" >19:40</text>
<text x="637.0" y="729.7" font-size="8.3" font-weight="bold" fill="#000" text-anchor="start" textLength="22.5" lengthAdjust="spacingAndGlyphs" >20:00</text>
<text x="688.0" y="729.7" font-size="8.3" font-weight="bold" fill="#000" text-anchor="start" textLength="22.5" lengthAdjust="spacingAndGlyphs" >20:20</text>
<text x="738.0" y="729.7" font-size="8.3" font-weight="bold" fill="#000" text-anchor="start" textLength="22.5" lengthAdjust="spacingAndGlyphs" >20:40</text>
<text x="406.5" y="575.0" font-size="9.2" font-weight="normal" fill="#000" text-anchor="start" textLength="17.5" lengthAdjust="spacingAndGlyphs"  stroke="#000" stroke-width="0.25">ILW</text>
<text x="818.4" y="72.0" font-size="20" font-weight="bold" fill="#333" text-anchor="start" textLength="147.6" lengthAdjust="spacingAndGlyphs" >NIRSS - Local</text>
<text x="873.6" y="116.7" font-size="11" font-weight="bold" fill="#333" text-anchor="start" textLength="32.4" lengthAdjust="spacingAndGlyphs" >Mode:</text>
<text x="820.6" y="145.0" font-size="10" font-weight="bold" fill="#fff" text-anchor="start" textLength="53.8" lengthAdjust="spacingAndGlyphs" >REALTIME</text>
<text x="914.4" y="145.0" font-size="10" font-weight="bold" fill="#fff" text-anchor="start" textLength="48.6" lengthAdjust="spacingAndGlyphs" >ARCHIVE</text>
<text x="839.4" y="173.0" font-size="11" font-weight="bold" fill="#333" text-anchor="start" textLength="104.0" lengthAdjust="spacingAndGlyphs" >Display time (UTC)</text>
<text x="806.0" y="199.6" font-size="11" font-weight="bold" fill="#222" text-anchor="start" textLength="116.0" lengthAdjust="spacingAndGlyphs" >2012-02-14 20:40:00</text>
<text x="959.4" y="200.0" font-size="10" font-weight="bold" fill="#222" text-anchor="start" textLength="15.6" lengthAdjust="spacingAndGlyphs" >GO</text>
<text x="813.0" y="264.0" font-size="13" font-weight="normal" fill="#222" text-anchor="start" textLength="78.6" lengthAdjust="spacingAndGlyphs" stroke="#222" stroke-width="0.35">Time zoom:</text>
<text x="901.6" y="264.0" font-size="13" font-weight="normal" fill="#222" text-anchor="start" textLength="33.4" lengthAdjust="spacingAndGlyphs" stroke="#222" stroke-width="0.35">2 hrs</text>
<text x="404.0" y="14.9" font-size="11" font-weight="normal" fill="#222" text-anchor="start" textLength="167.0" lengthAdjust="spacingAndGlyphs" stroke="#222" stroke-width="0.2">NIRSS - Local &lt;@jlab-nima1&gt;</text>
</svg></body></html>
